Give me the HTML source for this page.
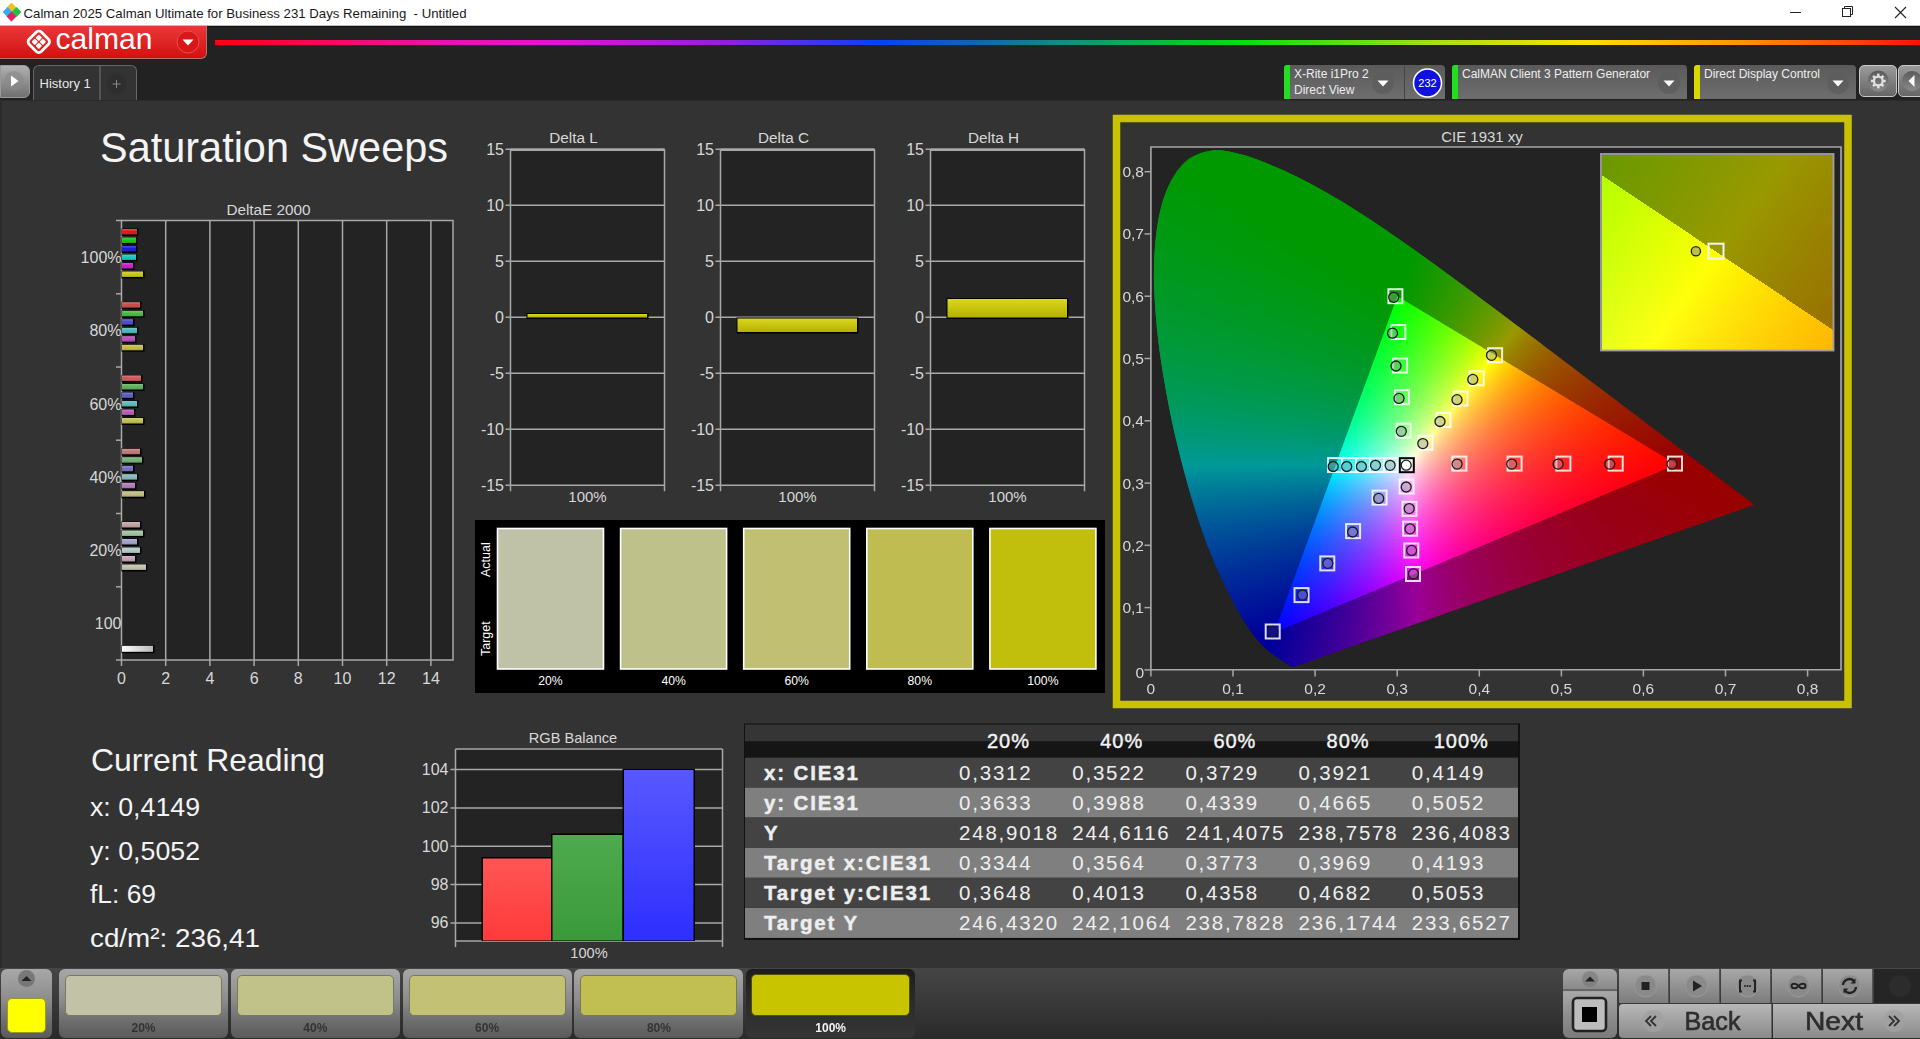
<!DOCTYPE html><html><head><meta charset="utf-8"><style>
*{margin:0;padding:0;box-sizing:border-box}
html,body{width:1920px;height:1039px;overflow:hidden;background:#333;font-family:"Liberation Sans",sans-serif}
.abs{position:absolute}
#title{left:0;top:0;width:1920px;height:26px;background:#fff;border-bottom:1px solid #bdbdbd}
#tb{left:0;top:26px;width:1920px;height:74px;background:#222;border-top:1px solid #111}
#main{left:0;top:100px;width:1920px;height:868px;background:#333;border-top:1px solid #2a2a2a;border-left:2px solid #2b2b2b}
#bot{left:0;top:968px;width:1920px;height:71px;background:#333}
svg text{font-family:"Liberation Sans",sans-serif}
</style></head><body>

<div id="title" class="abs">
<svg class="abs" style="left:2px;top:3px" width="20" height="20" viewBox="0 0 20 20">
<rect x="6" y="1" width="7" height="7" transform="rotate(45 9.5 4.5)" fill="#f0c020"/>
<rect x="2" y="5.5" width="7" height="7" transform="rotate(45 5.5 9)" fill="#30b0f0"/>
<rect x="11" y="5.5" width="7" height="7" transform="rotate(45 14.5 9)" fill="#20c040"/>
<rect x="6" y="10" width="7" height="7" transform="rotate(45 9.5 13.5)" fill="#e02060"/>
</svg>
<svg class="abs" style="left:0;top:0" width="520" height="25"><text x="23.5" y="17.8" font-size="13.6" fill="#1a1a1a" textLength="443" lengthAdjust="spacingAndGlyphs" xml:space="preserve">Calman 2025 Calman Ultimate for Business 231 Days Remaining  - Untitled</text></svg>
<svg class="abs" style="left:1780px;top:0" width="140" height="25">
<line x1="10" y1="12.5" x2="21" y2="12.5" stroke="#222" stroke-width="1"/>
<rect x="62.5" y="8.5" width="8" height="8" fill="none" stroke="#222"/>
<path d="M64.5 8.5V6.5H72.5V14.5H70.5" fill="none" stroke="#222"/>
<path d="M115 7L126 18M126 7L115 18" stroke="#222" stroke-width="1.1"/>
</svg>
</div>
<div id="tb" class="abs"></div>
<div class="abs" style="left:0;top:26px;width:207px;height:33px;border-radius:0 0 6px 0;background:linear-gradient(#e83838,#d41010);border-bottom:1px solid #b07070;border-right:1px solid #b07070"></div>
<svg class="abs" style="left:0;top:26px" width="207" height="33">
<g transform="translate(38.8 15.8) rotate(45)">
<rect x="-8.6" y="-8.6" width="17.2" height="17.2" rx="3.5" fill="none" stroke="#fff" stroke-width="2.8"/>
<rect x="-5.2" y="-5.2" width="4.7" height="4.7" rx="1" fill="#fff"/>
<rect x="0.5" y="-5.2" width="4.7" height="4.7" rx="1" fill="#fff"/>
<rect x="-5.2" y="0.5" width="4.7" height="4.7" rx="1" fill="#fff"/>
<rect x="0.5" y="0.5" width="4.7" height="4.7" rx="1" fill="#fff"/>
</g>
<text x="55.5" y="23" font-size="29" fill="#fff" textLength="97" lengthAdjust="spacingAndGlyphs">calman</text>
<circle cx="188" cy="16" r="11" fill="#d81818" stroke="#e85050" stroke-width="1"/>
<path d="M182.5 13.5h11l-5.5 6z" fill="#fff"/>
</svg>
<div class="abs" style="left:215px;top:40px;width:1705px;height:5px;background:linear-gradient(90deg,#ff0010 0%,#f010a0 12%,#e810d8 20%,#9020e0 30%,#0840ff 39%,#1070a0 46%,#109080 50%,#00e010 60%,#a0e010 71%,#ffe000 80.5%,#ff9000 90%,#ff1010 100%)"></div>
<div class="abs" style="left:0;top:65px;width:30px;height:33px;border-radius:0 6px 6px 0;background:linear-gradient(#b0b0b0,#707070);border:1px solid #999"></div>
<svg class="abs" style="left:0;top:65px" width="30" height="33"><circle cx="14" cy="16" r="10" fill="#888" opacity="0.6"/><path d="M11 10.5v11l7.5-5.5z" fill="#fff"/></svg>
<div class="abs" style="left:33px;top:65px;width:104px;height:35px;border-radius:6px 6px 0 0;background:#333;border:1px solid #666;border-bottom:none"></div>
<div class="abs" style="left:99px;top:66px;width:2px;height:34px;background:#555"></div>
<div class="abs" style="left:39.5px;top:75.5px;font-size:13px;color:#e8e8e8;line-height:16px">History 1</div>
<svg class="abs" style="left:102px;top:66px" width="34" height="34"><circle cx="14.5" cy="18" r="10" fill="#2e2e2e"/><path d="M14.5 14v8M10.5 18h8" stroke="#888" stroke-width="1"/></svg>

<div class="abs" style="left:1284px;top:65px;width:161px;height:34px;border-radius:4px 4px 0 0;background:linear-gradient(#5a5a5a,#6e6e6e);"></div><div class="abs" style="left:1284px;top:65px;width:6px;height:34px;background:#22dd22;border-radius:3px 0 0 0"></div><div class="abs" style="left:1294px;top:67px;font-size:12px;color:#eee;line-height:14px;white-space:nowrap">X-Rite i1Pro 2</div><div class="abs" style="left:1294px;top:83px;font-size:12px;color:#eee;line-height:14px;white-space:nowrap">Direct View</div><svg class="abs" style="left:1370px;top:70px" width="26" height="26"><circle cx="13" cy="13" r="11" fill="#5c5c5c" opacity="0.8"/><path d="M7.5 10.5h11l-5.5 6z" fill="#fff"/></svg>
<div class="abs" style="left:1404px;top:66px;width:1px;height:33px;background:#444"></div>
<svg class="abs" style="left:1412px;top:68px" width="32" height="32"><circle cx="15.5" cy="15" r="14" fill="#1010e0" stroke="#fff" stroke-width="1.5"/><text x="15.5" y="19" font-size="11" fill="#fff" text-anchor="middle">232</text></svg>
<div class="abs" style="left:1452px;top:65px;width:235px;height:34px;border-radius:4px 4px 0 0;background:linear-gradient(#5a5a5a,#6e6e6e);"></div><div class="abs" style="left:1452px;top:65px;width:6px;height:34px;background:#22dd22;border-radius:3px 0 0 0"></div><div class="abs" style="left:1462px;top:67px;font-size:12px;color:#eee;line-height:14px;white-space:nowrap">CalMAN Client 3 Pattern Generator</div><svg class="abs" style="left:1656px;top:70px" width="26" height="26"><circle cx="13" cy="13" r="11" fill="#5c5c5c" opacity="0.8"/><path d="M7.5 10.5h11l-5.5 6z" fill="#fff"/></svg>
<div class="abs" style="left:1694px;top:65px;width:162px;height:34px;border-radius:4px 4px 0 0;background:linear-gradient(#5a5a5a,#6e6e6e);"></div><div class="abs" style="left:1694px;top:65px;width:6px;height:34px;background:#d8d800;border-radius:3px 0 0 0"></div><div class="abs" style="left:1704px;top:67px;font-size:12px;color:#eee;line-height:14px;white-space:nowrap">Direct Display Control</div><svg class="abs" style="left:1825px;top:70px" width="26" height="26"><circle cx="13" cy="13" r="11" fill="#5c5c5c" opacity="0.8"/><path d="M7.5 10.5h11l-5.5 6z" fill="#fff"/></svg>
<div class="abs" style="left:1859px;top:65px;width:38px;height:32px;border-radius:5px;background:linear-gradient(#9a9a9a,#666);border:1.5px solid #c8c8c8"></div>
<svg class="abs" style="left:1859px;top:65px" width="38" height="32"><defs><linearGradient id="gdk" x1="0" y1="0" x2="0" y2="1"><stop offset="0" stop-color="#5a5a5a"/><stop offset="1" stop-color="#8a8a8a"/></linearGradient></defs>
<circle cx="19.3" cy="16" r="10.5" fill="url(#gdk)"/>
<g transform="translate(19.3 16)" fill="#e0e0e0"><circle r="4.4" fill="none" stroke="#e0e0e0" stroke-width="2.3"/>
<rect x="-1.25" y="-7.4" width="2.5" height="3"/><rect x="-1.25" y="-7.4" width="2.5" height="3" transform="rotate(45)"/><rect x="-1.25" y="-7.4" width="2.5" height="3" transform="rotate(90)"/><rect x="-1.25" y="-7.4" width="2.5" height="3" transform="rotate(135)"/><rect x="-1.25" y="-7.4" width="2.5" height="3" transform="rotate(180)"/><rect x="-1.25" y="-7.4" width="2.5" height="3" transform="rotate(225)"/><rect x="-1.25" y="-7.4" width="2.5" height="3" transform="rotate(270)"/><rect x="-1.25" y="-7.4" width="2.5" height="3" transform="rotate(315)"/></g></svg>
<div class="abs" style="left:1898px;top:65px;width:24px;height:32px;border-radius:5px 0 0 5px;background:linear-gradient(#9a9a9a,#666);border:1.5px solid #c8c8c8"></div>
<svg class="abs" style="left:1898px;top:65px" width="22" height="32"><circle cx="14" cy="16" r="10" fill="url(#gdk)"/><path d="M10.5 16l6 -6v12z" fill="#fff"/></svg>

<div id="main" class="abs"></div>
<svg class="abs" style="left:0;top:0" width="1920" height="1039">
<text x="100" y="162.3" font-size="42" fill="#f4f4f4" textLength="348" lengthAdjust="spacingAndGlyphs">Saturation Sweeps</text>
<text x="268.5" y="215" font-size="15.3" fill="#d8d8d8" text-anchor="middle">DeltaE 2000</text>
<rect x="121.5" y="220.5" width="331.5" height="439.5" fill="#232323"/>
<line x1="165.7" y1="220.5" x2="165.7" y2="660" stroke="#a8a8a8" stroke-width="1.5"/>
<line x1="209.9" y1="220.5" x2="209.9" y2="660" stroke="#a8a8a8" stroke-width="1.5"/>
<line x1="254.1" y1="220.5" x2="254.1" y2="660" stroke="#a8a8a8" stroke-width="1.5"/>
<line x1="298.3" y1="220.5" x2="298.3" y2="660" stroke="#a8a8a8" stroke-width="1.5"/>
<line x1="342.5" y1="220.5" x2="342.5" y2="660" stroke="#a8a8a8" stroke-width="1.5"/>
<line x1="386.7" y1="220.5" x2="386.7" y2="660" stroke="#a8a8a8" stroke-width="1.5"/>
<line x1="430.9" y1="220.5" x2="430.9" y2="660" stroke="#a8a8a8" stroke-width="1.5"/>
<path d="M121.5 220.5 H453 V660 H121.5 Z" fill="none" stroke="#a8a8a8" stroke-width="1.5"/>
<line x1="116" y1="220.5" x2="121.5" y2="220.5" stroke="#a8a8a8" stroke-width="1.5"/>
<line x1="116" y1="293.8" x2="121.5" y2="293.8" stroke="#a8a8a8" stroke-width="1.5"/>
<line x1="116" y1="367.0" x2="121.5" y2="367.0" stroke="#a8a8a8" stroke-width="1.5"/>
<line x1="116" y1="440.2" x2="121.5" y2="440.2" stroke="#a8a8a8" stroke-width="1.5"/>
<line x1="116" y1="513.5" x2="121.5" y2="513.5" stroke="#a8a8a8" stroke-width="1.5"/>
<line x1="116" y1="586.8" x2="121.5" y2="586.8" stroke="#a8a8a8" stroke-width="1.5"/>
<line x1="116" y1="660.0" x2="121.5" y2="660.0" stroke="#a8a8a8" stroke-width="1.5"/>
<text x="121.5" y="263.1" font-size="16" fill="#d8d8d8" text-anchor="end">100%</text>
<text x="121.5" y="336.4" font-size="16" fill="#d8d8d8" text-anchor="end">80%</text>
<text x="121.5" y="409.6" font-size="16" fill="#d8d8d8" text-anchor="end">60%</text>
<text x="121.5" y="482.9" font-size="16" fill="#d8d8d8" text-anchor="end">40%</text>
<text x="121.5" y="556.1" font-size="16" fill="#d8d8d8" text-anchor="end">20%</text>
<text x="121.5" y="629.4" font-size="16" fill="#d8d8d8" text-anchor="end">100</text>
<line x1="121.5" y1="660" x2="121.5" y2="666" stroke="#a8a8a8" stroke-width="1.5"/>
<text x="121.5" y="684" font-size="16" fill="#d8d8d8" text-anchor="middle">0</text>
<line x1="165.7" y1="660" x2="165.7" y2="666" stroke="#a8a8a8" stroke-width="1.5"/>
<text x="165.7" y="684" font-size="16" fill="#d8d8d8" text-anchor="middle">2</text>
<line x1="209.9" y1="660" x2="209.9" y2="666" stroke="#a8a8a8" stroke-width="1.5"/>
<text x="209.9" y="684" font-size="16" fill="#d8d8d8" text-anchor="middle">4</text>
<line x1="254.1" y1="660" x2="254.1" y2="666" stroke="#a8a8a8" stroke-width="1.5"/>
<text x="254.1" y="684" font-size="16" fill="#d8d8d8" text-anchor="middle">6</text>
<line x1="298.3" y1="660" x2="298.3" y2="666" stroke="#a8a8a8" stroke-width="1.5"/>
<text x="298.3" y="684" font-size="16" fill="#d8d8d8" text-anchor="middle">8</text>
<line x1="342.5" y1="660" x2="342.5" y2="666" stroke="#a8a8a8" stroke-width="1.5"/>
<text x="342.5" y="684" font-size="16" fill="#d8d8d8" text-anchor="middle">10</text>
<line x1="386.7" y1="660" x2="386.7" y2="666" stroke="#a8a8a8" stroke-width="1.5"/>
<text x="386.7" y="684" font-size="16" fill="#d8d8d8" text-anchor="middle">12</text>
<line x1="430.9" y1="660" x2="430.9" y2="666" stroke="#a8a8a8" stroke-width="1.5"/>
<text x="430.9" y="684" font-size="16" fill="#d8d8d8" text-anchor="middle">14</text>
<defs><linearGradient id="bsh" x1="0" y1="0" x2="0" y2="1"><stop offset="0" stop-color="#fff" stop-opacity="0.25"/><stop offset="0.5" stop-color="#fff" stop-opacity="0"/><stop offset="1" stop-color="#000" stop-opacity="0.2"/></linearGradient></defs>
<rect x="121.5" y="228.5" width="17" height="7.5" fill="#000"/>
<rect x="122" y="229.0" width="15" height="5.5" fill="#d81818"/>
<rect x="122" y="229.0" width="15" height="5.5" fill="url(#bsh)"/>
<rect x="121.5" y="237.0" width="16" height="7.5" fill="#000"/>
<rect x="122" y="237.5" width="14" height="5.5" fill="#18c018"/>
<rect x="122" y="237.5" width="14" height="5.5" fill="url(#bsh)"/>
<rect x="121.5" y="245.5" width="16" height="7.5" fill="#000"/>
<rect x="122" y="246.0" width="14" height="5.5" fill="#1818d0"/>
<rect x="122" y="246.0" width="14" height="5.5" fill="url(#bsh)"/>
<rect x="121.5" y="254.0" width="16" height="7.5" fill="#000"/>
<rect x="122" y="254.5" width="14" height="5.5" fill="#18c0c0"/>
<rect x="122" y="254.5" width="14" height="5.5" fill="url(#bsh)"/>
<rect x="121.5" y="262.5" width="13" height="7.5" fill="#000"/>
<rect x="122" y="263.0" width="11" height="5.5" fill="#c818c8"/>
<rect x="122" y="263.0" width="11" height="5.5" fill="url(#bsh)"/>
<rect x="121.5" y="271.0" width="23" height="7.5" fill="#000"/>
<rect x="122" y="271.5" width="21" height="5.5" fill="#c8c418"/>
<rect x="122" y="271.5" width="21" height="5.5" fill="url(#bsh)"/>
<rect x="121.5" y="301.8" width="20" height="7.5" fill="#000"/>
<rect x="122" y="302.2" width="18" height="5.5" fill="#c84848"/>
<rect x="122" y="302.2" width="18" height="5.5" fill="url(#bsh)"/>
<rect x="121.5" y="310.2" width="23" height="7.5" fill="#000"/>
<rect x="122" y="310.8" width="21" height="5.5" fill="#48b848"/>
<rect x="122" y="310.8" width="21" height="5.5" fill="url(#bsh)"/>
<rect x="121.5" y="318.8" width="13" height="7.5" fill="#000"/>
<rect x="122" y="319.2" width="11" height="5.5" fill="#4848c8"/>
<rect x="122" y="319.2" width="11" height="5.5" fill="url(#bsh)"/>
<rect x="121.5" y="327.2" width="17" height="7.5" fill="#000"/>
<rect x="122" y="327.8" width="15" height="5.5" fill="#48b8b8"/>
<rect x="122" y="327.8" width="15" height="5.5" fill="url(#bsh)"/>
<rect x="121.5" y="335.8" width="15" height="7.5" fill="#000"/>
<rect x="122" y="336.2" width="13" height="5.5" fill="#b848b8"/>
<rect x="122" y="336.2" width="13" height="5.5" fill="url(#bsh)"/>
<rect x="121.5" y="344.2" width="23" height="7.5" fill="#000"/>
<rect x="122" y="344.8" width="21" height="5.5" fill="#c0bc48"/>
<rect x="122" y="344.8" width="21" height="5.5" fill="url(#bsh)"/>
<rect x="121.5" y="375.0" width="21" height="7.5" fill="#000"/>
<rect x="122" y="375.5" width="19" height="5.5" fill="#c85858"/>
<rect x="122" y="375.5" width="19" height="5.5" fill="url(#bsh)"/>
<rect x="121.5" y="383.5" width="23" height="7.5" fill="#000"/>
<rect x="122" y="384.0" width="21" height="5.5" fill="#58b058"/>
<rect x="122" y="384.0" width="21" height="5.5" fill="url(#bsh)"/>
<rect x="121.5" y="392.0" width="13" height="7.5" fill="#000"/>
<rect x="122" y="392.5" width="11" height="5.5" fill="#5858c0"/>
<rect x="122" y="392.5" width="11" height="5.5" fill="url(#bsh)"/>
<rect x="121.5" y="400.5" width="17" height="7.5" fill="#000"/>
<rect x="122" y="401.0" width="15" height="5.5" fill="#58b8b8"/>
<rect x="122" y="401.0" width="15" height="5.5" fill="url(#bsh)"/>
<rect x="121.5" y="409.0" width="14" height="7.5" fill="#000"/>
<rect x="122" y="409.5" width="12" height="5.5" fill="#b858b8"/>
<rect x="122" y="409.5" width="12" height="5.5" fill="url(#bsh)"/>
<rect x="121.5" y="417.5" width="23" height="7.5" fill="#000"/>
<rect x="122" y="418.0" width="21" height="5.5" fill="#c0bc58"/>
<rect x="122" y="418.0" width="21" height="5.5" fill="url(#bsh)"/>
<rect x="121.5" y="448.2" width="20" height="7.5" fill="#000"/>
<rect x="122" y="448.8" width="18" height="5.5" fill="#c07878"/>
<rect x="122" y="448.8" width="18" height="5.5" fill="url(#bsh)"/>
<rect x="121.5" y="456.8" width="22" height="7.5" fill="#000"/>
<rect x="122" y="457.2" width="20" height="5.5" fill="#70b070"/>
<rect x="122" y="457.2" width="20" height="5.5" fill="url(#bsh)"/>
<rect x="121.5" y="465.2" width="13" height="7.5" fill="#000"/>
<rect x="122" y="465.8" width="11" height="5.5" fill="#7070c0"/>
<rect x="122" y="465.8" width="11" height="5.5" fill="url(#bsh)"/>
<rect x="121.5" y="473.8" width="17" height="7.5" fill="#000"/>
<rect x="122" y="474.2" width="15" height="5.5" fill="#80b8b8"/>
<rect x="122" y="474.2" width="15" height="5.5" fill="url(#bsh)"/>
<rect x="121.5" y="482.2" width="15" height="7.5" fill="#000"/>
<rect x="122" y="482.8" width="13" height="5.5" fill="#b078b8"/>
<rect x="122" y="482.8" width="13" height="5.5" fill="url(#bsh)"/>
<rect x="121.5" y="490.8" width="24" height="7.5" fill="#000"/>
<rect x="122" y="491.2" width="22" height="5.5" fill="#c0bc80"/>
<rect x="122" y="491.2" width="22" height="5.5" fill="url(#bsh)"/>
<rect x="121.5" y="521.5" width="20" height="7.5" fill="#000"/>
<rect x="122" y="522.0" width="18" height="5.5" fill="#c0a0a0"/>
<rect x="122" y="522.0" width="18" height="5.5" fill="url(#bsh)"/>
<rect x="121.5" y="530.0" width="23" height="7.5" fill="#000"/>
<rect x="122" y="530.5" width="21" height="5.5" fill="#a0c0a0"/>
<rect x="122" y="530.5" width="21" height="5.5" fill="url(#bsh)"/>
<rect x="121.5" y="538.5" width="17" height="7.5" fill="#000"/>
<rect x="122" y="539.0" width="15" height="5.5" fill="#a0a0c8"/>
<rect x="122" y="539.0" width="15" height="5.5" fill="url(#bsh)"/>
<rect x="121.5" y="547.0" width="20" height="7.5" fill="#000"/>
<rect x="122" y="547.5" width="18" height="5.5" fill="#b0c8c8"/>
<rect x="122" y="547.5" width="18" height="5.5" fill="url(#bsh)"/>
<rect x="121.5" y="555.5" width="15" height="7.5" fill="#000"/>
<rect x="122" y="556.0" width="13" height="5.5" fill="#c0a0b8"/>
<rect x="122" y="556.0" width="13" height="5.5" fill="url(#bsh)"/>
<rect x="121.5" y="564.0" width="26" height="7.5" fill="#000"/>
<rect x="122" y="564.5" width="24" height="5.5" fill="#c0c0a8"/>
<rect x="122" y="564.5" width="24" height="5.5" fill="url(#bsh)"/>
<defs><linearGradient id="wbar" x1="0" y1="0" x2="1" y2="0"><stop offset="0" stop-color="#fff"/><stop offset="1" stop-color="#b8b8b8"/></linearGradient></defs>
<rect x="121.5" y="645.2" width="33" height="8" fill="#000"/>
<rect x="122" y="645.8" width="31" height="6" fill="url(#wbar)"/>
<defs><linearGradient id="ybar" x1="0" y1="0" x2="0" y2="1"><stop offset="0" stop-color="#dcd820"/><stop offset="1" stop-color="#b4b000"/></linearGradient></defs>
<text x="573.5" y="143" font-size="15.3" fill="#d8d8d8" text-anchor="middle">Delta L</text>
<rect x="510.5" y="149.3" width="154" height="336" fill="#232323"/>
<line x1="505.5" y1="149.3" x2="664.5" y2="149.3" stroke="#a8a8a8" stroke-width="1.5"/>
<text x="504" y="155.1" font-size="16" fill="#d8d8d8" text-anchor="end">15</text>
<line x1="505.5" y1="205.3" x2="664.5" y2="205.3" stroke="#a8a8a8" stroke-width="1.5"/>
<text x="504" y="211.1" font-size="16" fill="#d8d8d8" text-anchor="end">10</text>
<line x1="505.5" y1="261.3" x2="664.5" y2="261.3" stroke="#a8a8a8" stroke-width="1.5"/>
<text x="504" y="267.1" font-size="16" fill="#d8d8d8" text-anchor="end">5</text>
<line x1="505.5" y1="317.3" x2="664.5" y2="317.3" stroke="#a8a8a8" stroke-width="1.5"/>
<text x="504" y="323.1" font-size="16" fill="#d8d8d8" text-anchor="end">0</text>
<line x1="505.5" y1="373.3" x2="664.5" y2="373.3" stroke="#a8a8a8" stroke-width="1.5"/>
<text x="504" y="379.1" font-size="16" fill="#d8d8d8" text-anchor="end">-5</text>
<line x1="505.5" y1="429.3" x2="664.5" y2="429.3" stroke="#a8a8a8" stroke-width="1.5"/>
<text x="504" y="435.1" font-size="16" fill="#d8d8d8" text-anchor="end">-10</text>
<line x1="505.5" y1="485.3" x2="664.5" y2="485.3" stroke="#a8a8a8" stroke-width="1.5"/>
<text x="504" y="491.1" font-size="16" fill="#d8d8d8" text-anchor="end">-15</text>
<path d="M510.5 149.3 V491.3 M664.5 149.3 V491.3" stroke="#a8a8a8" stroke-width="1.5"/>
<line x1="510.5" y1="149.7" x2="664.5" y2="149.7" stroke="#a8a8a8" stroke-width="2.6"/>
<rect x="526.5" y="313" width="122" height="6" fill="#000"/>
<rect x="527.5" y="314" width="119.5" height="3.5" fill="url(#ybar)"/>
<text x="587.5" y="502" font-size="15" fill="#d8d8d8" text-anchor="middle">100%</text>
<text x="783.5" y="143" font-size="15.3" fill="#d8d8d8" text-anchor="middle">Delta C</text>
<rect x="720.5" y="149.3" width="154" height="336" fill="#232323"/>
<line x1="715.5" y1="149.3" x2="874.5" y2="149.3" stroke="#a8a8a8" stroke-width="1.5"/>
<text x="714" y="155.1" font-size="16" fill="#d8d8d8" text-anchor="end">15</text>
<line x1="715.5" y1="205.3" x2="874.5" y2="205.3" stroke="#a8a8a8" stroke-width="1.5"/>
<text x="714" y="211.1" font-size="16" fill="#d8d8d8" text-anchor="end">10</text>
<line x1="715.5" y1="261.3" x2="874.5" y2="261.3" stroke="#a8a8a8" stroke-width="1.5"/>
<text x="714" y="267.1" font-size="16" fill="#d8d8d8" text-anchor="end">5</text>
<line x1="715.5" y1="317.3" x2="874.5" y2="317.3" stroke="#a8a8a8" stroke-width="1.5"/>
<text x="714" y="323.1" font-size="16" fill="#d8d8d8" text-anchor="end">0</text>
<line x1="715.5" y1="373.3" x2="874.5" y2="373.3" stroke="#a8a8a8" stroke-width="1.5"/>
<text x="714" y="379.1" font-size="16" fill="#d8d8d8" text-anchor="end">-5</text>
<line x1="715.5" y1="429.3" x2="874.5" y2="429.3" stroke="#a8a8a8" stroke-width="1.5"/>
<text x="714" y="435.1" font-size="16" fill="#d8d8d8" text-anchor="end">-10</text>
<line x1="715.5" y1="485.3" x2="874.5" y2="485.3" stroke="#a8a8a8" stroke-width="1.5"/>
<text x="714" y="491.1" font-size="16" fill="#d8d8d8" text-anchor="end">-15</text>
<path d="M720.5 149.3 V491.3 M874.5 149.3 V491.3" stroke="#a8a8a8" stroke-width="1.5"/>
<line x1="720.5" y1="149.7" x2="874.5" y2="149.7" stroke="#a8a8a8" stroke-width="2.6"/>
<rect x="736.5" y="317.5" width="122" height="16" fill="#000"/>
<rect x="737.5" y="318.5" width="119.5" height="13.5" fill="url(#ybar)"/>
<text x="797.5" y="502" font-size="15" fill="#d8d8d8" text-anchor="middle">100%</text>
<text x="993.5" y="143" font-size="15.3" fill="#d8d8d8" text-anchor="middle">Delta H</text>
<rect x="930.5" y="149.3" width="154" height="336" fill="#232323"/>
<line x1="925.5" y1="149.3" x2="1084.5" y2="149.3" stroke="#a8a8a8" stroke-width="1.5"/>
<text x="924" y="155.1" font-size="16" fill="#d8d8d8" text-anchor="end">15</text>
<line x1="925.5" y1="205.3" x2="1084.5" y2="205.3" stroke="#a8a8a8" stroke-width="1.5"/>
<text x="924" y="211.1" font-size="16" fill="#d8d8d8" text-anchor="end">10</text>
<line x1="925.5" y1="261.3" x2="1084.5" y2="261.3" stroke="#a8a8a8" stroke-width="1.5"/>
<text x="924" y="267.1" font-size="16" fill="#d8d8d8" text-anchor="end">5</text>
<line x1="925.5" y1="317.3" x2="1084.5" y2="317.3" stroke="#a8a8a8" stroke-width="1.5"/>
<text x="924" y="323.1" font-size="16" fill="#d8d8d8" text-anchor="end">0</text>
<line x1="925.5" y1="373.3" x2="1084.5" y2="373.3" stroke="#a8a8a8" stroke-width="1.5"/>
<text x="924" y="379.1" font-size="16" fill="#d8d8d8" text-anchor="end">-5</text>
<line x1="925.5" y1="429.3" x2="1084.5" y2="429.3" stroke="#a8a8a8" stroke-width="1.5"/>
<text x="924" y="435.1" font-size="16" fill="#d8d8d8" text-anchor="end">-10</text>
<line x1="925.5" y1="485.3" x2="1084.5" y2="485.3" stroke="#a8a8a8" stroke-width="1.5"/>
<text x="924" y="491.1" font-size="16" fill="#d8d8d8" text-anchor="end">-15</text>
<path d="M930.5 149.3 V491.3 M1084.5 149.3 V491.3" stroke="#a8a8a8" stroke-width="1.5"/>
<line x1="930.5" y1="149.7" x2="1084.5" y2="149.7" stroke="#a8a8a8" stroke-width="2.6"/>
<rect x="946.5" y="298" width="122" height="21" fill="#000"/>
<rect x="947.5" y="299" width="119.5" height="18.5" fill="url(#ybar)"/>
<text x="1007.5" y="502" font-size="15" fill="#d8d8d8" text-anchor="middle">100%</text>
<rect x="475" y="520" width="630" height="173" fill="#000"/>
<rect x="497.5" y="528.5" width="106" height="140.5" fill="#c0c2a7" stroke="#fff" stroke-width="1.6"/>
<text x="550.5" y="685" font-size="12.2" fill="#fff" text-anchor="middle">20%</text>
<rect x="620.6" y="528.5" width="106" height="140.5" fill="#bec28a" stroke="#fff" stroke-width="1.6"/>
<text x="673.6" y="685" font-size="12.2" fill="#fff" text-anchor="middle">40%</text>
<rect x="743.7" y="528.5" width="106" height="140.5" fill="#c0bf72" stroke="#fff" stroke-width="1.6"/>
<text x="796.7" y="685" font-size="12.2" fill="#fff" text-anchor="middle">60%</text>
<rect x="866.8" y="528.5" width="106" height="140.5" fill="#bfbd52" stroke="#fff" stroke-width="1.6"/>
<text x="919.8" y="685" font-size="12.2" fill="#fff" text-anchor="middle">80%</text>
<rect x="989.9" y="528.5" width="106" height="140.5" fill="#c1bf0c" stroke="#fff" stroke-width="1.6"/>
<text x="1042.9" y="685" font-size="12.2" fill="#fff" text-anchor="middle">100%</text>
<text transform="translate(490 577) rotate(-90)" font-size="12.5" fill="#fff">Actual</text>
<text transform="translate(490 656) rotate(-90)" font-size="12.5" fill="#fff">Target</text>
<text x="91" y="770.7" font-size="30.5" fill="#f4f4f4" textLength="234" lengthAdjust="spacingAndGlyphs">Current Reading</text>
<text x="90" y="816.0" font-size="26.5" fill="#f4f4f4" textLength="110" lengthAdjust="spacingAndGlyphs">x: 0,4149</text>
<text x="90" y="859.6" font-size="26.5" fill="#f4f4f4" textLength="110" lengthAdjust="spacingAndGlyphs">y: 0,5052</text>
<text x="90" y="903.2" font-size="26.5" fill="#f4f4f4" textLength="66" lengthAdjust="spacingAndGlyphs">fL: 69</text>
<text x="90" y="946.8" font-size="26.5" fill="#f4f4f4" textLength="170" lengthAdjust="spacingAndGlyphs">cd/m²: 236,41</text>
<text x="573" y="743" font-size="14.6" fill="#d8d8d8" text-anchor="middle">RGB Balance</text>
<rect x="455.5" y="749" width="267" height="192" fill="#232323"/>
<line x1="450.5" y1="769.5" x2="722.5" y2="769.5" stroke="#a8a8a8" stroke-width="1.5"/>
<text x="448.5" y="775.0" font-size="16" fill="#d8d8d8" text-anchor="end">104</text>
<line x1="450.5" y1="807.9" x2="722.5" y2="807.9" stroke="#a8a8a8" stroke-width="1.5"/>
<text x="448.5" y="813.4" font-size="16" fill="#d8d8d8" text-anchor="end">102</text>
<line x1="450.5" y1="846.2" x2="722.5" y2="846.2" stroke="#a8a8a8" stroke-width="1.5"/>
<text x="448.5" y="851.7" font-size="16" fill="#d8d8d8" text-anchor="end">100</text>
<line x1="450.5" y1="884.5" x2="722.5" y2="884.5" stroke="#a8a8a8" stroke-width="1.5"/>
<text x="448.5" y="890.0" font-size="16" fill="#d8d8d8" text-anchor="end">98</text>
<line x1="450.5" y1="922.9" x2="722.5" y2="922.9" stroke="#a8a8a8" stroke-width="1.5"/>
<text x="448.5" y="928.4" font-size="16" fill="#d8d8d8" text-anchor="end">96</text>
<path d="M455.5 749 V947 M722.5 749 V947 M455.5 749 H722.5" fill="none" stroke="#a8a8a8" stroke-width="1.5"/>
<line x1="455.5" y1="941" x2="722.5" y2="941" stroke="#a8a8a8" stroke-width="1.5"/>
<defs><linearGradient id="rb" x1="0" y1="0" x2="0" y2="1"><stop offset="0" stop-color="#ff5555"/><stop offset="1" stop-color="#ff3a3a"/></linearGradient><linearGradient id="gb" x1="0" y1="0" x2="0" y2="1"><stop offset="0" stop-color="#4eaa4e"/><stop offset="1" stop-color="#3a9a3a"/></linearGradient><linearGradient id="bb" x1="0" y1="0" x2="0" y2="1"><stop offset="0" stop-color="#5858ff"/><stop offset="1" stop-color="#2e2eff"/></linearGradient></defs>
<rect x="481.5" y="857" width="71" height="84" fill="#000"/>
<rect x="483" y="858.5" width="68" height="82" fill="url(#rb)"/>
<rect x="551" y="833.5" width="73" height="107.5" fill="#000"/>
<rect x="552.5" y="835" width="70" height="105.5" fill="url(#gb)"/>
<rect x="622.5" y="768.5" width="72.5" height="172.5" fill="#000"/>
<rect x="624" y="770" width="69.5" height="170.5" fill="url(#bb)"/>
<text x="589" y="958" font-size="14.6" fill="#d8d8d8" text-anchor="middle">100%</text>
<rect x="744" y="723.5" width="776" height="216.5" fill="#111"/>
<rect x="745" y="724.5" width="773" height="17" fill="#353535"/>
<rect x="745" y="741.5" width="773" height="16" fill="#151515"/>
<text x="1008.5" y="747.6" font-size="20" fill="#f4f4f4" stroke="#f4f4f4" stroke-width="0.4" text-anchor="middle" style="letter-spacing:1px">20%</text>
<text x="1121.7" y="747.6" font-size="20" fill="#f4f4f4" stroke="#f4f4f4" stroke-width="0.4" text-anchor="middle" style="letter-spacing:1px">40%</text>
<text x="1234.9" y="747.6" font-size="20" fill="#f4f4f4" stroke="#f4f4f4" stroke-width="0.4" text-anchor="middle" style="letter-spacing:1px">60%</text>
<text x="1348.1" y="747.6" font-size="20" fill="#f4f4f4" stroke="#f4f4f4" stroke-width="0.4" text-anchor="middle" style="letter-spacing:1px">80%</text>
<text x="1461.3" y="747.6" font-size="20" fill="#f4f4f4" stroke="#f4f4f4" stroke-width="0.4" text-anchor="middle" style="letter-spacing:1px">100%</text>
<rect x="745" y="757.6" width="773" height="30" fill="#434343"/>
<text x="764" y="779.6" font-size="20.5" font-weight="bold" fill="#eeeeee" stroke="#eeeeee" stroke-width="0.45" style="letter-spacing:1.85px">x: CIE31</text>
<text x="959.0" y="779.6" font-size="20.5" fill="#eeeeee" style="letter-spacing:1.8px">0,3312</text>
<text x="1072.2" y="779.6" font-size="20.5" fill="#eeeeee" style="letter-spacing:1.8px">0,3522</text>
<text x="1185.4" y="779.6" font-size="20.5" fill="#eeeeee" style="letter-spacing:1.8px">0,3729</text>
<text x="1298.6" y="779.6" font-size="20.5" fill="#eeeeee" style="letter-spacing:1.8px">0,3921</text>
<text x="1411.8" y="779.6" font-size="20.5" fill="#eeeeee" style="letter-spacing:1.8px">0,4149</text>
<rect x="745" y="787.6" width="773" height="30" fill="#7f7f7f"/>
<text x="764" y="809.6" font-size="20.5" font-weight="bold" fill="#eeeeee" stroke="#eeeeee" stroke-width="0.45" style="letter-spacing:1.85px">y: CIE31</text>
<text x="959.0" y="809.6" font-size="20.5" fill="#eeeeee" style="letter-spacing:1.8px">0,3633</text>
<text x="1072.2" y="809.6" font-size="20.5" fill="#eeeeee" style="letter-spacing:1.8px">0,3988</text>
<text x="1185.4" y="809.6" font-size="20.5" fill="#eeeeee" style="letter-spacing:1.8px">0,4339</text>
<text x="1298.6" y="809.6" font-size="20.5" fill="#eeeeee" style="letter-spacing:1.8px">0,4665</text>
<text x="1411.8" y="809.6" font-size="20.5" fill="#eeeeee" style="letter-spacing:1.8px">0,5052</text>
<rect x="745" y="817.7" width="773" height="30" fill="#434343"/>
<text x="764" y="839.7" font-size="20.5" font-weight="bold" fill="#eeeeee" stroke="#eeeeee" stroke-width="0.45" style="letter-spacing:1.85px">Y</text>
<text x="959.0" y="839.7" font-size="20.5" fill="#eeeeee" style="letter-spacing:1.8px">248,9018</text>
<text x="1072.2" y="839.7" font-size="20.5" fill="#eeeeee" style="letter-spacing:1.8px">244,6116</text>
<text x="1185.4" y="839.7" font-size="20.5" fill="#eeeeee" style="letter-spacing:1.8px">241,4075</text>
<text x="1298.6" y="839.7" font-size="20.5" fill="#eeeeee" style="letter-spacing:1.8px">238,7578</text>
<text x="1411.8" y="839.7" font-size="20.5" fill="#eeeeee" style="letter-spacing:1.8px">236,4083</text>
<rect x="745" y="847.8" width="773" height="30" fill="#7f7f7f"/>
<text x="764" y="869.8" font-size="20.5" font-weight="bold" fill="#eeeeee" stroke="#eeeeee" stroke-width="0.45" style="letter-spacing:1.85px">Target x:CIE31</text>
<text x="959.0" y="869.8" font-size="20.5" fill="#eeeeee" style="letter-spacing:1.8px">0,3344</text>
<text x="1072.2" y="869.8" font-size="20.5" fill="#eeeeee" style="letter-spacing:1.8px">0,3564</text>
<text x="1185.4" y="869.8" font-size="20.5" fill="#eeeeee" style="letter-spacing:1.8px">0,3773</text>
<text x="1298.6" y="869.8" font-size="20.5" fill="#eeeeee" style="letter-spacing:1.8px">0,3969</text>
<text x="1411.8" y="869.8" font-size="20.5" fill="#eeeeee" style="letter-spacing:1.8px">0,4193</text>
<rect x="745" y="877.8" width="773" height="30" fill="#434343"/>
<text x="764" y="899.8" font-size="20.5" font-weight="bold" fill="#eeeeee" stroke="#eeeeee" stroke-width="0.45" style="letter-spacing:1.85px">Target y:CIE31</text>
<text x="959.0" y="899.8" font-size="20.5" fill="#eeeeee" style="letter-spacing:1.8px">0,3648</text>
<text x="1072.2" y="899.8" font-size="20.5" fill="#eeeeee" style="letter-spacing:1.8px">0,4013</text>
<text x="1185.4" y="899.8" font-size="20.5" fill="#eeeeee" style="letter-spacing:1.8px">0,4358</text>
<text x="1298.6" y="899.8" font-size="20.5" fill="#eeeeee" style="letter-spacing:1.8px">0,4682</text>
<text x="1411.8" y="899.8" font-size="20.5" fill="#eeeeee" style="letter-spacing:1.8px">0,5053</text>
<rect x="745" y="907.9" width="773" height="30" fill="#7f7f7f"/>
<text x="764" y="929.9" font-size="20.5" font-weight="bold" fill="#eeeeee" stroke="#eeeeee" stroke-width="0.45" style="letter-spacing:1.85px">Target Y</text>
<text x="959.0" y="929.9" font-size="20.5" fill="#eeeeee" style="letter-spacing:1.8px">246,4320</text>
<text x="1072.2" y="929.9" font-size="20.5" fill="#eeeeee" style="letter-spacing:1.8px">242,1064</text>
<text x="1185.4" y="929.9" font-size="20.5" fill="#eeeeee" style="letter-spacing:1.8px">238,7828</text>
<text x="1298.6" y="929.9" font-size="20.5" fill="#eeeeee" style="letter-spacing:1.8px">236,1744</text>
<text x="1411.8" y="929.9" font-size="20.5" fill="#eeeeee" style="letter-spacing:1.8px">233,6527</text>
<rect x="1116.5" y="118.5" width="731.5" height="586" fill="none" stroke="#c8c200" stroke-width="7.5"/>
<text x="1482" y="142" font-size="15" fill="#d8d8d8" text-anchor="middle">CIE 1931 xy</text>
<rect x="1150.9" y="147" width="690" height="522.8" fill="#232323"/>
<defs><clipPath id="locclip"><path d="M1293.8 666.8 1293.8 666.8 1293.7 666.8 1293.7 666.8 1293.6 666.8 1293.5 666.9 1293.4 666.9 1293.3 666.9 1293.2 666.9 1293.0 666.9 1292.9 666.9 1292.8 666.9 1292.6 666.9 1292.4 666.9 1292.1 666.8 1291.9 666.8 1291.6 666.7 1291.4 666.6 1291.2 666.5 1290.9 666.4 1290.7 666.3 1290.4 666.1 1290.2 666.0 1289.9 665.8 1289.6 665.6 1289.2 665.4 1288.8 665.1 1288.4 664.8 1287.9 664.5 1287.4 664.2 1286.9 663.9 1286.4 663.5 1285.9 663.1 1285.2 662.7 1284.6 662.3 1283.9 661.8 1283.1 661.3 1282.3 660.8 1281.4 660.2 1280.5 659.5 1279.5 658.9 1278.4 658.2 1277.3 657.4 1276.1 656.6 1274.9 655.8 1273.5 654.8 1272.1 653.8 1270.7 652.7 1269.1 651.4 1267.5 650.1 1265.8 648.7 1264.1 647.0 1262.1 645.1 1260.0 642.8 1257.8 640.2 1255.3 637.3 1252.8 633.9 1250.0 630.1 1247.2 626.0 1244.1 621.3 1240.9 615.8 1237.4 609.8 1233.8 603.1 1229.9 595.6 1225.8 587.3 1221.5 578.0 1216.8 568.0 1212.1 557.0 1207.3 544.9 1202.5 531.7 1197.7 517.5 1192.9 502.3 1188.2 486.2 1183.5 469.0 1178.8 450.7 1174.3 431.9 1170.2 412.9 1166.5 393.5 1163.0 373.7 1160.0 353.9 1157.6 334.6 1155.8 315.7 1154.6 297.2 1153.9 279.2 1154.1 262.1 1155.0 245.8 1156.7 230.3 1159.1 215.8 1162.3 202.7 1166.4 191.0 1171.3 180.6 1176.8 171.6 1182.8 164.2 1189.4 158.6 1196.6 154.7 1204.2 152.1 1211.9 150.6 1219.8 150.3 1228.0 151.3 1236.3 153.2 1244.6 155.3 1253.0 157.9 1261.4 161.0 1269.7 164.5 1277.9 168.0 1285.9 171.6 1293.8 175.3 1301.5 179.1 1309.3 183.1 1316.9 187.2 1324.4 191.4 1331.9 195.7 1339.4 200.1 1346.8 204.6 1354.3 209.3 1361.7 214.0 1369.1 218.8 1376.5 223.7 1383.8 228.6 1391.1 233.7 1398.5 238.7 1405.8 243.9 1413.1 249.0 1420.5 254.3 1427.8 259.5 1435.1 264.8 1442.5 270.2 1449.8 275.6 1457.2 281.0 1464.5 286.4 1471.8 291.8 1479.1 297.3 1486.4 302.7 1493.7 308.1 1501.0 313.6 1508.2 319.0 1515.5 324.4 1522.6 329.8 1529.8 335.2 1536.9 340.6 1543.9 345.9 1550.9 351.2 1557.9 356.5 1564.8 361.7 1571.6 366.8 1578.4 371.9 1585.0 377.0 1591.6 382.0 1598.1 386.9 1604.5 391.7 1610.8 396.5 1617.0 401.1 1623.1 405.7 1629.0 410.2 1634.8 414.6 1640.4 418.8 1645.8 423.0 1651.0 426.9 1656.0 430.7 1660.9 434.4 1665.6 437.9 1670.2 441.4 1674.6 444.7 1678.9 448.0 1683.0 451.0 1686.9 454.0 1690.6 456.7 1694.1 459.4 1697.5 461.9 1700.6 464.3 1703.6 466.6 1706.5 468.7 1709.2 470.8 1711.7 472.7 1714.1 474.5 1716.4 476.3 1718.6 477.9 1720.6 479.4 1722.5 480.9 1724.3 482.2 1726.0 483.5 1727.6 484.7 1729.2 485.9 1730.6 487.0 1732.0 488.0 1733.4 489.1 1734.6 490.0 1735.9 491.0 1737.0 491.8 1738.1 492.7 1739.2 493.5 1740.2 494.2 1741.1 495.0 1742.0 495.6 1742.9 496.2 1743.7 496.8 1744.4 497.4 1745.1 497.9 1745.7 498.4 1746.3 498.8 1746.9 499.3 1747.4 499.7 1747.9 500.0 1748.3 500.4 1748.8 500.7 1749.1 501.0 1749.4 501.2 1749.7 501.4 1750.2 501.7 1750.8 502.2 1751.6 502.8 1752.3 503.4 1752.9 503.9 1753.4 504.2 1753.7 504.4 1753.9 504.6 1754.0 504.7Z"/></clipPath></defs><g clip-path="url(#locclip)" shape-rendering="crispEdges">
<path d="M1191 147h10v10h-10z" fill="#009900"/>
<path d="M1201 147h10v10h-10z" fill="#009900"/>
<path d="M1211 147h10v10h-10z" fill="#009900"/>
<path d="M1221 147h10v10h-10z" fill="#009900"/>
<path d="M1231 147h10v10h-10z" fill="#009900"/>
<path d="M1241 147h10v10h-10z" fill="#009900"/>
<path d="M1171 157h10v10h-10z" fill="#009900"/>
<path d="M1181 157h10v10h-10z" fill="#009900"/>
<path d="M1191 157h10v10h-10z" fill="#009900"/>
<path d="M1201 157h10v10h-10z" fill="#009900"/>
<path d="M1211 157h10v10h-10z" fill="#009900"/>
<path d="M1221 157h10v10h-10z" fill="#009900"/>
<path d="M1231 157h10v10h-10z" fill="#009900"/>
<path d="M1241 157h10v10h-10z" fill="#009900"/>
<path d="M1251 157h10v10h-10z" fill="#009900"/>
<path d="M1261 157h10v10h-10z" fill="#009900"/>
<path d="M1271 157h10v10h-10z" fill="#009900"/>
<path d="M1171 167h10v10h-10z" fill="#009902"/>
<path d="M1181 167h10v10h-10z" fill="#009901"/>
<path d="M1191 167h10v10h-10z" fill="#009900"/>
<path d="M1201 167h10v10h-10z" fill="#009900"/>
<path d="M1211 167h10v10h-10z" fill="#009900"/>
<path d="M1221 167h10v10h-10z" fill="#009900"/>
<path d="M1231 167h10v10h-10z" fill="#009900"/>
<path d="M1241 167h10v10h-10z" fill="#009900"/>
<path d="M1251 167h10v10h-10z" fill="#009900"/>
<path d="M1261 167h10v10h-10z" fill="#009900"/>
<path d="M1271 167h10v10h-10z" fill="#009900"/>
<path d="M1281 167h10v10h-10z" fill="#009900"/>
<path d="M1291 167h10v10h-10z" fill="#009900"/>
<path d="M1161 177h10v10h-10z" fill="#009905"/>
<path d="M1171 177h10v10h-10z" fill="#009904"/>
<path d="M1181 177h10v10h-10z" fill="#009903"/>
<path d="M1191 177h10v10h-10z" fill="#009902"/>
<path d="M1201 177h10v10h-10z" fill="#009900"/>
<path d="M1211 177h10v10h-10z" fill="#009900"/>
<path d="M1221 177h10v10h-10z" fill="#009900"/>
<path d="M1231 177h10v10h-10z" fill="#009900"/>
<path d="M1241 177h10v10h-10z" fill="#009900"/>
<path d="M1251 177h10v10h-10z" fill="#009900"/>
<path d="M1261 177h10v10h-10z" fill="#009900"/>
<path d="M1271 177h10v10h-10z" fill="#009900"/>
<path d="M1281 177h10v10h-10z" fill="#009900"/>
<path d="M1291 177h10v10h-10z" fill="#009900"/>
<path d="M1301 177h10v10h-10z" fill="#009900"/>
<path d="M1311 177h10v10h-10z" fill="#009900"/>
<path d="M1161 187h10v10h-10z" fill="#009908"/>
<path d="M1171 187h10v10h-10z" fill="#009906"/>
<path d="M1181 187h10v10h-10z" fill="#009905"/>
<path d="M1191 187h10v10h-10z" fill="#009904"/>
<path d="M1201 187h10v10h-10z" fill="#009902"/>
<path d="M1211 187h10v10h-10z" fill="#009901"/>
<path d="M1221 187h10v10h-10z" fill="#009900"/>
<path d="M1231 187h10v10h-10z" fill="#009900"/>
<path d="M1241 187h10v10h-10z" fill="#009900"/>
<path d="M1251 187h10v10h-10z" fill="#009900"/>
<path d="M1261 187h10v10h-10z" fill="#009900"/>
<path d="M1271 187h10v10h-10z" fill="#009900"/>
<path d="M1281 187h10v10h-10z" fill="#009900"/>
<path d="M1291 187h10v10h-10z" fill="#009900"/>
<path d="M1301 187h10v10h-10z" fill="#009900"/>
<path d="M1311 187h10v10h-10z" fill="#009900"/>
<path d="M1321 187h10v10h-10z" fill="#009900"/>
<path d="M1331 187h10v10h-10z" fill="#009900"/>
<path d="M1161 197h10v10h-10z" fill="#00990a"/>
<path d="M1171 197h10v10h-10z" fill="#009909"/>
<path d="M1181 197h10v10h-10z" fill="#009907"/>
<path d="M1191 197h10v10h-10z" fill="#009906"/>
<path d="M1201 197h10v10h-10z" fill="#009905"/>
<path d="M1211 197h10v10h-10z" fill="#009903"/>
<path d="M1221 197h10v10h-10z" fill="#009902"/>
<path d="M1231 197h10v10h-10z" fill="#009901"/>
<path d="M1241 197h10v10h-10z" fill="#009900"/>
<path d="M1251 197h10v10h-10z" fill="#009900"/>
<path d="M1261 197h10v10h-10z" fill="#009900"/>
<path d="M1271 197h10v10h-10z" fill="#009900"/>
<path d="M1281 197h10v10h-10z" fill="#009900"/>
<path d="M1291 197h10v10h-10z" fill="#009900"/>
<path d="M1301 197h10v10h-10z" fill="#009900"/>
<path d="M1311 197h10v10h-10z" fill="#009900"/>
<path d="M1321 197h10v10h-10z" fill="#009900"/>
<path d="M1331 197h10v10h-10z" fill="#009900"/>
<path d="M1341 197h10v10h-10z" fill="#009900"/>
<path d="M1151 207h10v10h-10z" fill="#00990e"/>
<path d="M1161 207h10v10h-10z" fill="#00990c"/>
<path d="M1171 207h10v10h-10z" fill="#00990b"/>
<path d="M1181 207h10v10h-10z" fill="#00990a"/>
<path d="M1191 207h10v10h-10z" fill="#009909"/>
<path d="M1201 207h10v10h-10z" fill="#009907"/>
<path d="M1211 207h10v10h-10z" fill="#009906"/>
<path d="M1221 207h10v10h-10z" fill="#009905"/>
<path d="M1231 207h10v10h-10z" fill="#009903"/>
<path d="M1241 207h10v10h-10z" fill="#009902"/>
<path d="M1251 207h10v10h-10z" fill="#009900"/>
<path d="M1261 207h10v10h-10z" fill="#009900"/>
<path d="M1271 207h10v10h-10z" fill="#009900"/>
<path d="M1281 207h10v10h-10z" fill="#009900"/>
<path d="M1291 207h10v10h-10z" fill="#009900"/>
<path d="M1301 207h10v10h-10z" fill="#009900"/>
<path d="M1311 207h10v10h-10z" fill="#009900"/>
<path d="M1321 207h10v10h-10z" fill="#009900"/>
<path d="M1331 207h10v10h-10z" fill="#009900"/>
<path d="M1341 207h10v10h-10z" fill="#009900"/>
<path d="M1351 207h10v10h-10z" fill="#009900"/>
<path d="M1361 207h10v10h-10z" fill="#009900"/>
<path d="M1151 217h10v10h-10z" fill="#009910"/>
<path d="M1161 217h10v10h-10z" fill="#00990f"/>
<path d="M1171 217h10v10h-10z" fill="#00990e"/>
<path d="M1181 217h10v10h-10z" fill="#00990c"/>
<path d="M1191 217h10v10h-10z" fill="#00990b"/>
<path d="M1201 217h10v10h-10z" fill="#00990a"/>
<path d="M1211 217h10v10h-10z" fill="#009908"/>
<path d="M1221 217h10v10h-10z" fill="#009907"/>
<path d="M1231 217h10v10h-10z" fill="#009906"/>
<path d="M1241 217h10v10h-10z" fill="#009904"/>
<path d="M1251 217h10v10h-10z" fill="#009903"/>
<path d="M1261 217h10v10h-10z" fill="#009901"/>
<path d="M1271 217h10v10h-10z" fill="#009900"/>
<path d="M1281 217h10v10h-10z" fill="#009900"/>
<path d="M1291 217h10v10h-10z" fill="#009900"/>
<path d="M1301 217h10v10h-10z" fill="#009900"/>
<path d="M1311 217h10v10h-10z" fill="#009900"/>
<path d="M1321 217h10v10h-10z" fill="#009900"/>
<path d="M1331 217h10v10h-10z" fill="#009900"/>
<path d="M1341 217h10v10h-10z" fill="#009900"/>
<path d="M1351 217h10v10h-10z" fill="#009900"/>
<path d="M1361 217h10v10h-10z" fill="#009900"/>
<path d="M1371 217h10v10h-10z" fill="#009900"/>
<path d="M1381 217h10v10h-10z" fill="#009900"/>
<path d="M1151 227h10v10h-10z" fill="#009913"/>
<path d="M1161 227h10v10h-10z" fill="#009912"/>
<path d="M1171 227h10v10h-10z" fill="#009910"/>
<path d="M1181 227h10v10h-10z" fill="#00990f"/>
<path d="M1191 227h10v10h-10z" fill="#00990e"/>
<path d="M1201 227h10v10h-10z" fill="#00990c"/>
<path d="M1211 227h10v10h-10z" fill="#00990b"/>
<path d="M1221 227h10v10h-10z" fill="#00990a"/>
<path d="M1231 227h10v10h-10z" fill="#009908"/>
<path d="M1241 227h10v10h-10z" fill="#009907"/>
<path d="M1251 227h10v10h-10z" fill="#009905"/>
<path d="M1261 227h10v10h-10z" fill="#009904"/>
<path d="M1271 227h10v10h-10z" fill="#009902"/>
<path d="M1281 227h10v10h-10z" fill="#009901"/>
<path d="M1291 227h10v10h-10z" fill="#009900"/>
<path d="M1301 227h10v10h-10z" fill="#009900"/>
<path d="M1311 227h10v10h-10z" fill="#009900"/>
<path d="M1321 227h10v10h-10z" fill="#009900"/>
<path d="M1331 227h10v10h-10z" fill="#009900"/>
<path d="M1341 227h10v10h-10z" fill="#009900"/>
<path d="M1351 227h10v10h-10z" fill="#009900"/>
<path d="M1361 227h10v10h-10z" fill="#009900"/>
<path d="M1371 227h10v10h-10z" fill="#009900"/>
<path d="M1381 227h10v10h-10z" fill="#009900"/>
<path d="M1391 227h10v10h-10z" fill="#009900"/>
<path d="M1151 237h10v10h-10z" fill="#009916"/>
<path d="M1161 237h10v10h-10z" fill="#009915"/>
<path d="M1171 237h10v10h-10z" fill="#009913"/>
<path d="M1181 237h10v10h-10z" fill="#009912"/>
<path d="M1191 237h10v10h-10z" fill="#009911"/>
<path d="M1201 237h10v10h-10z" fill="#00990f"/>
<path d="M1211 237h10v10h-10z" fill="#00990e"/>
<path d="M1221 237h10v10h-10z" fill="#00990d"/>
<path d="M1231 237h10v10h-10z" fill="#00990b"/>
<path d="M1241 237h10v10h-10z" fill="#00990a"/>
<path d="M1251 237h10v10h-10z" fill="#009908"/>
<path d="M1261 237h10v10h-10z" fill="#009907"/>
<path d="M1271 237h10v10h-10z" fill="#009905"/>
<path d="M1281 237h10v10h-10z" fill="#009903"/>
<path d="M1291 237h10v10h-10z" fill="#009902"/>
<path d="M1301 237h10v10h-10z" fill="#009900"/>
<path d="M1311 237h10v10h-10z" fill="#009900"/>
<path d="M1321 237h10v10h-10z" fill="#009900"/>
<path d="M1331 237h10v10h-10z" fill="#009900"/>
<path d="M1341 237h10v10h-10z" fill="#009900"/>
<path d="M1351 237h10v10h-10z" fill="#009900"/>
<path d="M1361 237h10v10h-10z" fill="#009900"/>
<path d="M1371 237h10v10h-10z" fill="#009900"/>
<path d="M1381 237h10v10h-10z" fill="#009900"/>
<path d="M1391 237h10v10h-10z" fill="#009900"/>
<path d="M1401 237h10v10h-10z" fill="#009900"/>
<path d="M1151 247h10v10h-10z" fill="#009919"/>
<path d="M1161 247h10v10h-10z" fill="#009917"/>
<path d="M1171 247h10v10h-10z" fill="#009916"/>
<path d="M1181 247h10v10h-10z" fill="#009915"/>
<path d="M1191 247h10v10h-10z" fill="#009914"/>
<path d="M1201 247h10v10h-10z" fill="#009912"/>
<path d="M1211 247h10v10h-10z" fill="#009911"/>
<path d="M1221 247h10v10h-10z" fill="#00990f"/>
<path d="M1231 247h10v10h-10z" fill="#00990e"/>
<path d="M1241 247h10v10h-10z" fill="#00990d"/>
<path d="M1251 247h10v10h-10z" fill="#00990b"/>
<path d="M1261 247h10v10h-10z" fill="#00990a"/>
<path d="M1271 247h10v10h-10z" fill="#009908"/>
<path d="M1281 247h10v10h-10z" fill="#009906"/>
<path d="M1291 247h10v10h-10z" fill="#009905"/>
<path d="M1301 247h10v10h-10z" fill="#009903"/>
<path d="M1311 247h10v10h-10z" fill="#009901"/>
<path d="M1321 247h10v10h-10z" fill="#009900"/>
<path d="M1331 247h10v10h-10z" fill="#009900"/>
<path d="M1341 247h10v10h-10z" fill="#009900"/>
<path d="M1351 247h10v10h-10z" fill="#009900"/>
<path d="M1361 247h10v10h-10z" fill="#009900"/>
<path d="M1371 247h10v10h-10z" fill="#009900"/>
<path d="M1381 247h10v10h-10z" fill="#009900"/>
<path d="M1391 247h10v10h-10z" fill="#009900"/>
<path d="M1401 247h10v10h-10z" fill="#009900"/>
<path d="M1411 247h10v10h-10z" fill="#029900"/>
<path d="M1421 247h10v10h-10z" fill="#099900"/>
<path d="M1151 257h10v10h-10z" fill="#00991c"/>
<path d="M1161 257h10v10h-10z" fill="#00991b"/>
<path d="M1171 257h10v10h-10z" fill="#009919"/>
<path d="M1181 257h10v10h-10z" fill="#009918"/>
<path d="M1191 257h10v10h-10z" fill="#009917"/>
<path d="M1201 257h10v10h-10z" fill="#009915"/>
<path d="M1211 257h10v10h-10z" fill="#009914"/>
<path d="M1221 257h10v10h-10z" fill="#009913"/>
<path d="M1231 257h10v10h-10z" fill="#009911"/>
<path d="M1241 257h10v10h-10z" fill="#009910"/>
<path d="M1251 257h10v10h-10z" fill="#00990e"/>
<path d="M1261 257h10v10h-10z" fill="#00990d"/>
<path d="M1271 257h10v10h-10z" fill="#00990b"/>
<path d="M1281 257h10v10h-10z" fill="#009909"/>
<path d="M1291 257h10v10h-10z" fill="#009908"/>
<path d="M1301 257h10v10h-10z" fill="#009906"/>
<path d="M1311 257h10v10h-10z" fill="#009904"/>
<path d="M1321 257h10v10h-10z" fill="#009903"/>
<path d="M1331 257h10v10h-10z" fill="#009901"/>
<path d="M1341 257h10v10h-10z" fill="#009900"/>
<path d="M1351 257h10v10h-10z" fill="#009900"/>
<path d="M1361 257h10v10h-10z" fill="#009900"/>
<path d="M1371 257h10v10h-10z" fill="#009900"/>
<path d="M1381 257h10v10h-10z" fill="#009900"/>
<path d="M1391 257h10v10h-10z" fill="#009900"/>
<path d="M1401 257h10v10h-10z" fill="#009900"/>
<path d="M1411 257h10v10h-10z" fill="#059900"/>
<path d="M1421 257h10v10h-10z" fill="#0d9900"/>
<path d="M1431 257h10v10h-10z" fill="#159900"/>
<path d="M1151 267h10v10h-10z" fill="#00991f"/>
<path d="M1161 267h10v10h-10z" fill="#00991e"/>
<path d="M1171 267h10v10h-10z" fill="#00991d"/>
<path d="M1181 267h10v10h-10z" fill="#00991b"/>
<path d="M1191 267h10v10h-10z" fill="#00991a"/>
<path d="M1201 267h10v10h-10z" fill="#009919"/>
<path d="M1211 267h10v10h-10z" fill="#009917"/>
<path d="M1221 267h10v10h-10z" fill="#009916"/>
<path d="M1231 267h10v10h-10z" fill="#009914"/>
<path d="M1241 267h10v10h-10z" fill="#009913"/>
<path d="M1251 267h10v10h-10z" fill="#009911"/>
<path d="M1261 267h10v10h-10z" fill="#009910"/>
<path d="M1271 267h10v10h-10z" fill="#00990e"/>
<path d="M1281 267h10v10h-10z" fill="#00990d"/>
<path d="M1291 267h10v10h-10z" fill="#00990b"/>
<path d="M1301 267h10v10h-10z" fill="#009909"/>
<path d="M1311 267h10v10h-10z" fill="#009908"/>
<path d="M1321 267h10v10h-10z" fill="#009906"/>
<path d="M1331 267h10v10h-10z" fill="#009904"/>
<path d="M1341 267h10v10h-10z" fill="#009902"/>
<path d="M1351 267h10v10h-10z" fill="#009900"/>
<path d="M1361 267h10v10h-10z" fill="#009900"/>
<path d="M1371 267h10v10h-10z" fill="#009900"/>
<path d="M1381 267h10v10h-10z" fill="#009900"/>
<path d="M1391 267h10v10h-10z" fill="#009900"/>
<path d="M1401 267h10v10h-10z" fill="#009900"/>
<path d="M1411 267h10v10h-10z" fill="#089900"/>
<path d="M1421 267h10v10h-10z" fill="#109900"/>
<path d="M1431 267h10v10h-10z" fill="#189900"/>
<path d="M1441 267h10v10h-10z" fill="#219900"/>
<path d="M1451 267h10v10h-10z" fill="#2a9900"/>
<path d="M1151 277h10v10h-10z" fill="#009922"/>
<path d="M1161 277h10v10h-10z" fill="#009921"/>
<path d="M1171 277h10v10h-10z" fill="#009920"/>
<path d="M1181 277h10v10h-10z" fill="#00991f"/>
<path d="M1191 277h10v10h-10z" fill="#00991d"/>
<path d="M1201 277h10v10h-10z" fill="#00991c"/>
<path d="M1211 277h10v10h-10z" fill="#00991b"/>
<path d="M1221 277h10v10h-10z" fill="#009919"/>
<path d="M1231 277h10v10h-10z" fill="#009918"/>
<path d="M1241 277h10v10h-10z" fill="#009916"/>
<path d="M1251 277h10v10h-10z" fill="#009915"/>
<path d="M1261 277h10v10h-10z" fill="#009913"/>
<path d="M1271 277h10v10h-10z" fill="#009912"/>
<path d="M1281 277h10v10h-10z" fill="#009910"/>
<path d="M1291 277h10v10h-10z" fill="#00990e"/>
<path d="M1301 277h10v10h-10z" fill="#00990d"/>
<path d="M1311 277h10v10h-10z" fill="#00990b"/>
<path d="M1321 277h10v10h-10z" fill="#009909"/>
<path d="M1331 277h10v10h-10z" fill="#009907"/>
<path d="M1341 277h10v10h-10z" fill="#009905"/>
<path d="M1351 277h10v10h-10z" fill="#009904"/>
<path d="M1361 277h10v10h-10z" fill="#009902"/>
<path d="M1371 277h10v10h-10z" fill="#009900"/>
<path d="M1381 277h10v10h-10z" fill="#009900"/>
<path d="M1391 277h10v10h-10z" fill="#009900"/>
<path d="M1401 277h10v10h-10z" fill="#039900"/>
<path d="M1411 277h10v10h-10z" fill="#0b9900"/>
<path d="M1421 277h10v10h-10z" fill="#139900"/>
<path d="M1431 277h10v10h-10z" fill="#1c9900"/>
<path d="M1441 277h10v10h-10z" fill="#259900"/>
<path d="M1451 277h10v10h-10z" fill="#2e9900"/>
<path d="M1461 277h10v10h-10z" fill="#389900"/>
<path d="M1151 287h10v10h-10z" fill="#009926"/>
<path d="M1161 287h10v10h-10z" fill="#009925"/>
<path d="M1171 287h10v10h-10z" fill="#009924"/>
<path d="M1181 287h10v10h-10z" fill="#009922"/>
<path d="M1191 287h10v10h-10z" fill="#009921"/>
<path d="M1201 287h10v10h-10z" fill="#009920"/>
<path d="M1211 287h10v10h-10z" fill="#00991e"/>
<path d="M1221 287h10v10h-10z" fill="#00991d"/>
<path d="M1231 287h10v10h-10z" fill="#00991b"/>
<path d="M1241 287h10v10h-10z" fill="#00991a"/>
<path d="M1251 287h10v10h-10z" fill="#009918"/>
<path d="M1261 287h10v10h-10z" fill="#009917"/>
<path d="M1271 287h10v10h-10z" fill="#009915"/>
<path d="M1281 287h10v10h-10z" fill="#009914"/>
<path d="M1291 287h10v10h-10z" fill="#009912"/>
<path d="M1301 287h10v10h-10z" fill="#009910"/>
<path d="M1311 287h10v10h-10z" fill="#00990f"/>
<path d="M1321 287h10v10h-10z" fill="#00990d"/>
<path d="M1331 287h10v10h-10z" fill="#00990b"/>
<path d="M1341 287h10v10h-10z" fill="#009909"/>
<path d="M1351 287h10v10h-10z" fill="#009907"/>
<path d="M1361 287h10v10h-10z" fill="#009905"/>
<path d="M1371 287h10v10h-10z" fill="#009903"/>
<path d="M1381 287h10v10h-10z" fill="#009901"/>
<path d="M1391 287h10v10h-10z" fill="#009900"/>
<path d="M1401 287h10v10h-10z" fill="#069900"/>
<path d="M1411 287h10v10h-10z" fill="#0f9900"/>
<path d="M1421 287h10v10h-10z" fill="#179900"/>
<path d="M1431 287h10v10h-10z" fill="#209900"/>
<path d="M1441 287h10v10h-10z" fill="#2a9900"/>
<path d="M1451 287h10v10h-10z" fill="#339900"/>
<path d="M1461 287h10v10h-10z" fill="#3d9900"/>
<path d="M1471 287h10v10h-10z" fill="#479900"/>
<path d="M1151 297h10v10h-10z" fill="#00992a"/>
<path d="M1161 297h10v10h-10z" fill="#009929"/>
<path d="M1171 297h10v10h-10z" fill="#009927"/>
<path d="M1181 297h10v10h-10z" fill="#009926"/>
<path d="M1191 297h10v10h-10z" fill="#009925"/>
<path d="M1201 297h10v10h-10z" fill="#009923"/>
<path d="M1211 297h10v10h-10z" fill="#009922"/>
<path d="M1221 297h10v10h-10z" fill="#009921"/>
<path d="M1231 297h10v10h-10z" fill="#00991f"/>
<path d="M1241 297h10v10h-10z" fill="#00991e"/>
<path d="M1251 297h10v10h-10z" fill="#00991c"/>
<path d="M1261 297h10v10h-10z" fill="#00991b"/>
<path d="M1271 297h10v10h-10z" fill="#009919"/>
<path d="M1281 297h10v10h-10z" fill="#009918"/>
<path d="M1291 297h10v10h-10z" fill="#009916"/>
<path d="M1301 297h10v10h-10z" fill="#009914"/>
<path d="M1311 297h10v10h-10z" fill="#009912"/>
<path d="M1321 297h10v10h-10z" fill="#009911"/>
<path d="M1331 297h10v10h-10z" fill="#00990f"/>
<path d="M1341 297h10v10h-10z" fill="#00990d"/>
<path d="M1351 297h10v10h-10z" fill="#00990b"/>
<path d="M1361 297h10v10h-10z" fill="#009909"/>
<path d="M1371 297h10v10h-10z" fill="#009907"/>
<path d="M1381 297h10v10h-10z" fill="#009905"/>
<path d="M1391 297h10v10h-10z" fill="#01ff04"/>
<path d="M1401 297h10v10h-10z" fill="#10ff00"/>
<path d="M1411 297h10v10h-10z" fill="#129900"/>
<path d="M1421 297h10v10h-10z" fill="#1b9900"/>
<path d="M1431 297h10v10h-10z" fill="#259900"/>
<path d="M1441 297h10v10h-10z" fill="#2f9900"/>
<path d="M1451 297h10v10h-10z" fill="#399900"/>
<path d="M1461 297h10v10h-10z" fill="#439900"/>
<path d="M1471 297h10v10h-10z" fill="#4e9900"/>
<path d="M1481 297h10v10h-10z" fill="#599900"/>
<path d="M1491 297h10v10h-10z" fill="#649900"/>
<path d="M1151 307h10v10h-10z" fill="#00992e"/>
<path d="M1161 307h10v10h-10z" fill="#00992d"/>
<path d="M1171 307h10v10h-10z" fill="#00992b"/>
<path d="M1181 307h10v10h-10z" fill="#00992a"/>
<path d="M1191 307h10v10h-10z" fill="#009929"/>
<path d="M1201 307h10v10h-10z" fill="#009927"/>
<path d="M1211 307h10v10h-10z" fill="#009926"/>
<path d="M1221 307h10v10h-10z" fill="#009925"/>
<path d="M1231 307h10v10h-10z" fill="#009923"/>
<path d="M1241 307h10v10h-10z" fill="#009922"/>
<path d="M1251 307h10v10h-10z" fill="#009920"/>
<path d="M1261 307h10v10h-10z" fill="#00991f"/>
<path d="M1271 307h10v10h-10z" fill="#00991d"/>
<path d="M1281 307h10v10h-10z" fill="#00991c"/>
<path d="M1291 307h10v10h-10z" fill="#00991a"/>
<path d="M1301 307h10v10h-10z" fill="#009918"/>
<path d="M1311 307h10v10h-10z" fill="#009916"/>
<path d="M1321 307h10v10h-10z" fill="#009915"/>
<path d="M1331 307h10v10h-10z" fill="#009913"/>
<path d="M1341 307h10v10h-10z" fill="#009911"/>
<path d="M1351 307h10v10h-10z" fill="#00990f"/>
<path d="M1361 307h10v10h-10z" fill="#00990d"/>
<path d="M1371 307h10v10h-10z" fill="#00990b"/>
<path d="M1381 307h10v10h-10z" fill="#009909"/>
<path d="M1391 307h10v10h-10z" fill="#07ff0b"/>
<path d="M1401 307h10v10h-10z" fill="#16ff07"/>
<path d="M1411 307h10v10h-10z" fill="#25ff03"/>
<path d="M1421 307h10v10h-10z" fill="#209900"/>
<path d="M1431 307h10v10h-10z" fill="#2a9900"/>
<path d="M1441 307h10v10h-10z" fill="#349900"/>
<path d="M1451 307h10v10h-10z" fill="#3f9900"/>
<path d="M1461 307h10v10h-10z" fill="#499900"/>
<path d="M1471 307h10v10h-10z" fill="#559900"/>
<path d="M1481 307h10v10h-10z" fill="#619900"/>
<path d="M1491 307h10v10h-10z" fill="#6d9900"/>
<path d="M1501 307h10v10h-10z" fill="#799900"/>
<path d="M1151 317h10v10h-10z" fill="#009932"/>
<path d="M1161 317h10v10h-10z" fill="#009931"/>
<path d="M1171 317h10v10h-10z" fill="#009930"/>
<path d="M1181 317h10v10h-10z" fill="#00992e"/>
<path d="M1191 317h10v10h-10z" fill="#00992d"/>
<path d="M1201 317h10v10h-10z" fill="#00992c"/>
<path d="M1211 317h10v10h-10z" fill="#00992a"/>
<path d="M1221 317h10v10h-10z" fill="#009929"/>
<path d="M1231 317h10v10h-10z" fill="#009928"/>
<path d="M1241 317h10v10h-10z" fill="#009926"/>
<path d="M1251 317h10v10h-10z" fill="#009925"/>
<path d="M1261 317h10v10h-10z" fill="#009923"/>
<path d="M1271 317h10v10h-10z" fill="#009922"/>
<path d="M1281 317h10v10h-10z" fill="#009920"/>
<path d="M1291 317h10v10h-10z" fill="#00991e"/>
<path d="M1301 317h10v10h-10z" fill="#00991d"/>
<path d="M1311 317h10v10h-10z" fill="#00991b"/>
<path d="M1321 317h10v10h-10z" fill="#009919"/>
<path d="M1331 317h10v10h-10z" fill="#009917"/>
<path d="M1341 317h10v10h-10z" fill="#009915"/>
<path d="M1351 317h10v10h-10z" fill="#009913"/>
<path d="M1361 317h10v10h-10z" fill="#009911"/>
<path d="M1371 317h10v10h-10z" fill="#00990f"/>
<path d="M1381 317h10v10h-10z" fill="#00990d"/>
<path d="M1391 317h10v10h-10z" fill="#0dff12"/>
<path d="M1401 317h10v10h-10z" fill="#1cff0e"/>
<path d="M1411 317h10v10h-10z" fill="#2cff0a"/>
<path d="M1421 317h10v10h-10z" fill="#3dff06"/>
<path d="M1431 317h10v10h-10z" fill="#4eff02"/>
<path d="M1441 317h10v10h-10z" fill="#3a9900"/>
<path d="M1451 317h10v10h-10z" fill="#459900"/>
<path d="M1461 317h10v10h-10z" fill="#509900"/>
<path d="M1471 317h10v10h-10z" fill="#5c9900"/>
<path d="M1481 317h10v10h-10z" fill="#699900"/>
<path d="M1491 317h10v10h-10z" fill="#769900"/>
<path d="M1501 317h10v10h-10z" fill="#839900"/>
<path d="M1511 317h10v10h-10z" fill="#919900"/>
<path d="M1151 327h10v10h-10z" fill="#009936"/>
<path d="M1161 327h10v10h-10z" fill="#009935"/>
<path d="M1171 327h10v10h-10z" fill="#009934"/>
<path d="M1181 327h10v10h-10z" fill="#009933"/>
<path d="M1191 327h10v10h-10z" fill="#009932"/>
<path d="M1201 327h10v10h-10z" fill="#009930"/>
<path d="M1211 327h10v10h-10z" fill="#00992f"/>
<path d="M1221 327h10v10h-10z" fill="#00992e"/>
<path d="M1231 327h10v10h-10z" fill="#00992c"/>
<path d="M1241 327h10v10h-10z" fill="#00992b"/>
<path d="M1251 327h10v10h-10z" fill="#009929"/>
<path d="M1261 327h10v10h-10z" fill="#009928"/>
<path d="M1271 327h10v10h-10z" fill="#009926"/>
<path d="M1281 327h10v10h-10z" fill="#009925"/>
<path d="M1291 327h10v10h-10z" fill="#009923"/>
<path d="M1301 327h10v10h-10z" fill="#009921"/>
<path d="M1311 327h10v10h-10z" fill="#00991f"/>
<path d="M1321 327h10v10h-10z" fill="#00991e"/>
<path d="M1331 327h10v10h-10z" fill="#00991c"/>
<path d="M1341 327h10v10h-10z" fill="#00991a"/>
<path d="M1351 327h10v10h-10z" fill="#009918"/>
<path d="M1361 327h10v10h-10z" fill="#009916"/>
<path d="M1371 327h10v10h-10z" fill="#009914"/>
<path d="M1381 327h10v10h-10z" fill="#03ff1d"/>
<path d="M1391 327h10v10h-10z" fill="#13ff1a"/>
<path d="M1401 327h10v10h-10z" fill="#23ff16"/>
<path d="M1411 327h10v10h-10z" fill="#34ff12"/>
<path d="M1421 327h10v10h-10z" fill="#46ff0e"/>
<path d="M1431 327h10v10h-10z" fill="#58ff09"/>
<path d="M1441 327h10v10h-10z" fill="#6bff05"/>
<path d="M1451 327h10v10h-10z" fill="#7eff00"/>
<path d="M1461 327h10v10h-10z" fill="#589900"/>
<path d="M1471 327h10v10h-10z" fill="#659900"/>
<path d="M1481 327h10v10h-10z" fill="#729900"/>
<path d="M1491 327h10v10h-10z" fill="#7f9900"/>
<path d="M1501 327h10v10h-10z" fill="#8e9900"/>
<path d="M1511 327h10v10h-10z" fill="#999600"/>
<path d="M1521 327h10v10h-10z" fill="#998800"/>
<path d="M1531 327h10v10h-10z" fill="#997c00"/>
<path d="M1151 337h10v10h-10z" fill="#00993b"/>
<path d="M1161 337h10v10h-10z" fill="#00993a"/>
<path d="M1171 337h10v10h-10z" fill="#009939"/>
<path d="M1181 337h10v10h-10z" fill="#009938"/>
<path d="M1191 337h10v10h-10z" fill="#009936"/>
<path d="M1201 337h10v10h-10z" fill="#009935"/>
<path d="M1211 337h10v10h-10z" fill="#009934"/>
<path d="M1221 337h10v10h-10z" fill="#009932"/>
<path d="M1231 337h10v10h-10z" fill="#009931"/>
<path d="M1241 337h10v10h-10z" fill="#009930"/>
<path d="M1251 337h10v10h-10z" fill="#00992e"/>
<path d="M1261 337h10v10h-10z" fill="#00992d"/>
<path d="M1271 337h10v10h-10z" fill="#00992b"/>
<path d="M1281 337h10v10h-10z" fill="#00992a"/>
<path d="M1291 337h10v10h-10z" fill="#009928"/>
<path d="M1301 337h10v10h-10z" fill="#009926"/>
<path d="M1311 337h10v10h-10z" fill="#009924"/>
<path d="M1321 337h10v10h-10z" fill="#009923"/>
<path d="M1331 337h10v10h-10z" fill="#009921"/>
<path d="M1341 337h10v10h-10z" fill="#00991f"/>
<path d="M1351 337h10v10h-10z" fill="#00991d"/>
<path d="M1361 337h10v10h-10z" fill="#00991b"/>
<path d="M1371 337h10v10h-10z" fill="#009919"/>
<path d="M1381 337h10v10h-10z" fill="#09ff26"/>
<path d="M1391 337h10v10h-10z" fill="#1aff22"/>
<path d="M1401 337h10v10h-10z" fill="#2bff1e"/>
<path d="M1411 337h10v10h-10z" fill="#3dff1a"/>
<path d="M1421 337h10v10h-10z" fill="#4fff16"/>
<path d="M1431 337h10v10h-10z" fill="#62ff12"/>
<path d="M1441 337h10v10h-10z" fill="#76ff0d"/>
<path d="M1451 337h10v10h-10z" fill="#8bff08"/>
<path d="M1461 337h10v10h-10z" fill="#a1ff04"/>
<path d="M1471 337h10v10h-10z" fill="#6e9900"/>
<path d="M1481 337h10v10h-10z" fill="#7c9900"/>
<path d="M1491 337h10v10h-10z" fill="#8a9900"/>
<path d="M1501 337h10v10h-10z" fill="#999800"/>
<path d="M1511 337h10v10h-10z" fill="#998a00"/>
<path d="M1521 337h10v10h-10z" fill="#997e00"/>
<path d="M1531 337h10v10h-10z" fill="#997300"/>
<path d="M1541 337h10v10h-10z" fill="#996a00"/>
<path d="M1151 347h10v10h-10z" fill="#009940"/>
<path d="M1161 347h10v10h-10z" fill="#00993f"/>
<path d="M1171 347h10v10h-10z" fill="#00993e"/>
<path d="M1181 347h10v10h-10z" fill="#00993d"/>
<path d="M1191 347h10v10h-10z" fill="#00993b"/>
<path d="M1201 347h10v10h-10z" fill="#00993a"/>
<path d="M1211 347h10v10h-10z" fill="#009939"/>
<path d="M1221 347h10v10h-10z" fill="#009938"/>
<path d="M1231 347h10v10h-10z" fill="#009936"/>
<path d="M1241 347h10v10h-10z" fill="#009935"/>
<path d="M1251 347h10v10h-10z" fill="#009933"/>
<path d="M1261 347h10v10h-10z" fill="#009932"/>
<path d="M1271 347h10v10h-10z" fill="#009930"/>
<path d="M1281 347h10v10h-10z" fill="#00992f"/>
<path d="M1291 347h10v10h-10z" fill="#00992d"/>
<path d="M1301 347h10v10h-10z" fill="#00992c"/>
<path d="M1311 347h10v10h-10z" fill="#00992a"/>
<path d="M1321 347h10v10h-10z" fill="#009928"/>
<path d="M1331 347h10v10h-10z" fill="#009926"/>
<path d="M1341 347h10v10h-10z" fill="#009924"/>
<path d="M1351 347h10v10h-10z" fill="#009922"/>
<path d="M1361 347h10v10h-10z" fill="#009920"/>
<path d="M1371 347h10v10h-10z" fill="#00991e"/>
<path d="M1381 347h10v10h-10z" fill="#10ff2f"/>
<path d="M1391 347h10v10h-10z" fill="#21ff2b"/>
<path d="M1401 347h10v10h-10z" fill="#33ff27"/>
<path d="M1411 347h10v10h-10z" fill="#46ff23"/>
<path d="M1421 347h10v10h-10z" fill="#59ff1f"/>
<path d="M1431 347h10v10h-10z" fill="#6eff1b"/>
<path d="M1441 347h10v10h-10z" fill="#83ff16"/>
<path d="M1451 347h10v10h-10z" fill="#99ff11"/>
<path d="M1461 347h10v10h-10z" fill="#b0ff0d"/>
<path d="M1471 347h10v10h-10z" fill="#c8ff07"/>
<path d="M1481 347h10v10h-10z" fill="#e0ff02"/>
<path d="M1491 347h10v10h-10z" fill="#969900"/>
<path d="M1501 347h10v10h-10z" fill="#998d00"/>
<path d="M1511 347h10v10h-10z" fill="#997f00"/>
<path d="M1521 347h10v10h-10z" fill="#997400"/>
<path d="M1531 347h10v10h-10z" fill="#996a00"/>
<path d="M1541 347h10v10h-10z" fill="#996200"/>
<path d="M1551 347h10v10h-10z" fill="#995a00"/>
<path d="M1151 357h10v10h-10z" fill="#009945"/>
<path d="M1161 357h10v10h-10z" fill="#009944"/>
<path d="M1171 357h10v10h-10z" fill="#009943"/>
<path d="M1181 357h10v10h-10z" fill="#009942"/>
<path d="M1191 357h10v10h-10z" fill="#009941"/>
<path d="M1201 357h10v10h-10z" fill="#009940"/>
<path d="M1211 357h10v10h-10z" fill="#00993e"/>
<path d="M1221 357h10v10h-10z" fill="#00993d"/>
<path d="M1231 357h10v10h-10z" fill="#00993c"/>
<path d="M1241 357h10v10h-10z" fill="#00993a"/>
<path d="M1251 357h10v10h-10z" fill="#009939"/>
<path d="M1261 357h10v10h-10z" fill="#009938"/>
<path d="M1271 357h10v10h-10z" fill="#009936"/>
<path d="M1281 357h10v10h-10z" fill="#009935"/>
<path d="M1291 357h10v10h-10z" fill="#009933"/>
<path d="M1301 357h10v10h-10z" fill="#009931"/>
<path d="M1311 357h10v10h-10z" fill="#009930"/>
<path d="M1321 357h10v10h-10z" fill="#00992e"/>
<path d="M1331 357h10v10h-10z" fill="#00992c"/>
<path d="M1341 357h10v10h-10z" fill="#00992a"/>
<path d="M1351 357h10v10h-10z" fill="#009928"/>
<path d="M1361 357h10v10h-10z" fill="#009926"/>
<path d="M1371 357h10v10h-10z" fill="#05ff3c"/>
<path d="M1381 357h10v10h-10z" fill="#17ff39"/>
<path d="M1391 357h10v10h-10z" fill="#29ff35"/>
<path d="M1401 357h10v10h-10z" fill="#3cff31"/>
<path d="M1411 357h10v10h-10z" fill="#50ff2d"/>
<path d="M1421 357h10v10h-10z" fill="#65ff29"/>
<path d="M1431 357h10v10h-10z" fill="#7aff25"/>
<path d="M1441 357h10v10h-10z" fill="#91ff20"/>
<path d="M1451 357h10v10h-10z" fill="#a8ff1b"/>
<path d="M1461 357h10v10h-10z" fill="#c1ff16"/>
<path d="M1471 357h10v10h-10z" fill="#daff11"/>
<path d="M1481 357h10v10h-10z" fill="#f5ff0c"/>
<path d="M1491 357h10v10h-10z" fill="#ffee06"/>
<path d="M1501 357h10v10h-10z" fill="#ffd700"/>
<path d="M1511 357h10v10h-10z" fill="#997500"/>
<path d="M1521 357h10v10h-10z" fill="#996b00"/>
<path d="M1531 357h10v10h-10z" fill="#996200"/>
<path d="M1541 357h10v10h-10z" fill="#995a00"/>
<path d="M1551 357h10v10h-10z" fill="#995300"/>
<path d="M1561 357h10v10h-10z" fill="#994c00"/>
<path d="M1571 357h10v10h-10z" fill="#994600"/>
<path d="M1161 367h10v10h-10z" fill="#00994a"/>
<path d="M1171 367h10v10h-10z" fill="#009949"/>
<path d="M1181 367h10v10h-10z" fill="#009948"/>
<path d="M1191 367h10v10h-10z" fill="#009947"/>
<path d="M1201 367h10v10h-10z" fill="#009946"/>
<path d="M1211 367h10v10h-10z" fill="#009944"/>
<path d="M1221 367h10v10h-10z" fill="#009943"/>
<path d="M1231 367h10v10h-10z" fill="#009942"/>
<path d="M1241 367h10v10h-10z" fill="#009940"/>
<path d="M1251 367h10v10h-10z" fill="#00993f"/>
<path d="M1261 367h10v10h-10z" fill="#00993e"/>
<path d="M1271 367h10v10h-10z" fill="#00993c"/>
<path d="M1281 367h10v10h-10z" fill="#00993b"/>
<path d="M1291 367h10v10h-10z" fill="#009939"/>
<path d="M1301 367h10v10h-10z" fill="#009938"/>
<path d="M1311 367h10v10h-10z" fill="#009936"/>
<path d="M1321 367h10v10h-10z" fill="#009934"/>
<path d="M1331 367h10v10h-10z" fill="#009932"/>
<path d="M1341 367h10v10h-10z" fill="#009931"/>
<path d="M1351 367h10v10h-10z" fill="#00992f"/>
<path d="M1361 367h10v10h-10z" fill="#00992d"/>
<path d="M1371 367h10v10h-10z" fill="#0cff47"/>
<path d="M1381 367h10v10h-10z" fill="#1fff44"/>
<path d="M1391 367h10v10h-10z" fill="#32ff40"/>
<path d="M1401 367h10v10h-10z" fill="#46ff3c"/>
<path d="M1411 367h10v10h-10z" fill="#5bff38"/>
<path d="M1421 367h10v10h-10z" fill="#71ff34"/>
<path d="M1431 367h10v10h-10z" fill="#88ff30"/>
<path d="M1441 367h10v10h-10z" fill="#a0ff2b"/>
<path d="M1451 367h10v10h-10z" fill="#b9ff26"/>
<path d="M1461 367h10v10h-10z" fill="#d3ff21"/>
<path d="M1471 367h10v10h-10z" fill="#efff1c"/>
<path d="M1481 367h10v10h-10z" fill="#fff316"/>
<path d="M1491 367h10v10h-10z" fill="#ffdb0f"/>
<path d="M1501 367h10v10h-10z" fill="#ffc508"/>
<path d="M1511 367h10v10h-10z" fill="#ffb303"/>
<path d="M1521 367h10v10h-10z" fill="#996200"/>
<path d="M1531 367h10v10h-10z" fill="#995a00"/>
<path d="M1541 367h10v10h-10z" fill="#995200"/>
<path d="M1551 367h10v10h-10z" fill="#994c00"/>
<path d="M1561 367h10v10h-10z" fill="#994600"/>
<path d="M1571 367h10v10h-10z" fill="#994000"/>
<path d="M1581 367h10v10h-10z" fill="#993b00"/>
<path d="M1161 377h10v10h-10z" fill="#009950"/>
<path d="M1171 377h10v10h-10z" fill="#00994f"/>
<path d="M1181 377h10v10h-10z" fill="#00994e"/>
<path d="M1191 377h10v10h-10z" fill="#00994d"/>
<path d="M1201 377h10v10h-10z" fill="#00994c"/>
<path d="M1211 377h10v10h-10z" fill="#00994b"/>
<path d="M1221 377h10v10h-10z" fill="#009949"/>
<path d="M1231 377h10v10h-10z" fill="#009948"/>
<path d="M1241 377h10v10h-10z" fill="#009947"/>
<path d="M1251 377h10v10h-10z" fill="#009946"/>
<path d="M1261 377h10v10h-10z" fill="#009944"/>
<path d="M1271 377h10v10h-10z" fill="#009943"/>
<path d="M1281 377h10v10h-10z" fill="#009941"/>
<path d="M1291 377h10v10h-10z" fill="#009940"/>
<path d="M1301 377h10v10h-10z" fill="#00993e"/>
<path d="M1311 377h10v10h-10z" fill="#00993d"/>
<path d="M1321 377h10v10h-10z" fill="#00993b"/>
<path d="M1331 377h10v10h-10z" fill="#009939"/>
<path d="M1341 377h10v10h-10z" fill="#009938"/>
<path d="M1351 377h10v10h-10z" fill="#009936"/>
<path d="M1361 377h10v10h-10z" fill="#00ff56"/>
<path d="M1371 377h10v10h-10z" fill="#13ff53"/>
<path d="M1381 377h10v10h-10z" fill="#27ff50"/>
<path d="M1391 377h10v10h-10z" fill="#3cff4c"/>
<path d="M1401 377h10v10h-10z" fill="#51ff48"/>
<path d="M1411 377h10v10h-10z" fill="#68ff44"/>
<path d="M1421 377h10v10h-10z" fill="#7fff40"/>
<path d="M1431 377h10v10h-10z" fill="#97ff3c"/>
<path d="M1441 377h10v10h-10z" fill="#b1ff37"/>
<path d="M1451 377h10v10h-10z" fill="#ccff33"/>
<path d="M1461 377h10v10h-10z" fill="#e8ff2e"/>
<path d="M1471 377h10v10h-10z" fill="#fff827"/>
<path d="M1481 377h10v10h-10z" fill="#ffde1e"/>
<path d="M1491 377h10v10h-10z" fill="#ffc817"/>
<path d="M1501 377h10v10h-10z" fill="#ffb510"/>
<path d="M1511 377h10v10h-10z" fill="#ffa40b"/>
<path d="M1521 377h10v10h-10z" fill="#ff9506"/>
<path d="M1531 377h10v10h-10z" fill="#ff8901"/>
<path d="M1541 377h10v10h-10z" fill="#994b00"/>
<path d="M1551 377h10v10h-10z" fill="#994500"/>
<path d="M1561 377h10v10h-10z" fill="#993f00"/>
<path d="M1571 377h10v10h-10z" fill="#993b00"/>
<path d="M1581 377h10v10h-10z" fill="#993600"/>
<path d="M1591 377h10v10h-10z" fill="#993200"/>
<path d="M1161 387h10v10h-10z" fill="#009957"/>
<path d="M1171 387h10v10h-10z" fill="#009956"/>
<path d="M1181 387h10v10h-10z" fill="#009955"/>
<path d="M1191 387h10v10h-10z" fill="#009954"/>
<path d="M1201 387h10v10h-10z" fill="#009952"/>
<path d="M1211 387h10v10h-10z" fill="#009951"/>
<path d="M1221 387h10v10h-10z" fill="#009950"/>
<path d="M1231 387h10v10h-10z" fill="#00994f"/>
<path d="M1241 387h10v10h-10z" fill="#00994e"/>
<path d="M1251 387h10v10h-10z" fill="#00994d"/>
<path d="M1261 387h10v10h-10z" fill="#00994b"/>
<path d="M1271 387h10v10h-10z" fill="#00994a"/>
<path d="M1281 387h10v10h-10z" fill="#009949"/>
<path d="M1291 387h10v10h-10z" fill="#009947"/>
<path d="M1301 387h10v10h-10z" fill="#009946"/>
<path d="M1311 387h10v10h-10z" fill="#009944"/>
<path d="M1321 387h10v10h-10z" fill="#009943"/>
<path d="M1331 387h10v10h-10z" fill="#009941"/>
<path d="M1341 387h10v10h-10z" fill="#00993f"/>
<path d="M1351 387h10v10h-10z" fill="#00993d"/>
<path d="M1361 387h10v10h-10z" fill="#08ff63"/>
<path d="M1371 387h10v10h-10z" fill="#1cff60"/>
<path d="M1381 387h10v10h-10z" fill="#31ff5d"/>
<path d="M1391 387h10v10h-10z" fill="#47ff59"/>
<path d="M1401 387h10v10h-10z" fill="#5dff56"/>
<path d="M1411 387h10v10h-10z" fill="#75ff52"/>
<path d="M1421 387h10v10h-10z" fill="#8eff4e"/>
<path d="M1431 387h10v10h-10z" fill="#a9ff49"/>
<path d="M1441 387h10v10h-10z" fill="#c4ff45"/>
<path d="M1451 387h10v10h-10z" fill="#e1ff40"/>
<path d="M1461 387h10v10h-10z" fill="#fffe3b"/>
<path d="M1471 387h10v10h-10z" fill="#ffe230"/>
<path d="M1481 387h10v10h-10z" fill="#ffca27"/>
<path d="M1491 387h10v10h-10z" fill="#ffb61f"/>
<path d="M1501 387h10v10h-10z" fill="#ffa518"/>
<path d="M1511 387h10v10h-10z" fill="#ff9512"/>
<path d="M1521 387h10v10h-10z" fill="#ff880d"/>
<path d="M1531 387h10v10h-10z" fill="#ff7c08"/>
<path d="M1541 387h10v10h-10z" fill="#ff7204"/>
<path d="M1551 387h10v10h-10z" fill="#ff6800"/>
<path d="M1561 387h10v10h-10z" fill="#993a00"/>
<path d="M1571 387h10v10h-10z" fill="#993500"/>
<path d="M1581 387h10v10h-10z" fill="#993100"/>
<path d="M1591 387h10v10h-10z" fill="#992d00"/>
<path d="M1601 387h10v10h-10z" fill="#992900"/>
<path d="M1611 387h10v10h-10z" fill="#992600"/>
<path d="M1161 397h10v10h-10z" fill="#00995d"/>
<path d="M1171 397h10v10h-10z" fill="#00995d"/>
<path d="M1181 397h10v10h-10z" fill="#00995c"/>
<path d="M1191 397h10v10h-10z" fill="#00995b"/>
<path d="M1201 397h10v10h-10z" fill="#00995a"/>
<path d="M1211 397h10v10h-10z" fill="#009959"/>
<path d="M1221 397h10v10h-10z" fill="#009958"/>
<path d="M1231 397h10v10h-10z" fill="#009957"/>
<path d="M1241 397h10v10h-10z" fill="#009955"/>
<path d="M1251 397h10v10h-10z" fill="#009954"/>
<path d="M1261 397h10v10h-10z" fill="#009953"/>
<path d="M1271 397h10v10h-10z" fill="#009952"/>
<path d="M1281 397h10v10h-10z" fill="#009951"/>
<path d="M1291 397h10v10h-10z" fill="#00994f"/>
<path d="M1301 397h10v10h-10z" fill="#00994e"/>
<path d="M1311 397h10v10h-10z" fill="#00994c"/>
<path d="M1321 397h10v10h-10z" fill="#00994b"/>
<path d="M1331 397h10v10h-10z" fill="#009949"/>
<path d="M1341 397h10v10h-10z" fill="#009948"/>
<path d="M1351 397h10v10h-10z" fill="#009946"/>
<path d="M1361 397h10v10h-10z" fill="#10ff72"/>
<path d="M1371 397h10v10h-10z" fill="#25ff6f"/>
<path d="M1381 397h10v10h-10z" fill="#3bff6b"/>
<path d="M1391 397h10v10h-10z" fill="#52ff68"/>
<path d="M1401 397h10v10h-10z" fill="#6bff64"/>
<path d="M1411 397h10v10h-10z" fill="#85ff61"/>
<path d="M1421 397h10v10h-10z" fill="#a0ff5d"/>
<path d="M1431 397h10v10h-10z" fill="#bcff59"/>
<path d="M1441 397h10v10h-10z" fill="#daff54"/>
<path d="M1451 397h10v10h-10z" fill="#f9ff50"/>
<path d="M1461 397h10v10h-10z" fill="#ffe644"/>
<path d="M1471 397h10v10h-10z" fill="#ffcd38"/>
<path d="M1481 397h10v10h-10z" fill="#ffb72e"/>
<path d="M1491 397h10v10h-10z" fill="#ffa526"/>
<path d="M1501 397h10v10h-10z" fill="#ff951f"/>
<path d="M1511 397h10v10h-10z" fill="#ff8719"/>
<path d="M1521 397h10v10h-10z" fill="#ff7b13"/>
<path d="M1531 397h10v10h-10z" fill="#ff700e"/>
<path d="M1541 397h10v10h-10z" fill="#ff670a"/>
<path d="M1551 397h10v10h-10z" fill="#ff5e06"/>
<path d="M1561 397h10v10h-10z" fill="#ff5602"/>
<path d="M1571 397h10v10h-10z" fill="#992f00"/>
<path d="M1581 397h10v10h-10z" fill="#992c00"/>
<path d="M1591 397h10v10h-10z" fill="#992800"/>
<path d="M1601 397h10v10h-10z" fill="#992500"/>
<path d="M1611 397h10v10h-10z" fill="#992200"/>
<path d="M1621 397h10v10h-10z" fill="#991f00"/>
<path d="M1161 407h10v10h-10z" fill="#009965"/>
<path d="M1171 407h10v10h-10z" fill="#009964"/>
<path d="M1181 407h10v10h-10z" fill="#009963"/>
<path d="M1191 407h10v10h-10z" fill="#009962"/>
<path d="M1201 407h10v10h-10z" fill="#009962"/>
<path d="M1211 407h10v10h-10z" fill="#009961"/>
<path d="M1221 407h10v10h-10z" fill="#009960"/>
<path d="M1231 407h10v10h-10z" fill="#00995f"/>
<path d="M1241 407h10v10h-10z" fill="#00995e"/>
<path d="M1251 407h10v10h-10z" fill="#00995d"/>
<path d="M1261 407h10v10h-10z" fill="#00995c"/>
<path d="M1271 407h10v10h-10z" fill="#00995a"/>
<path d="M1281 407h10v10h-10z" fill="#009959"/>
<path d="M1291 407h10v10h-10z" fill="#009958"/>
<path d="M1301 407h10v10h-10z" fill="#009957"/>
<path d="M1311 407h10v10h-10z" fill="#009955"/>
<path d="M1321 407h10v10h-10z" fill="#009954"/>
<path d="M1331 407h10v10h-10z" fill="#009952"/>
<path d="M1341 407h10v10h-10z" fill="#009951"/>
<path d="M1351 407h10v10h-10z" fill="#03ff84"/>
<path d="M1361 407h10v10h-10z" fill="#18ff82"/>
<path d="M1371 407h10v10h-10z" fill="#2fff7f"/>
<path d="M1381 407h10v10h-10z" fill="#47ff7c"/>
<path d="M1391 407h10v10h-10z" fill="#60ff78"/>
<path d="M1401 407h10v10h-10z" fill="#7aff75"/>
<path d="M1411 407h10v10h-10z" fill="#96ff72"/>
<path d="M1421 407h10v10h-10z" fill="#b3ff6e"/>
<path d="M1431 407h10v10h-10z" fill="#d2ff6a"/>
<path d="M1441 407h10v10h-10z" fill="#f2ff66"/>
<path d="M1451 407h10v10h-10z" fill="#ffeb5a"/>
<path d="M1461 407h10v10h-10z" fill="#ffd04c"/>
<path d="M1471 407h10v10h-10z" fill="#ffb940"/>
<path d="M1481 407h10v10h-10z" fill="#ffa636"/>
<path d="M1491 407h10v10h-10z" fill="#ff952d"/>
<path d="M1501 407h10v10h-10z" fill="#ff8726"/>
<path d="M1511 407h10v10h-10z" fill="#ff7a1f"/>
<path d="M1521 407h10v10h-10z" fill="#ff6f19"/>
<path d="M1531 407h10v10h-10z" fill="#ff6514"/>
<path d="M1541 407h10v10h-10z" fill="#ff5c0f"/>
<path d="M1551 407h10v10h-10z" fill="#ff540b"/>
<path d="M1561 407h10v10h-10z" fill="#ff4d08"/>
<path d="M1571 407h10v10h-10z" fill="#ff4604"/>
<path d="M1581 407h10v10h-10z" fill="#ff4001"/>
<path d="M1591 407h10v10h-10z" fill="#992300"/>
<path d="M1601 407h10v10h-10z" fill="#992000"/>
<path d="M1611 407h10v10h-10z" fill="#991d00"/>
<path d="M1621 407h10v10h-10z" fill="#991b00"/>
<path d="M1631 407h10v10h-10z" fill="#991800"/>
<path d="M1171 417h10v10h-10z" fill="#00996c"/>
<path d="M1181 417h10v10h-10z" fill="#00996c"/>
<path d="M1191 417h10v10h-10z" fill="#00996b"/>
<path d="M1201 417h10v10h-10z" fill="#00996a"/>
<path d="M1211 417h10v10h-10z" fill="#009969"/>
<path d="M1221 417h10v10h-10z" fill="#009968"/>
<path d="M1231 417h10v10h-10z" fill="#009968"/>
<path d="M1241 417h10v10h-10z" fill="#009967"/>
<path d="M1251 417h10v10h-10z" fill="#009966"/>
<path d="M1261 417h10v10h-10z" fill="#009965"/>
<path d="M1271 417h10v10h-10z" fill="#009964"/>
<path d="M1281 417h10v10h-10z" fill="#009963"/>
<path d="M1291 417h10v10h-10z" fill="#009962"/>
<path d="M1301 417h10v10h-10z" fill="#009960"/>
<path d="M1311 417h10v10h-10z" fill="#00995f"/>
<path d="M1321 417h10v10h-10z" fill="#00995e"/>
<path d="M1331 417h10v10h-10z" fill="#00995d"/>
<path d="M1341 417h10v10h-10z" fill="#00995b"/>
<path d="M1351 417h10v10h-10z" fill="#0bff96"/>
<path d="M1361 417h10v10h-10z" fill="#22ff93"/>
<path d="M1371 417h10v10h-10z" fill="#3aff91"/>
<path d="M1381 417h10v10h-10z" fill="#54ff8e"/>
<path d="M1391 417h10v10h-10z" fill="#6fff8b"/>
<path d="M1401 417h10v10h-10z" fill="#8bff88"/>
<path d="M1411 417h10v10h-10z" fill="#a9ff85"/>
<path d="M1421 417h10v10h-10z" fill="#c9ff81"/>
<path d="M1431 417h10v10h-10z" fill="#eaff7e"/>
<path d="M1441 417h10v10h-10z" fill="#fff173"/>
<path d="M1451 417h10v10h-10z" fill="#ffd362"/>
<path d="M1461 417h10v10h-10z" fill="#ffbb53"/>
<path d="M1471 417h10v10h-10z" fill="#ffa747"/>
<path d="M1481 417h10v10h-10z" fill="#ff953d"/>
<path d="M1491 417h10v10h-10z" fill="#ff8634"/>
<path d="M1501 417h10v10h-10z" fill="#ff792c"/>
<path d="M1511 417h10v10h-10z" fill="#ff6d25"/>
<path d="M1521 417h10v10h-10z" fill="#ff631f"/>
<path d="M1531 417h10v10h-10z" fill="#ff5a1a"/>
<path d="M1541 417h10v10h-10z" fill="#ff5215"/>
<path d="M1551 417h10v10h-10z" fill="#ff4b11"/>
<path d="M1561 417h10v10h-10z" fill="#ff440d"/>
<path d="M1571 417h10v10h-10z" fill="#ff3e09"/>
<path d="M1581 417h10v10h-10z" fill="#ff3806"/>
<path d="M1591 417h10v10h-10z" fill="#ff3303"/>
<path d="M1601 417h10v10h-10z" fill="#991c00"/>
<path d="M1611 417h10v10h-10z" fill="#991900"/>
<path d="M1621 417h10v10h-10z" fill="#991700"/>
<path d="M1631 417h10v10h-10z" fill="#991500"/>
<path d="M1641 417h10v10h-10z" fill="#991200"/>
<path d="M1651 417h10v10h-10z" fill="#991100"/>
<path d="M1171 427h10v10h-10z" fill="#009975"/>
<path d="M1181 427h10v10h-10z" fill="#009975"/>
<path d="M1191 427h10v10h-10z" fill="#009974"/>
<path d="M1201 427h10v10h-10z" fill="#009973"/>
<path d="M1211 427h10v10h-10z" fill="#009973"/>
<path d="M1221 427h10v10h-10z" fill="#009972"/>
<path d="M1231 427h10v10h-10z" fill="#009971"/>
<path d="M1241 427h10v10h-10z" fill="#009970"/>
<path d="M1251 427h10v10h-10z" fill="#009970"/>
<path d="M1261 427h10v10h-10z" fill="#00996f"/>
<path d="M1271 427h10v10h-10z" fill="#00996e"/>
<path d="M1281 427h10v10h-10z" fill="#00996d"/>
<path d="M1291 427h10v10h-10z" fill="#00996c"/>
<path d="M1301 427h10v10h-10z" fill="#00996b"/>
<path d="M1311 427h10v10h-10z" fill="#00996a"/>
<path d="M1321 427h10v10h-10z" fill="#009969"/>
<path d="M1331 427h10v10h-10z" fill="#009968"/>
<path d="M1341 427h10v10h-10z" fill="#009967"/>
<path d="M1351 427h10v10h-10z" fill="#14ffa9"/>
<path d="M1361 427h10v10h-10z" fill="#2dffa7"/>
<path d="M1371 427h10v10h-10z" fill="#47ffa5"/>
<path d="M1381 427h10v10h-10z" fill="#63ffa3"/>
<path d="M1391 427h10v10h-10z" fill="#80ffa0"/>
<path d="M1401 427h10v10h-10z" fill="#9fff9d"/>
<path d="M1411 427h10v10h-10z" fill="#bfff9a"/>
<path d="M1421 427h10v10h-10z" fill="#e2ff97"/>
<path d="M1431 427h10v10h-10z" fill="#fff790"/>
<path d="M1441 427h10v10h-10z" fill="#ffd77a"/>
<path d="M1451 427h10v10h-10z" fill="#ffbd69"/>
<path d="M1461 427h10v10h-10z" fill="#ffa75a"/>
<path d="M1471 427h10v10h-10z" fill="#ff954e"/>
<path d="M1481 427h10v10h-10z" fill="#ff8543"/>
<path d="M1491 427h10v10h-10z" fill="#ff783a"/>
<path d="M1501 427h10v10h-10z" fill="#ff6c32"/>
<path d="M1511 427h10v10h-10z" fill="#ff612b"/>
<path d="M1521 427h10v10h-10z" fill="#ff5825"/>
<path d="M1531 427h10v10h-10z" fill="#ff501f"/>
<path d="M1541 427h10v10h-10z" fill="#ff481a"/>
<path d="M1551 427h10v10h-10z" fill="#ff4116"/>
<path d="M1561 427h10v10h-10z" fill="#ff3b12"/>
<path d="M1571 427h10v10h-10z" fill="#ff360e"/>
<path d="M1581 427h10v10h-10z" fill="#ff300a"/>
<path d="M1591 427h10v10h-10z" fill="#ff2c07"/>
<path d="M1601 427h10v10h-10z" fill="#ff2704"/>
<path d="M1611 427h10v10h-10z" fill="#ff2302"/>
<path d="M1621 427h10v10h-10z" fill="#991300"/>
<path d="M1631 427h10v10h-10z" fill="#991100"/>
<path d="M1641 427h10v10h-10z" fill="#990f00"/>
<path d="M1651 427h10v10h-10z" fill="#990d00"/>
<path d="M1661 427h10v10h-10z" fill="#990b00"/>
<path d="M1171 437h10v10h-10z" fill="#00997f"/>
<path d="M1181 437h10v10h-10z" fill="#00997e"/>
<path d="M1191 437h10v10h-10z" fill="#00997e"/>
<path d="M1201 437h10v10h-10z" fill="#00997d"/>
<path d="M1211 437h10v10h-10z" fill="#00997d"/>
<path d="M1221 437h10v10h-10z" fill="#00997c"/>
<path d="M1231 437h10v10h-10z" fill="#00997c"/>
<path d="M1241 437h10v10h-10z" fill="#00997b"/>
<path d="M1251 437h10v10h-10z" fill="#00997b"/>
<path d="M1261 437h10v10h-10z" fill="#00997a"/>
<path d="M1271 437h10v10h-10z" fill="#009979"/>
<path d="M1281 437h10v10h-10z" fill="#009979"/>
<path d="M1291 437h10v10h-10z" fill="#009978"/>
<path d="M1301 437h10v10h-10z" fill="#009977"/>
<path d="M1311 437h10v10h-10z" fill="#009976"/>
<path d="M1321 437h10v10h-10z" fill="#009976"/>
<path d="M1331 437h10v10h-10z" fill="#009975"/>
<path d="M1341 437h10v10h-10z" fill="#05ffc1"/>
<path d="M1351 437h10v10h-10z" fill="#1fffbf"/>
<path d="M1361 437h10v10h-10z" fill="#3affbe"/>
<path d="M1371 437h10v10h-10z" fill="#56ffbc"/>
<path d="M1381 437h10v10h-10z" fill="#74ffba"/>
<path d="M1391 437h10v10h-10z" fill="#94ffb8"/>
<path d="M1401 437h10v10h-10z" fill="#b5ffb6"/>
<path d="M1411 437h10v10h-10z" fill="#d9ffb4"/>
<path d="M1421 437h10v10h-10z" fill="#ffffb1"/>
<path d="M1431 437h10v10h-10z" fill="#ffdc96"/>
<path d="M1441 437h10v10h-10z" fill="#ffbf81"/>
<path d="M1451 437h10v10h-10z" fill="#ffa86f"/>
<path d="M1461 437h10v10h-10z" fill="#ff9561"/>
<path d="M1471 437h10v10h-10z" fill="#ff8454"/>
<path d="M1481 437h10v10h-10z" fill="#ff764a"/>
<path d="M1491 437h10v10h-10z" fill="#ff6a40"/>
<path d="M1501 437h10v10h-10z" fill="#ff5f38"/>
<path d="M1511 437h10v10h-10z" fill="#ff5631"/>
<path d="M1521 437h10v10h-10z" fill="#ff4d2a"/>
<path d="M1531 437h10v10h-10z" fill="#ff4625"/>
<path d="M1541 437h10v10h-10z" fill="#ff3f1f"/>
<path d="M1551 437h10v10h-10z" fill="#ff381b"/>
<path d="M1561 437h10v10h-10z" fill="#ff3316"/>
<path d="M1571 437h10v10h-10z" fill="#ff2e13"/>
<path d="M1581 437h10v10h-10z" fill="#ff290f"/>
<path d="M1591 437h10v10h-10z" fill="#ff250c"/>
<path d="M1601 437h10v10h-10z" fill="#ff2109"/>
<path d="M1611 437h10v10h-10z" fill="#ff1d06"/>
<path d="M1621 437h10v10h-10z" fill="#ff1903"/>
<path d="M1631 437h10v10h-10z" fill="#ff1601"/>
<path d="M1641 437h10v10h-10z" fill="#990b00"/>
<path d="M1651 437h10v10h-10z" fill="#990a00"/>
<path d="M1661 437h10v10h-10z" fill="#990800"/>
<path d="M1671 437h10v10h-10z" fill="#990700"/>
<path d="M1171 447h10v10h-10z" fill="#009989"/>
<path d="M1181 447h10v10h-10z" fill="#009989"/>
<path d="M1191 447h10v10h-10z" fill="#009989"/>
<path d="M1201 447h10v10h-10z" fill="#009988"/>
<path d="M1211 447h10v10h-10z" fill="#009988"/>
<path d="M1221 447h10v10h-10z" fill="#009988"/>
<path d="M1231 447h10v10h-10z" fill="#009987"/>
<path d="M1241 447h10v10h-10z" fill="#009987"/>
<path d="M1251 447h10v10h-10z" fill="#009987"/>
<path d="M1261 447h10v10h-10z" fill="#009986"/>
<path d="M1271 447h10v10h-10z" fill="#009986"/>
<path d="M1281 447h10v10h-10z" fill="#009985"/>
<path d="M1291 447h10v10h-10z" fill="#009985"/>
<path d="M1301 447h10v10h-10z" fill="#009985"/>
<path d="M1311 447h10v10h-10z" fill="#009984"/>
<path d="M1321 447h10v10h-10z" fill="#009984"/>
<path d="M1331 447h10v10h-10z" fill="#009983"/>
<path d="M1341 447h10v10h-10z" fill="#0fffd9"/>
<path d="M1351 447h10v10h-10z" fill="#2bffd8"/>
<path d="M1361 447h10v10h-10z" fill="#48ffd7"/>
<path d="M1371 447h10v10h-10z" fill="#67ffd6"/>
<path d="M1381 447h10v10h-10z" fill="#87ffd5"/>
<path d="M1391 447h10v10h-10z" fill="#aaffd4"/>
<path d="M1401 447h10v10h-10z" fill="#cfffd2"/>
<path d="M1411 447h10v10h-10z" fill="#f7ffd1"/>
<path d="M1421 447h10v10h-10z" fill="#ffe1b7"/>
<path d="M1431 447h10v10h-10z" fill="#ffc29d"/>
<path d="M1441 447h10v10h-10z" fill="#ffa987"/>
<path d="M1451 447h10v10h-10z" fill="#ff9576"/>
<path d="M1461 447h10v10h-10z" fill="#ff8367"/>
<path d="M1471 447h10v10h-10z" fill="#ff755a"/>
<path d="M1481 447h10v10h-10z" fill="#ff684f"/>
<path d="M1491 447h10v10h-10z" fill="#ff5d46"/>
<path d="M1501 447h10v10h-10z" fill="#ff533e"/>
<path d="M1511 447h10v10h-10z" fill="#ff4a36"/>
<path d="M1521 447h10v10h-10z" fill="#ff4330"/>
<path d="M1531 447h10v10h-10z" fill="#ff3c2a"/>
<path d="M1541 447h10v10h-10z" fill="#ff3624"/>
<path d="M1551 447h10v10h-10z" fill="#ff3020"/>
<path d="M1561 447h10v10h-10z" fill="#ff2b1b"/>
<path d="M1571 447h10v10h-10z" fill="#ff2617"/>
<path d="M1581 447h10v10h-10z" fill="#ff2213"/>
<path d="M1591 447h10v10h-10z" fill="#ff1e10"/>
<path d="M1601 447h10v10h-10z" fill="#ff1a0d"/>
<path d="M1611 447h10v10h-10z" fill="#ff160a"/>
<path d="M1621 447h10v10h-10z" fill="#ff1307"/>
<path d="M1631 447h10v10h-10z" fill="#ff1005"/>
<path d="M1641 447h10v10h-10z" fill="#ff0e02"/>
<path d="M1651 447h10v10h-10z" fill="#990700"/>
<path d="M1661 447h10v10h-10z" fill="#990500"/>
<path d="M1671 447h10v10h-10z" fill="#990400"/>
<path d="M1681 447h10v10h-10z" fill="#990200"/>
<path d="M1171 457h10v10h-10z" fill="#009995"/>
<path d="M1181 457h10v10h-10z" fill="#009995"/>
<path d="M1191 457h10v10h-10z" fill="#009995"/>
<path d="M1201 457h10v10h-10z" fill="#009995"/>
<path d="M1211 457h10v10h-10z" fill="#009994"/>
<path d="M1221 457h10v10h-10z" fill="#009994"/>
<path d="M1231 457h10v10h-10z" fill="#009994"/>
<path d="M1241 457h10v10h-10z" fill="#009994"/>
<path d="M1251 457h10v10h-10z" fill="#009994"/>
<path d="M1261 457h10v10h-10z" fill="#009994"/>
<path d="M1271 457h10v10h-10z" fill="#009994"/>
<path d="M1281 457h10v10h-10z" fill="#009994"/>
<path d="M1291 457h10v10h-10z" fill="#009994"/>
<path d="M1301 457h10v10h-10z" fill="#009994"/>
<path d="M1311 457h10v10h-10z" fill="#009994"/>
<path d="M1321 457h10v10h-10z" fill="#009993"/>
<path d="M1331 457h10v10h-10z" fill="#009993"/>
<path d="M1341 457h10v10h-10z" fill="#1bfff5"/>
<path d="M1351 457h10v10h-10z" fill="#38fff5"/>
<path d="M1361 457h10v10h-10z" fill="#58fff5"/>
<path d="M1371 457h10v10h-10z" fill="#7afff5"/>
<path d="M1381 457h10v10h-10z" fill="#9efff4"/>
<path d="M1391 457h10v10h-10z" fill="#c4fff4"/>
<path d="M1401 457h10v10h-10z" fill="#eefff4"/>
<path d="M1411 457h10v10h-10z" fill="#ffe7dc"/>
<path d="M1421 457h10v10h-10z" fill="#ffc5bc"/>
<path d="M1431 457h10v10h-10z" fill="#ffaaa2"/>
<path d="M1441 457h10v10h-10z" fill="#ff958d"/>
<path d="M1451 457h10v10h-10z" fill="#ff827c"/>
<path d="M1461 457h10v10h-10z" fill="#ff736d"/>
<path d="M1471 457h10v10h-10z" fill="#ff6660"/>
<path d="M1481 457h10v10h-10z" fill="#ff5a55"/>
<path d="M1491 457h10v10h-10z" fill="#ff504b"/>
<path d="M1501 457h10v10h-10z" fill="#ff4843"/>
<path d="M1511 457h10v10h-10z" fill="#ff403b"/>
<path d="M1521 457h10v10h-10z" fill="#ff3935"/>
<path d="M1531 457h10v10h-10z" fill="#ff322f"/>
<path d="M1541 457h10v10h-10z" fill="#ff2d29"/>
<path d="M1551 457h10v10h-10z" fill="#ff2824"/>
<path d="M1561 457h10v10h-10z" fill="#ff2320"/>
<path d="M1571 457h10v10h-10z" fill="#ff1f1b"/>
<path d="M1581 457h10v10h-10z" fill="#ff1b18"/>
<path d="M1591 457h10v10h-10z" fill="#ff1714"/>
<path d="M1601 457h10v10h-10z" fill="#ff1311"/>
<path d="M1611 457h10v10h-10z" fill="#ff100e"/>
<path d="M1621 457h10v10h-10z" fill="#ff0d0b"/>
<path d="M1631 457h10v10h-10z" fill="#ff0b08"/>
<path d="M1641 457h10v10h-10z" fill="#ff0806"/>
<path d="M1651 457h10v10h-10z" fill="#ff0603"/>
<path d="M1661 457h10v10h-10z" fill="#ff0301"/>
<path d="M1671 457h10v10h-10z" fill="#990100"/>
<path d="M1681 457h10v10h-10z" fill="#990000"/>
<path d="M1691 457h10v10h-10z" fill="#990000"/>
<path d="M1701 457h10v10h-10z" fill="#990000"/>
<path d="M1181 467h10v10h-10z" fill="#009199"/>
<path d="M1191 467h10v10h-10z" fill="#009199"/>
<path d="M1201 467h10v10h-10z" fill="#009199"/>
<path d="M1211 467h10v10h-10z" fill="#009099"/>
<path d="M1221 467h10v10h-10z" fill="#009099"/>
<path d="M1231 467h10v10h-10z" fill="#009099"/>
<path d="M1241 467h10v10h-10z" fill="#009099"/>
<path d="M1251 467h10v10h-10z" fill="#008f99"/>
<path d="M1261 467h10v10h-10z" fill="#008f99"/>
<path d="M1271 467h10v10h-10z" fill="#008f99"/>
<path d="M1281 467h10v10h-10z" fill="#008f99"/>
<path d="M1291 467h10v10h-10z" fill="#008e99"/>
<path d="M1301 467h10v10h-10z" fill="#008e99"/>
<path d="M1311 467h10v10h-10z" fill="#008e99"/>
<path d="M1321 467h10v10h-10z" fill="#008d99"/>
<path d="M1331 467h10v10h-10z" fill="#09ebff"/>
<path d="M1341 467h10v10h-10z" fill="#25eaff"/>
<path d="M1351 467h10v10h-10z" fill="#42eaff"/>
<path d="M1361 467h10v10h-10z" fill="#62e9ff"/>
<path d="M1371 467h10v10h-10z" fill="#83e8ff"/>
<path d="M1381 467h10v10h-10z" fill="#a7e7ff"/>
<path d="M1391 467h10v10h-10z" fill="#cde6ff"/>
<path d="M1401 467h10v10h-10z" fill="#f6e5ff"/>
<path d="M1411 467h10v10h-10z" fill="#ffc9e0"/>
<path d="M1421 467h10v10h-10z" fill="#ffacc1"/>
<path d="M1431 467h10v10h-10z" fill="#ff94a7"/>
<path d="M1441 467h10v10h-10z" fill="#ff8193"/>
<path d="M1451 467h10v10h-10z" fill="#ff7181"/>
<path d="M1461 467h10v10h-10z" fill="#ff6372"/>
<path d="M1471 467h10v10h-10z" fill="#ff5866"/>
<path d="M1481 467h10v10h-10z" fill="#ff4d5a"/>
<path d="M1491 467h10v10h-10z" fill="#ff4451"/>
<path d="M1501 467h10v10h-10z" fill="#ff3d48"/>
<path d="M1511 467h10v10h-10z" fill="#ff3540"/>
<path d="M1521 467h10v10h-10z" fill="#ff2f3a"/>
<path d="M1531 467h10v10h-10z" fill="#ff2933"/>
<path d="M1541 467h10v10h-10z" fill="#ff242e"/>
<path d="M1551 467h10v10h-10z" fill="#ff2029"/>
<path d="M1561 467h10v10h-10z" fill="#ff1b24"/>
<path d="M1571 467h10v10h-10z" fill="#ff1720"/>
<path d="M1581 467h10v10h-10z" fill="#ff141c"/>
<path d="M1591 467h10v10h-10z" fill="#ff1018"/>
<path d="M1601 467h10v10h-10z" fill="#ff0d15"/>
<path d="M1611 467h10v10h-10z" fill="#ff0a12"/>
<path d="M1621 467h10v10h-10z" fill="#ff080f"/>
<path d="M1631 467h10v10h-10z" fill="#ff050c"/>
<path d="M1641 467h10v10h-10z" fill="#ff0309"/>
<path d="M1651 467h10v10h-10z" fill="#ff0007"/>
<path d="M1661 467h10v10h-10z" fill="#990003"/>
<path d="M1671 467h10v10h-10z" fill="#990002"/>
<path d="M1681 467h10v10h-10z" fill="#990000"/>
<path d="M1691 467h10v10h-10z" fill="#990000"/>
<path d="M1701 467h10v10h-10z" fill="#990000"/>
<path d="M1711 467h10v10h-10z" fill="#990000"/>
<path d="M1181 477h10v10h-10z" fill="#008599"/>
<path d="M1191 477h10v10h-10z" fill="#008599"/>
<path d="M1201 477h10v10h-10z" fill="#008499"/>
<path d="M1211 477h10v10h-10z" fill="#008499"/>
<path d="M1221 477h10v10h-10z" fill="#008399"/>
<path d="M1231 477h10v10h-10z" fill="#008399"/>
<path d="M1241 477h10v10h-10z" fill="#008299"/>
<path d="M1251 477h10v10h-10z" fill="#008299"/>
<path d="M1261 477h10v10h-10z" fill="#008199"/>
<path d="M1271 477h10v10h-10z" fill="#008199"/>
<path d="M1281 477h10v10h-10z" fill="#008099"/>
<path d="M1291 477h10v10h-10z" fill="#008099"/>
<path d="M1301 477h10v10h-10z" fill="#007f99"/>
<path d="M1311 477h10v10h-10z" fill="#007e99"/>
<path d="M1321 477h10v10h-10z" fill="#007d99"/>
<path d="M1331 477h10v10h-10z" fill="#12d0ff"/>
<path d="M1341 477h10v10h-10z" fill="#2dceff"/>
<path d="M1351 477h10v10h-10z" fill="#49cdff"/>
<path d="M1361 477h10v10h-10z" fill="#67cbff"/>
<path d="M1371 477h10v10h-10z" fill="#87caff"/>
<path d="M1381 477h10v10h-10z" fill="#a9c8ff"/>
<path d="M1391 477h10v10h-10z" fill="#cec6ff"/>
<path d="M1401 477h10v10h-10z" fill="#f4c4ff"/>
<path d="M1411 477h10v10h-10z" fill="#ffade4"/>
<path d="M1421 477h10v10h-10z" fill="#ff94c5"/>
<path d="M1431 477h10v10h-10z" fill="#ff80ac"/>
<path d="M1441 477h10v10h-10z" fill="#ff6f98"/>
<path d="M1451 477h10v10h-10z" fill="#ff6186"/>
<path d="M1461 477h10v10h-10z" fill="#ff5578"/>
<path d="M1471 477h10v10h-10z" fill="#ff4a6b"/>
<path d="M1481 477h10v10h-10z" fill="#ff4160"/>
<path d="M1491 477h10v10h-10z" fill="#ff3956"/>
<path d="M1501 477h10v10h-10z" fill="#ff324d"/>
<path d="M1511 477h10v10h-10z" fill="#ff2c45"/>
<path d="M1521 477h10v10h-10z" fill="#ff263e"/>
<path d="M1531 477h10v10h-10z" fill="#ff2138"/>
<path d="M1541 477h10v10h-10z" fill="#ff1c32"/>
<path d="M1551 477h10v10h-10z" fill="#ff182d"/>
<path d="M1561 477h10v10h-10z" fill="#ff1428"/>
<path d="M1571 477h10v10h-10z" fill="#ff1024"/>
<path d="M1581 477h10v10h-10z" fill="#ff0d20"/>
<path d="M1591 477h10v10h-10z" fill="#ff0a1c"/>
<path d="M1601 477h10v10h-10z" fill="#ff0719"/>
<path d="M1611 477h10v10h-10z" fill="#ff0415"/>
<path d="M1621 477h10v10h-10z" fill="#ff0212"/>
<path d="M1631 477h10v10h-10z" fill="#990009"/>
<path d="M1641 477h10v10h-10z" fill="#990008"/>
<path d="M1651 477h10v10h-10z" fill="#990006"/>
<path d="M1661 477h10v10h-10z" fill="#990005"/>
<path d="M1671 477h10v10h-10z" fill="#990003"/>
<path d="M1681 477h10v10h-10z" fill="#990002"/>
<path d="M1691 477h10v10h-10z" fill="#990001"/>
<path d="M1701 477h10v10h-10z" fill="#990000"/>
<path d="M1711 477h10v10h-10z" fill="#990000"/>
<path d="M1721 477h10v10h-10z" fill="#990000"/>
<path d="M1181 487h10v10h-10z" fill="#007a99"/>
<path d="M1191 487h10v10h-10z" fill="#007a99"/>
<path d="M1201 487h10v10h-10z" fill="#007999"/>
<path d="M1211 487h10v10h-10z" fill="#007899"/>
<path d="M1221 487h10v10h-10z" fill="#007899"/>
<path d="M1231 487h10v10h-10z" fill="#007799"/>
<path d="M1241 487h10v10h-10z" fill="#007699"/>
<path d="M1251 487h10v10h-10z" fill="#007599"/>
<path d="M1261 487h10v10h-10z" fill="#007599"/>
<path d="M1271 487h10v10h-10z" fill="#007499"/>
<path d="M1281 487h10v10h-10z" fill="#007399"/>
<path d="M1291 487h10v10h-10z" fill="#007299"/>
<path d="M1301 487h10v10h-10z" fill="#007199"/>
<path d="M1311 487h10v10h-10z" fill="#007099"/>
<path d="M1321 487h10v10h-10z" fill="#01b9ff"/>
<path d="M1331 487h10v10h-10z" fill="#1ab7ff"/>
<path d="M1341 487h10v10h-10z" fill="#34b5ff"/>
<path d="M1351 487h10v10h-10z" fill="#4fb3ff"/>
<path d="M1361 487h10v10h-10z" fill="#6cb1ff"/>
<path d="M1371 487h10v10h-10z" fill="#8baeff"/>
<path d="M1381 487h10v10h-10z" fill="#abacff"/>
<path d="M1391 487h10v10h-10z" fill="#cea9ff"/>
<path d="M1401 487h10v10h-10z" fill="#f2a6ff"/>
<path d="M1411 487h10v10h-10z" fill="#ff94e7"/>
<path d="M1421 487h10v10h-10z" fill="#ff7ec9"/>
<path d="M1431 487h10v10h-10z" fill="#ff6db1"/>
<path d="M1441 487h10v10h-10z" fill="#ff5e9c"/>
<path d="M1451 487h10v10h-10z" fill="#ff518b"/>
<path d="M1461 487h10v10h-10z" fill="#ff477c"/>
<path d="M1471 487h10v10h-10z" fill="#ff3d70"/>
<path d="M1481 487h10v10h-10z" fill="#ff3564"/>
<path d="M1491 487h10v10h-10z" fill="#ff2e5b"/>
<path d="M1501 487h10v10h-10z" fill="#ff2852"/>
<path d="M1511 487h10v10h-10z" fill="#ff224a"/>
<path d="M1521 487h10v10h-10z" fill="#ff1d43"/>
<path d="M1531 487h10v10h-10z" fill="#ff183c"/>
<path d="M1541 487h10v10h-10z" fill="#ff1437"/>
<path d="M1551 487h10v10h-10z" fill="#ff1031"/>
<path d="M1561 487h10v10h-10z" fill="#ff0d2c"/>
<path d="M1571 487h10v10h-10z" fill="#ff0928"/>
<path d="M1581 487h10v10h-10z" fill="#ff0624"/>
<path d="M1591 487h10v10h-10z" fill="#ff0420"/>
<path d="M1601 487h10v10h-10z" fill="#ff011c"/>
<path d="M1611 487h10v10h-10z" fill="#99000f"/>
<path d="M1621 487h10v10h-10z" fill="#99000d"/>
<path d="M1631 487h10v10h-10z" fill="#99000b"/>
<path d="M1641 487h10v10h-10z" fill="#99000a"/>
<path d="M1651 487h10v10h-10z" fill="#990008"/>
<path d="M1661 487h10v10h-10z" fill="#990007"/>
<path d="M1671 487h10v10h-10z" fill="#990005"/>
<path d="M1681 487h10v10h-10z" fill="#990004"/>
<path d="M1691 487h10v10h-10z" fill="#990003"/>
<path d="M1701 487h10v10h-10z" fill="#990002"/>
<path d="M1711 487h10v10h-10z" fill="#990001"/>
<path d="M1721 487h10v10h-10z" fill="#990000"/>
<path d="M1731 487h10v10h-10z" fill="#990000"/>
<path d="M1741 487h10v10h-10z" fill="#990000"/>
<path d="M1191 497h10v10h-10z" fill="#006f99"/>
<path d="M1201 497h10v10h-10z" fill="#006e99"/>
<path d="M1211 497h10v10h-10z" fill="#006d99"/>
<path d="M1221 497h10v10h-10z" fill="#006d99"/>
<path d="M1231 497h10v10h-10z" fill="#006c99"/>
<path d="M1241 497h10v10h-10z" fill="#006b99"/>
<path d="M1251 497h10v10h-10z" fill="#006a99"/>
<path d="M1261 497h10v10h-10z" fill="#006999"/>
<path d="M1271 497h10v10h-10z" fill="#006899"/>
<path d="M1281 497h10v10h-10z" fill="#006699"/>
<path d="M1291 497h10v10h-10z" fill="#006599"/>
<path d="M1301 497h10v10h-10z" fill="#006499"/>
<path d="M1311 497h10v10h-10z" fill="#006399"/>
<path d="M1321 497h10v10h-10z" fill="#0aa2ff"/>
<path d="M1331 497h10v10h-10z" fill="#21a0ff"/>
<path d="M1341 497h10v10h-10z" fill="#3b9dff"/>
<path d="M1351 497h10v10h-10z" fill="#559bff"/>
<path d="M1361 497h10v10h-10z" fill="#7198ff"/>
<path d="M1371 497h10v10h-10z" fill="#8e95ff"/>
<path d="M1381 497h10v10h-10z" fill="#ad92ff"/>
<path d="M1391 497h10v10h-10z" fill="#ce8fff"/>
<path d="M1401 497h10v10h-10z" fill="#f18bff"/>
<path d="M1411 497h10v10h-10z" fill="#ff7dea"/>
<path d="M1421 497h10v10h-10z" fill="#ff6acd"/>
<path d="M1431 497h10v10h-10z" fill="#ff5bb5"/>
<path d="M1441 497h10v10h-10z" fill="#ff4ea1"/>
<path d="M1451 497h10v10h-10z" fill="#ff4390"/>
<path d="M1461 497h10v10h-10z" fill="#ff3a81"/>
<path d="M1471 497h10v10h-10z" fill="#ff3174"/>
<path d="M1481 497h10v10h-10z" fill="#ff2a69"/>
<path d="M1491 497h10v10h-10z" fill="#ff245f"/>
<path d="M1501 497h10v10h-10z" fill="#ff1e56"/>
<path d="M1511 497h10v10h-10z" fill="#ff194e"/>
<path d="M1521 497h10v10h-10z" fill="#ff1447"/>
<path d="M1531 497h10v10h-10z" fill="#ff1041"/>
<path d="M1541 497h10v10h-10z" fill="#ff0c3b"/>
<path d="M1551 497h10v10h-10z" fill="#ff0935"/>
<path d="M1561 497h10v10h-10z" fill="#ff0630"/>
<path d="M1571 497h10v10h-10z" fill="#ff032c"/>
<path d="M1581 497h10v10h-10z" fill="#ff0027"/>
<path d="M1591 497h10v10h-10z" fill="#990015"/>
<path d="M1601 497h10v10h-10z" fill="#990013"/>
<path d="M1611 497h10v10h-10z" fill="#990011"/>
<path d="M1621 497h10v10h-10z" fill="#99000f"/>
<path d="M1631 497h10v10h-10z" fill="#99000d"/>
<path d="M1641 497h10v10h-10z" fill="#99000c"/>
<path d="M1651 497h10v10h-10z" fill="#99000a"/>
<path d="M1661 497h10v10h-10z" fill="#990009"/>
<path d="M1671 497h10v10h-10z" fill="#990007"/>
<path d="M1681 497h10v10h-10z" fill="#990006"/>
<path d="M1691 497h10v10h-10z" fill="#990005"/>
<path d="M1701 497h10v10h-10z" fill="#990003"/>
<path d="M1711 497h10v10h-10z" fill="#990002"/>
<path d="M1721 497h10v10h-10z" fill="#990001"/>
<path d="M1731 497h10v10h-10z" fill="#990000"/>
<path d="M1741 497h10v10h-10z" fill="#990000"/>
<path d="M1191 507h10v10h-10z" fill="#006599"/>
<path d="M1201 507h10v10h-10z" fill="#006499"/>
<path d="M1211 507h10v10h-10z" fill="#006399"/>
<path d="M1221 507h10v10h-10z" fill="#006299"/>
<path d="M1231 507h10v10h-10z" fill="#006199"/>
<path d="M1241 507h10v10h-10z" fill="#006099"/>
<path d="M1251 507h10v10h-10z" fill="#005f99"/>
<path d="M1261 507h10v10h-10z" fill="#005e99"/>
<path d="M1271 507h10v10h-10z" fill="#005c99"/>
<path d="M1281 507h10v10h-10z" fill="#005b99"/>
<path d="M1291 507h10v10h-10z" fill="#005a99"/>
<path d="M1301 507h10v10h-10z" fill="#005899"/>
<path d="M1311 507h10v10h-10z" fill="#005799"/>
<path d="M1321 507h10v10h-10z" fill="#118eff"/>
<path d="M1331 507h10v10h-10z" fill="#288bff"/>
<path d="M1341 507h10v10h-10z" fill="#4188ff"/>
<path d="M1351 507h10v10h-10z" fill="#5a85ff"/>
<path d="M1361 507h10v10h-10z" fill="#7582ff"/>
<path d="M1371 507h10v10h-10z" fill="#917eff"/>
<path d="M1381 507h10v10h-10z" fill="#af7bff"/>
<path d="M1391 507h10v10h-10z" fill="#ce77ff"/>
<path d="M1401 507h10v10h-10z" fill="#ef73ff"/>
<path d="M1411 507h10v10h-10z" fill="#ff67ed"/>
<path d="M1421 507h10v10h-10z" fill="#ff57d1"/>
<path d="M1431 507h10v10h-10z" fill="#ff4ab9"/>
<path d="M1441 507h10v10h-10z" fill="#ff3fa5"/>
<path d="M1451 507h10v10h-10z" fill="#ff3594"/>
<path d="M1461 507h10v10h-10z" fill="#ff2d86"/>
<path d="M1471 507h10v10h-10z" fill="#ff2679"/>
<path d="M1481 507h10v10h-10z" fill="#ff1f6e"/>
<path d="M1491 507h10v10h-10z" fill="#ff1a64"/>
<path d="M1501 507h10v10h-10z" fill="#ff155b"/>
<path d="M1511 507h10v10h-10z" fill="#ff1053"/>
<path d="M1521 507h10v10h-10z" fill="#ff0c4b"/>
<path d="M1531 507h10v10h-10z" fill="#ff0845"/>
<path d="M1541 507h10v10h-10z" fill="#ff053f"/>
<path d="M1551 507h10v10h-10z" fill="#ff0239"/>
<path d="M1561 507h10v10h-10z" fill="#99001f"/>
<path d="M1571 507h10v10h-10z" fill="#99001d"/>
<path d="M1581 507h10v10h-10z" fill="#99001a"/>
<path d="M1591 507h10v10h-10z" fill="#990018"/>
<path d="M1601 507h10v10h-10z" fill="#990015"/>
<path d="M1611 507h10v10h-10z" fill="#990013"/>
<path d="M1621 507h10v10h-10z" fill="#990011"/>
<path d="M1631 507h10v10h-10z" fill="#99000f"/>
<path d="M1641 507h10v10h-10z" fill="#99000e"/>
<path d="M1651 507h10v10h-10z" fill="#99000c"/>
<path d="M1661 507h10v10h-10z" fill="#99000b"/>
<path d="M1671 507h10v10h-10z" fill="#990009"/>
<path d="M1681 507h10v10h-10z" fill="#990008"/>
<path d="M1691 507h10v10h-10z" fill="#990006"/>
<path d="M1701 507h10v10h-10z" fill="#990005"/>
<path d="M1711 507h10v10h-10z" fill="#990004"/>
<path d="M1721 507h10v10h-10z" fill="#990003"/>
<path d="M1731 507h10v10h-10z" fill="#990002"/>
<path d="M1741 507h10v10h-10z" fill="#990001"/>
<path d="M1191 517h10v10h-10z" fill="#005c99"/>
<path d="M1201 517h10v10h-10z" fill="#005b99"/>
<path d="M1211 517h10v10h-10z" fill="#005a99"/>
<path d="M1221 517h10v10h-10z" fill="#005899"/>
<path d="M1231 517h10v10h-10z" fill="#005799"/>
<path d="M1241 517h10v10h-10z" fill="#005699"/>
<path d="M1251 517h10v10h-10z" fill="#005599"/>
<path d="M1261 517h10v10h-10z" fill="#005399"/>
<path d="M1271 517h10v10h-10z" fill="#005299"/>
<path d="M1281 517h10v10h-10z" fill="#005099"/>
<path d="M1291 517h10v10h-10z" fill="#004f99"/>
<path d="M1301 517h10v10h-10z" fill="#004d99"/>
<path d="M1311 517h10v10h-10z" fill="#037eff"/>
<path d="M1321 517h10v10h-10z" fill="#197bff"/>
<path d="M1331 517h10v10h-10z" fill="#2f78ff"/>
<path d="M1341 517h10v10h-10z" fill="#4674ff"/>
<path d="M1351 517h10v10h-10z" fill="#5f71ff"/>
<path d="M1361 517h10v10h-10z" fill="#796dff"/>
<path d="M1371 517h10v10h-10z" fill="#946aff"/>
<path d="M1381 517h10v10h-10z" fill="#b066ff"/>
<path d="M1391 517h10v10h-10z" fill="#ce62ff"/>
<path d="M1401 517h10v10h-10z" fill="#ee5dff"/>
<path d="M1411 517h10v10h-10z" fill="#ff53ef"/>
<path d="M1421 517h10v10h-10z" fill="#ff46d4"/>
<path d="M1431 517h10v10h-10z" fill="#ff3abd"/>
<path d="M1441 517h10v10h-10z" fill="#ff30a9"/>
<path d="M1451 517h10v10h-10z" fill="#ff2898"/>
<path d="M1461 517h10v10h-10z" fill="#ff218a"/>
<path d="M1471 517h10v10h-10z" fill="#ff1b7d"/>
<path d="M1481 517h10v10h-10z" fill="#ff1572"/>
<path d="M1491 517h10v10h-10z" fill="#ff1068"/>
<path d="M1501 517h10v10h-10z" fill="#ff0c5f"/>
<path d="M1511 517h10v10h-10z" fill="#ff0857"/>
<path d="M1521 517h10v10h-10z" fill="#ff044f"/>
<path d="M1531 517h10v10h-10z" fill="#ff0149"/>
<path d="M1541 517h10v10h-10z" fill="#990028"/>
<path d="M1551 517h10v10h-10z" fill="#990025"/>
<path d="M1561 517h10v10h-10z" fill="#990022"/>
<path d="M1571 517h10v10h-10z" fill="#99001f"/>
<path d="M1581 517h10v10h-10z" fill="#99001c"/>
<path d="M1591 517h10v10h-10z" fill="#99001a"/>
<path d="M1601 517h10v10h-10z" fill="#990017"/>
<path d="M1611 517h10v10h-10z" fill="#990015"/>
<path d="M1621 517h10v10h-10z" fill="#990013"/>
<path d="M1631 517h10v10h-10z" fill="#990011"/>
<path d="M1641 517h10v10h-10z" fill="#990010"/>
<path d="M1651 517h10v10h-10z" fill="#99000e"/>
<path d="M1661 517h10v10h-10z" fill="#99000c"/>
<path d="M1671 517h10v10h-10z" fill="#99000b"/>
<path d="M1681 517h10v10h-10z" fill="#990009"/>
<path d="M1691 517h10v10h-10z" fill="#990008"/>
<path d="M1701 517h10v10h-10z" fill="#990007"/>
<path d="M1711 517h10v10h-10z" fill="#990006"/>
<path d="M1191 527h10v10h-10z" fill="#005399"/>
<path d="M1201 527h10v10h-10z" fill="#005299"/>
<path d="M1211 527h10v10h-10z" fill="#005199"/>
<path d="M1221 527h10v10h-10z" fill="#004f99"/>
<path d="M1231 527h10v10h-10z" fill="#004e99"/>
<path d="M1241 527h10v10h-10z" fill="#004c99"/>
<path d="M1251 527h10v10h-10z" fill="#004b99"/>
<path d="M1261 527h10v10h-10z" fill="#004999"/>
<path d="M1271 527h10v10h-10z" fill="#004899"/>
<path d="M1281 527h10v10h-10z" fill="#004699"/>
<path d="M1291 527h10v10h-10z" fill="#004599"/>
<path d="M1301 527h10v10h-10z" fill="#004399"/>
<path d="M1311 527h10v10h-10z" fill="#0a6cff"/>
<path d="M1321 527h10v10h-10z" fill="#1f69ff"/>
<path d="M1331 527h10v10h-10z" fill="#3566ff"/>
<path d="M1341 527h10v10h-10z" fill="#4c62ff"/>
<path d="M1351 527h10v10h-10z" fill="#635eff"/>
<path d="M1361 527h10v10h-10z" fill="#7c5aff"/>
<path d="M1371 527h10v10h-10z" fill="#9656ff"/>
<path d="M1381 527h10v10h-10z" fill="#b252ff"/>
<path d="M1391 527h10v10h-10z" fill="#cf4eff"/>
<path d="M1401 527h10v10h-10z" fill="#ed49ff"/>
<path d="M1411 527h10v10h-10z" fill="#ff41f2"/>
<path d="M1421 527h10v10h-10z" fill="#ff35d7"/>
<path d="M1431 527h10v10h-10z" fill="#ff2bc0"/>
<path d="M1441 527h10v10h-10z" fill="#ff23ad"/>
<path d="M1451 527h10v10h-10z" fill="#ff1c9c"/>
<path d="M1461 527h10v10h-10z" fill="#ff168e"/>
<path d="M1471 527h10v10h-10z" fill="#ff1081"/>
<path d="M1481 527h10v10h-10z" fill="#ff0b76"/>
<path d="M1491 527h10v10h-10z" fill="#ff076c"/>
<path d="M1501 527h10v10h-10z" fill="#ff0363"/>
<path d="M1511 527h10v10h-10z" fill="#990036"/>
<path d="M1521 527h10v10h-10z" fill="#990032"/>
<path d="M1531 527h10v10h-10z" fill="#99002e"/>
<path d="M1541 527h10v10h-10z" fill="#99002a"/>
<path d="M1551 527h10v10h-10z" fill="#990027"/>
<path d="M1561 527h10v10h-10z" fill="#990024"/>
<path d="M1571 527h10v10h-10z" fill="#990021"/>
<path d="M1581 527h10v10h-10z" fill="#99001e"/>
<path d="M1591 527h10v10h-10z" fill="#99001c"/>
<path d="M1601 527h10v10h-10z" fill="#990019"/>
<path d="M1611 527h10v10h-10z" fill="#990017"/>
<path d="M1621 527h10v10h-10z" fill="#990015"/>
<path d="M1631 527h10v10h-10z" fill="#990013"/>
<path d="M1641 527h10v10h-10z" fill="#990011"/>
<path d="M1651 527h10v10h-10z" fill="#990010"/>
<path d="M1661 527h10v10h-10z" fill="#99000e"/>
<path d="M1671 527h10v10h-10z" fill="#99000d"/>
<path d="M1681 527h10v10h-10z" fill="#99000b"/>
<path d="M1201 537h10v10h-10z" fill="#004999"/>
<path d="M1211 537h10v10h-10z" fill="#004899"/>
<path d="M1221 537h10v10h-10z" fill="#004799"/>
<path d="M1231 537h10v10h-10z" fill="#004599"/>
<path d="M1241 537h10v10h-10z" fill="#004499"/>
<path d="M1251 537h10v10h-10z" fill="#004299"/>
<path d="M1261 537h10v10h-10z" fill="#004099"/>
<path d="M1271 537h10v10h-10z" fill="#003f99"/>
<path d="M1281 537h10v10h-10z" fill="#003d99"/>
<path d="M1291 537h10v10h-10z" fill="#003b99"/>
<path d="M1301 537h10v10h-10z" fill="#003999"/>
<path d="M1311 537h10v10h-10z" fill="#115cff"/>
<path d="M1321 537h10v10h-10z" fill="#2558ff"/>
<path d="M1331 537h10v10h-10z" fill="#3a55ff"/>
<path d="M1341 537h10v10h-10z" fill="#5051ff"/>
<path d="M1351 537h10v10h-10z" fill="#674dff"/>
<path d="M1361 537h10v10h-10z" fill="#8049ff"/>
<path d="M1371 537h10v10h-10z" fill="#9945ff"/>
<path d="M1381 537h10v10h-10z" fill="#b340ff"/>
<path d="M1391 537h10v10h-10z" fill="#cf3cff"/>
<path d="M1401 537h10v10h-10z" fill="#ec37ff"/>
<path d="M1411 537h10v10h-10z" fill="#ff2ff4"/>
<path d="M1421 537h10v10h-10z" fill="#ff26da"/>
<path d="M1431 537h10v10h-10z" fill="#ff1dc4"/>
<path d="M1441 537h10v10h-10z" fill="#ff16b1"/>
<path d="M1451 537h10v10h-10z" fill="#ff10a0"/>
<path d="M1461 537h10v10h-10z" fill="#ff0b92"/>
<path d="M1471 537h10v10h-10z" fill="#ff0685"/>
<path d="M1481 537h10v10h-10z" fill="#ff027a"/>
<path d="M1491 537h10v10h-10z" fill="#990043"/>
<path d="M1501 537h10v10h-10z" fill="#99003e"/>
<path d="M1511 537h10v10h-10z" fill="#990039"/>
<path d="M1521 537h10v10h-10z" fill="#990034"/>
<path d="M1531 537h10v10h-10z" fill="#990030"/>
<path d="M1541 537h10v10h-10z" fill="#99002c"/>
<path d="M1551 537h10v10h-10z" fill="#990029"/>
<path d="M1561 537h10v10h-10z" fill="#990026"/>
<path d="M1571 537h10v10h-10z" fill="#990023"/>
<path d="M1581 537h10v10h-10z" fill="#990020"/>
<path d="M1591 537h10v10h-10z" fill="#99001e"/>
<path d="M1601 537h10v10h-10z" fill="#99001b"/>
<path d="M1611 537h10v10h-10z" fill="#990019"/>
<path d="M1621 537h10v10h-10z" fill="#990017"/>
<path d="M1631 537h10v10h-10z" fill="#990015"/>
<path d="M1641 537h10v10h-10z" fill="#990013"/>
<path d="M1651 537h10v10h-10z" fill="#990012"/>
<path d="M1661 537h10v10h-10z" fill="#990010"/>
<path d="M1201 547h10v10h-10z" fill="#004199"/>
<path d="M1211 547h10v10h-10z" fill="#004099"/>
<path d="M1221 547h10v10h-10z" fill="#003e99"/>
<path d="M1231 547h10v10h-10z" fill="#003d99"/>
<path d="M1241 547h10v10h-10z" fill="#003b99"/>
<path d="M1251 547h10v10h-10z" fill="#003a99"/>
<path d="M1261 547h10v10h-10z" fill="#003899"/>
<path d="M1271 547h10v10h-10z" fill="#003699"/>
<path d="M1281 547h10v10h-10z" fill="#003499"/>
<path d="M1291 547h10v10h-10z" fill="#003299"/>
<path d="M1301 547h10v10h-10z" fill="#0550ff"/>
<path d="M1311 547h10v10h-10z" fill="#174dff"/>
<path d="M1321 547h10v10h-10z" fill="#2b49ff"/>
<path d="M1331 547h10v10h-10z" fill="#4045ff"/>
<path d="M1341 547h10v10h-10z" fill="#5541ff"/>
<path d="M1351 547h10v10h-10z" fill="#6b3dff"/>
<path d="M1361 547h10v10h-10z" fill="#8339ff"/>
<path d="M1371 547h10v10h-10z" fill="#9b34ff"/>
<path d="M1381 547h10v10h-10z" fill="#b430ff"/>
<path d="M1391 547h10v10h-10z" fill="#cf2bff"/>
<path d="M1401 547h10v10h-10z" fill="#eb26ff"/>
<path d="M1411 547h10v10h-10z" fill="#ff1ff6"/>
<path d="M1421 547h10v10h-10z" fill="#ff17dd"/>
<path d="M1431 547h10v10h-10z" fill="#ff10c7"/>
<path d="M1441 547h10v10h-10z" fill="#ff0ab4"/>
<path d="M1451 547h10v10h-10z" fill="#ff05a4"/>
<path d="M1461 547h10v10h-10z" fill="#ff0096"/>
<path d="M1471 547h10v10h-10z" fill="#990052"/>
<path d="M1481 547h10v10h-10z" fill="#99004b"/>
<path d="M1491 547h10v10h-10z" fill="#990045"/>
<path d="M1501 547h10v10h-10z" fill="#990040"/>
<path d="M1511 547h10v10h-10z" fill="#99003b"/>
<path d="M1521 547h10v10h-10z" fill="#990036"/>
<path d="M1531 547h10v10h-10z" fill="#990032"/>
<path d="M1541 547h10v10h-10z" fill="#99002f"/>
<path d="M1551 547h10v10h-10z" fill="#99002b"/>
<path d="M1561 547h10v10h-10z" fill="#990028"/>
<path d="M1571 547h10v10h-10z" fill="#990025"/>
<path d="M1581 547h10v10h-10z" fill="#990022"/>
<path d="M1591 547h10v10h-10z" fill="#990020"/>
<path d="M1601 547h10v10h-10z" fill="#99001d"/>
<path d="M1611 547h10v10h-10z" fill="#99001b"/>
<path d="M1621 547h10v10h-10z" fill="#990019"/>
<path d="M1631 547h10v10h-10z" fill="#990017"/>
<path d="M1211 557h10v10h-10z" fill="#003899"/>
<path d="M1221 557h10v10h-10z" fill="#003799"/>
<path d="M1231 557h10v10h-10z" fill="#003599"/>
<path d="M1241 557h10v10h-10z" fill="#003399"/>
<path d="M1251 557h10v10h-10z" fill="#003299"/>
<path d="M1261 557h10v10h-10z" fill="#003099"/>
<path d="M1271 557h10v10h-10z" fill="#002e99"/>
<path d="M1281 557h10v10h-10z" fill="#002c99"/>
<path d="M1291 557h10v10h-10z" fill="#002a99"/>
<path d="M1301 557h10v10h-10z" fill="#0b42ff"/>
<path d="M1311 557h10v10h-10z" fill="#1d3eff"/>
<path d="M1321 557h10v10h-10z" fill="#313bff"/>
<path d="M1331 557h10v10h-10z" fill="#4437ff"/>
<path d="M1341 557h10v10h-10z" fill="#5933ff"/>
<path d="M1351 557h10v10h-10z" fill="#6f2eff"/>
<path d="M1361 557h10v10h-10z" fill="#852aff"/>
<path d="M1371 557h10v10h-10z" fill="#9d25ff"/>
<path d="M1381 557h10v10h-10z" fill="#b520ff"/>
<path d="M1391 557h10v10h-10z" fill="#cf1bff"/>
<path d="M1401 557h10v10h-10z" fill="#ea16ff"/>
<path d="M1411 557h10v10h-10z" fill="#ff10f8"/>
<path d="M1421 557h10v10h-10z" fill="#ff09df"/>
<path d="M1431 557h10v10h-10z" fill="#ff03ca"/>
<path d="M1441 557h10v10h-10z" fill="#99006e"/>
<path d="M1451 557h10v10h-10z" fill="#990064"/>
<path d="M1461 557h10v10h-10z" fill="#99005c"/>
<path d="M1471 557h10v10h-10z" fill="#990054"/>
<path d="M1481 557h10v10h-10z" fill="#99004e"/>
<path d="M1491 557h10v10h-10z" fill="#990048"/>
<path d="M1501 557h10v10h-10z" fill="#990042"/>
<path d="M1511 557h10v10h-10z" fill="#99003d"/>
<path d="M1521 557h10v10h-10z" fill="#990039"/>
<path d="M1531 557h10v10h-10z" fill="#990034"/>
<path d="M1541 557h10v10h-10z" fill="#990031"/>
<path d="M1551 557h10v10h-10z" fill="#99002d"/>
<path d="M1561 557h10v10h-10z" fill="#99002a"/>
<path d="M1571 557h10v10h-10z" fill="#990027"/>
<path d="M1581 557h10v10h-10z" fill="#990024"/>
<path d="M1591 557h10v10h-10z" fill="#990022"/>
<path d="M1601 557h10v10h-10z" fill="#99001f"/>
<path d="M1211 567h10v10h-10z" fill="#003199"/>
<path d="M1221 567h10v10h-10z" fill="#002f99"/>
<path d="M1231 567h10v10h-10z" fill="#002e99"/>
<path d="M1241 567h10v10h-10z" fill="#002c99"/>
<path d="M1251 567h10v10h-10z" fill="#002a99"/>
<path d="M1261 567h10v10h-10z" fill="#002899"/>
<path d="M1271 567h10v10h-10z" fill="#002699"/>
<path d="M1281 567h10v10h-10z" fill="#002499"/>
<path d="M1291 567h10v10h-10z" fill="#002299"/>
<path d="M1301 567h10v10h-10z" fill="#1135ff"/>
<path d="M1311 567h10v10h-10z" fill="#2331ff"/>
<path d="M1321 567h10v10h-10z" fill="#362dff"/>
<path d="M1331 567h10v10h-10z" fill="#4929ff"/>
<path d="M1341 567h10v10h-10z" fill="#5d25ff"/>
<path d="M1351 567h10v10h-10z" fill="#7220ff"/>
<path d="M1361 567h10v10h-10z" fill="#881cff"/>
<path d="M1371 567h10v10h-10z" fill="#9f17ff"/>
<path d="M1381 567h10v10h-10z" fill="#b612ff"/>
<path d="M1391 567h10v10h-10z" fill="#cf0dff"/>
<path d="M1401 567h10v10h-10z" fill="#e907ff"/>
<path d="M1411 567h10v10h-10z" fill="#ff02fa"/>
<path d="M1421 567h10v10h-10z" fill="#990087"/>
<path d="M1431 567h10v10h-10z" fill="#99007b"/>
<path d="M1441 567h10v10h-10z" fill="#990070"/>
<path d="M1451 567h10v10h-10z" fill="#990066"/>
<path d="M1461 567h10v10h-10z" fill="#99005e"/>
<path d="M1471 567h10v10h-10z" fill="#990056"/>
<path d="M1481 567h10v10h-10z" fill="#990050"/>
<path d="M1491 567h10v10h-10z" fill="#99004a"/>
<path d="M1501 567h10v10h-10z" fill="#990044"/>
<path d="M1511 567h10v10h-10z" fill="#99003f"/>
<path d="M1521 567h10v10h-10z" fill="#99003b"/>
<path d="M1531 567h10v10h-10z" fill="#990036"/>
<path d="M1541 567h10v10h-10z" fill="#990033"/>
<path d="M1551 567h10v10h-10z" fill="#99002f"/>
<path d="M1561 567h10v10h-10z" fill="#99002c"/>
<path d="M1571 567h10v10h-10z" fill="#990029"/>
<path d="M1221 577h10v10h-10z" fill="#002899"/>
<path d="M1231 577h10v10h-10z" fill="#002799"/>
<path d="M1241 577h10v10h-10z" fill="#002599"/>
<path d="M1251 577h10v10h-10z" fill="#002399"/>
<path d="M1261 577h10v10h-10z" fill="#002199"/>
<path d="M1271 577h10v10h-10z" fill="#001f99"/>
<path d="M1281 577h10v10h-10z" fill="#001d99"/>
<path d="M1291 577h10v10h-10z" fill="#062cff"/>
<path d="M1301 577h10v10h-10z" fill="#1728ff"/>
<path d="M1311 577h10v10h-10z" fill="#2825ff"/>
<path d="M1321 577h10v10h-10z" fill="#3a21ff"/>
<path d="M1331 577h10v10h-10z" fill="#4d1cff"/>
<path d="M1341 577h10v10h-10z" fill="#6118ff"/>
<path d="M1351 577h10v10h-10z" fill="#7513ff"/>
<path d="M1361 577h10v10h-10z" fill="#8a0fff"/>
<path d="M1371 577h10v10h-10z" fill="#a00aff"/>
<path d="M1381 577h10v10h-10z" fill="#b705ff"/>
<path d="M1391 577h10v10h-10z" fill="#7c0099"/>
<path d="M1401 577h10v10h-10z" fill="#8b0099"/>
<path d="M1411 577h10v10h-10z" fill="#990097"/>
<path d="M1421 577h10v10h-10z" fill="#990089"/>
<path d="M1431 577h10v10h-10z" fill="#99007c"/>
<path d="M1441 577h10v10h-10z" fill="#990072"/>
<path d="M1451 577h10v10h-10z" fill="#990068"/>
<path d="M1461 577h10v10h-10z" fill="#990060"/>
<path d="M1471 577h10v10h-10z" fill="#990058"/>
<path d="M1481 577h10v10h-10z" fill="#990052"/>
<path d="M1491 577h10v10h-10z" fill="#99004c"/>
<path d="M1501 577h10v10h-10z" fill="#990046"/>
<path d="M1511 577h10v10h-10z" fill="#990041"/>
<path d="M1521 577h10v10h-10z" fill="#99003d"/>
<path d="M1531 577h10v10h-10z" fill="#990038"/>
<path d="M1541 577h10v10h-10z" fill="#990035"/>
<path d="M1221 587h10v10h-10z" fill="#002299"/>
<path d="M1231 587h10v10h-10z" fill="#002099"/>
<path d="M1241 587h10v10h-10z" fill="#001e99"/>
<path d="M1251 587h10v10h-10z" fill="#001c99"/>
<path d="M1261 587h10v10h-10z" fill="#001a99"/>
<path d="M1271 587h10v10h-10z" fill="#001899"/>
<path d="M1281 587h10v10h-10z" fill="#001699"/>
<path d="M1291 587h10v10h-10z" fill="#0b21ff"/>
<path d="M1301 587h10v10h-10z" fill="#1c1dff"/>
<path d="M1311 587h10v10h-10z" fill="#2d19ff"/>
<path d="M1321 587h10v10h-10z" fill="#3f15ff"/>
<path d="M1331 587h10v10h-10z" fill="#5110ff"/>
<path d="M1341 587h10v10h-10z" fill="#640cff"/>
<path d="M1351 587h10v10h-10z" fill="#7807ff"/>
<path d="M1361 587h10v10h-10z" fill="#8d02ff"/>
<path d="M1371 587h10v10h-10z" fill="#610099"/>
<path d="M1381 587h10v10h-10z" fill="#6f0099"/>
<path d="M1391 587h10v10h-10z" fill="#7c0099"/>
<path d="M1401 587h10v10h-10z" fill="#8b0099"/>
<path d="M1411 587h10v10h-10z" fill="#990098"/>
<path d="M1421 587h10v10h-10z" fill="#99008a"/>
<path d="M1431 587h10v10h-10z" fill="#99007e"/>
<path d="M1441 587h10v10h-10z" fill="#990073"/>
<path d="M1451 587h10v10h-10z" fill="#99006a"/>
<path d="M1461 587h10v10h-10z" fill="#990062"/>
<path d="M1471 587h10v10h-10z" fill="#99005a"/>
<path d="M1481 587h10v10h-10z" fill="#990054"/>
<path d="M1491 587h10v10h-10z" fill="#99004e"/>
<path d="M1501 587h10v10h-10z" fill="#990048"/>
<path d="M1511 587h10v10h-10z" fill="#990043"/>
<path d="M1221 597h10v10h-10z" fill="#001c99"/>
<path d="M1231 597h10v10h-10z" fill="#001a99"/>
<path d="M1241 597h10v10h-10z" fill="#001899"/>
<path d="M1251 597h10v10h-10z" fill="#001699"/>
<path d="M1261 597h10v10h-10z" fill="#001499"/>
<path d="M1271 597h10v10h-10z" fill="#001199"/>
<path d="M1281 597h10v10h-10z" fill="#0119ff"/>
<path d="M1291 597h10v10h-10z" fill="#1116ff"/>
<path d="M1301 597h10v10h-10z" fill="#2112ff"/>
<path d="M1311 597h10v10h-10z" fill="#320eff"/>
<path d="M1321 597h10v10h-10z" fill="#4309ff"/>
<path d="M1331 597h10v10h-10z" fill="#5505ff"/>
<path d="M1341 597h10v10h-10z" fill="#6801ff"/>
<path d="M1351 597h10v10h-10z" fill="#4a0099"/>
<path d="M1361 597h10v10h-10z" fill="#560099"/>
<path d="M1371 597h10v10h-10z" fill="#620099"/>
<path d="M1381 597h10v10h-10z" fill="#6f0099"/>
<path d="M1391 597h10v10h-10z" fill="#7c0099"/>
<path d="M1401 597h10v10h-10z" fill="#8a0099"/>
<path d="M1411 597h10v10h-10z" fill="#990099"/>
<path d="M1421 597h10v10h-10z" fill="#99008b"/>
<path d="M1431 597h10v10h-10z" fill="#99007f"/>
<path d="M1441 597h10v10h-10z" fill="#990075"/>
<path d="M1451 597h10v10h-10z" fill="#99006c"/>
<path d="M1461 597h10v10h-10z" fill="#990063"/>
<path d="M1471 597h10v10h-10z" fill="#99005c"/>
<path d="M1481 597h10v10h-10z" fill="#990055"/>
<path d="M1491 597h10v10h-10z" fill="#99004f"/>
<path d="M1231 607h10v10h-10z" fill="#001499"/>
<path d="M1241 607h10v10h-10z" fill="#001299"/>
<path d="M1251 607h10v10h-10z" fill="#001099"/>
<path d="M1261 607h10v10h-10z" fill="#000d99"/>
<path d="M1271 607h10v10h-10z" fill="#000b99"/>
<path d="M1281 607h10v10h-10z" fill="#070fff"/>
<path d="M1291 607h10v10h-10z" fill="#160bff"/>
<path d="M1301 607h10v10h-10z" fill="#2607ff"/>
<path d="M1311 607h10v10h-10z" fill="#3603ff"/>
<path d="M1321 607h10v10h-10z" fill="#2b0099"/>
<path d="M1331 607h10v10h-10z" fill="#350099"/>
<path d="M1341 607h10v10h-10z" fill="#400099"/>
<path d="M1351 607h10v10h-10z" fill="#4b0099"/>
<path d="M1361 607h10v10h-10z" fill="#570099"/>
<path d="M1371 607h10v10h-10z" fill="#630099"/>
<path d="M1381 607h10v10h-10z" fill="#6f0099"/>
<path d="M1391 607h10v10h-10z" fill="#7c0099"/>
<path d="M1401 607h10v10h-10z" fill="#8a0099"/>
<path d="M1411 607h10v10h-10z" fill="#980099"/>
<path d="M1421 607h10v10h-10z" fill="#99008d"/>
<path d="M1431 607h10v10h-10z" fill="#990081"/>
<path d="M1441 607h10v10h-10z" fill="#990076"/>
<path d="M1451 607h10v10h-10z" fill="#99006d"/>
<path d="M1461 607h10v10h-10z" fill="#990065"/>
<path d="M1241 617h10v10h-10z" fill="#000c99"/>
<path d="M1251 617h10v10h-10z" fill="#000a99"/>
<path d="M1261 617h10v10h-10z" fill="#000899"/>
<path d="M1271 617h10v10h-10z" fill="#000599"/>
<path d="M1281 617h10v10h-10z" fill="#0c05ff"/>
<path d="M1291 617h10v10h-10z" fill="#1b01ff"/>
<path d="M1301 617h10v10h-10z" fill="#190099"/>
<path d="M1311 617h10v10h-10z" fill="#230099"/>
<path d="M1321 617h10v10h-10z" fill="#2d0099"/>
<path d="M1331 617h10v10h-10z" fill="#370099"/>
<path d="M1341 617h10v10h-10z" fill="#420099"/>
<path d="M1351 617h10v10h-10z" fill="#4d0099"/>
<path d="M1361 617h10v10h-10z" fill="#580099"/>
<path d="M1371 617h10v10h-10z" fill="#640099"/>
<path d="M1381 617h10v10h-10z" fill="#700099"/>
<path d="M1391 617h10v10h-10z" fill="#7d0099"/>
<path d="M1401 617h10v10h-10z" fill="#8a0099"/>
<path d="M1411 617h10v10h-10z" fill="#970099"/>
<path d="M1421 617h10v10h-10z" fill="#99008e"/>
<path d="M1431 617h10v10h-10z" fill="#990082"/>
<path d="M1241 627h10v10h-10z" fill="#000699"/>
<path d="M1251 627h10v10h-10z" fill="#000499"/>
<path d="M1261 627h10v10h-10z" fill="#000299"/>
<path d="M1271 627h10v10h-10z" fill="#010099"/>
<path d="M1281 627h10v10h-10z" fill="#0a0099"/>
<path d="M1291 627h10v10h-10z" fill="#130099"/>
<path d="M1301 627h10v10h-10z" fill="#1c0099"/>
<path d="M1311 627h10v10h-10z" fill="#250099"/>
<path d="M1321 627h10v10h-10z" fill="#2f0099"/>
<path d="M1331 627h10v10h-10z" fill="#390099"/>
<path d="M1341 627h10v10h-10z" fill="#430099"/>
<path d="M1351 627h10v10h-10z" fill="#4e0099"/>
<path d="M1361 627h10v10h-10z" fill="#590099"/>
<path d="M1371 627h10v10h-10z" fill="#640099"/>
<path d="M1381 627h10v10h-10z" fill="#700099"/>
<path d="M1391 627h10v10h-10z" fill="#7d0099"/>
<path d="M1401 627h10v10h-10z" fill="#890099"/>
<path d="M1251 637h10v10h-10z" fill="#000099"/>
<path d="M1261 637h10v10h-10z" fill="#000099"/>
<path d="M1271 637h10v10h-10z" fill="#040099"/>
<path d="M1281 637h10v10h-10z" fill="#0d0099"/>
<path d="M1291 637h10v10h-10z" fill="#160099"/>
<path d="M1301 637h10v10h-10z" fill="#1e0099"/>
<path d="M1311 637h10v10h-10z" fill="#280099"/>
<path d="M1321 637h10v10h-10z" fill="#310099"/>
<path d="M1331 637h10v10h-10z" fill="#3b0099"/>
<path d="M1341 637h10v10h-10z" fill="#450099"/>
<path d="M1351 637h10v10h-10z" fill="#4f0099"/>
<path d="M1361 637h10v10h-10z" fill="#5a0099"/>
<path d="M1371 637h10v10h-10z" fill="#650099"/>
<path d="M1261 647h10v10h-10z" fill="#000099"/>
<path d="M1271 647h10v10h-10z" fill="#070099"/>
<path d="M1281 647h10v10h-10z" fill="#100099"/>
<path d="M1291 647h10v10h-10z" fill="#180099"/>
<path d="M1301 647h10v10h-10z" fill="#210099"/>
<path d="M1311 647h10v10h-10z" fill="#2a0099"/>
<path d="M1321 647h10v10h-10z" fill="#330099"/>
<path d="M1331 647h10v10h-10z" fill="#3d0099"/>
<path d="M1341 647h10v10h-10z" fill="#460099"/>
<path d="M1271 657h10v10h-10z" fill="#0a0099"/>
<path d="M1281 657h10v10h-10z" fill="#120099"/>
<path d="M1291 657h10v10h-10z" fill="#1a0099"/>
<path d="M1301 657h10v10h-10z" fill="#230099"/>
<path d="M1311 657h10v10h-10z" fill="#2c0099"/>
<path d="M1321 657h10v10h-10z" fill="#350099"/>
</g>
<g shape-rendering="crispEdges">
<path d="M1602 155h12v12h-12z" fill="#6c9900"/>
<path d="M1614 155h12v12h-12z" fill="#6f9900"/>
<path d="M1626 155h12v12h-12z" fill="#729900"/>
<path d="M1638 155h12v12h-12z" fill="#759900"/>
<path d="M1650 155h12v12h-12z" fill="#789900"/>
<path d="M1662 155h12v12h-12z" fill="#7b9900"/>
<path d="M1674 155h12v12h-12z" fill="#7e9900"/>
<path d="M1686 155h12v12h-12z" fill="#819900"/>
<path d="M1698 155h12v12h-12z" fill="#849900"/>
<path d="M1710 155h12v12h-12z" fill="#879900"/>
<path d="M1722 155h12v12h-12z" fill="#8a9900"/>
<path d="M1734 155h12v12h-12z" fill="#8d9900"/>
<path d="M1746 155h12v12h-12z" fill="#919900"/>
<path d="M1758 155h12v12h-12z" fill="#949900"/>
<path d="M1770 155h12v12h-12z" fill="#979900"/>
<path d="M1782 155h12v12h-12z" fill="#999800"/>
<path d="M1794 155h12v12h-12z" fill="#999500"/>
<path d="M1806 155h12v12h-12z" fill="#999100"/>
<path d="M1818 155h12v12h-12z" fill="#998e00"/>
<path d="M1830 155h3v12h-3z" fill="#998d00"/>
<path d="M1602 167h12v12h-12z" fill="#6e9900"/>
<path d="M1614 167h12v12h-12z" fill="#719900"/>
<path d="M1626 167h12v12h-12z" fill="#749900"/>
<path d="M1638 167h12v12h-12z" fill="#779900"/>
<path d="M1650 167h12v12h-12z" fill="#7a9900"/>
<path d="M1662 167h12v12h-12z" fill="#7d9900"/>
<path d="M1674 167h12v12h-12z" fill="#809900"/>
<path d="M1686 167h12v12h-12z" fill="#839900"/>
<path d="M1698 167h12v12h-12z" fill="#869900"/>
<path d="M1710 167h12v12h-12z" fill="#899900"/>
<path d="M1722 167h12v12h-12z" fill="#8c9900"/>
<path d="M1734 167h12v12h-12z" fill="#909900"/>
<path d="M1746 167h12v12h-12z" fill="#939900"/>
<path d="M1758 167h12v12h-12z" fill="#969900"/>
<path d="M1770 167h12v12h-12z" fill="#999900"/>
<path d="M1782 167h12v12h-12z" fill="#999500"/>
<path d="M1794 167h12v12h-12z" fill="#999200"/>
<path d="M1806 167h12v12h-12z" fill="#998f00"/>
<path d="M1818 167h12v12h-12z" fill="#998c00"/>
<path d="M1830 167h3v12h-3z" fill="#998a00"/>
<path d="M1602 179h12v12h-12z" fill="#baff01"/>
<path d="M1614 179h12v12h-12z" fill="#739900"/>
<path d="M1626 179h12v12h-12z" fill="#769900"/>
<path d="M1638 179h12v12h-12z" fill="#799900"/>
<path d="M1650 179h12v12h-12z" fill="#7c9900"/>
<path d="M1662 179h12v12h-12z" fill="#7f9900"/>
<path d="M1674 179h12v12h-12z" fill="#829900"/>
<path d="M1686 179h12v12h-12z" fill="#859900"/>
<path d="M1698 179h12v12h-12z" fill="#889900"/>
<path d="M1710 179h12v12h-12z" fill="#8b9900"/>
<path d="M1722 179h12v12h-12z" fill="#8f9900"/>
<path d="M1734 179h12v12h-12z" fill="#929900"/>
<path d="M1746 179h12v12h-12z" fill="#959900"/>
<path d="M1758 179h12v12h-12z" fill="#989900"/>
<path d="M1770 179h12v12h-12z" fill="#999600"/>
<path d="M1782 179h12v12h-12z" fill="#999300"/>
<path d="M1794 179h12v12h-12z" fill="#999000"/>
<path d="M1806 179h12v12h-12z" fill="#998d00"/>
<path d="M1818 179h12v12h-12z" fill="#998a00"/>
<path d="M1830 179h3v12h-3z" fill="#998800"/>
<path d="M1602 191h12v12h-12z" fill="#bdff02"/>
<path d="M1614 191h12v12h-12z" fill="#c2ff01"/>
<path d="M1626 191h12v12h-12z" fill="#c7ff00"/>
<path d="M1638 191h12v12h-12z" fill="#7b9900"/>
<path d="M1650 191h12v12h-12z" fill="#7e9900"/>
<path d="M1662 191h12v12h-12z" fill="#819900"/>
<path d="M1674 191h12v12h-12z" fill="#849900"/>
<path d="M1686 191h12v12h-12z" fill="#879900"/>
<path d="M1698 191h12v12h-12z" fill="#8a9900"/>
<path d="M1710 191h12v12h-12z" fill="#8e9900"/>
<path d="M1722 191h12v12h-12z" fill="#919900"/>
<path d="M1734 191h12v12h-12z" fill="#949900"/>
<path d="M1746 191h12v12h-12z" fill="#979900"/>
<path d="M1758 191h12v12h-12z" fill="#999700"/>
<path d="M1770 191h12v12h-12z" fill="#999400"/>
<path d="M1782 191h12v12h-12z" fill="#999100"/>
<path d="M1794 191h12v12h-12z" fill="#998e00"/>
<path d="M1806 191h12v12h-12z" fill="#998b00"/>
<path d="M1818 191h12v12h-12z" fill="#998800"/>
<path d="M1830 191h3v12h-3z" fill="#998600"/>
<path d="M1602 203h12v12h-12z" fill="#c0ff04"/>
<path d="M1614 203h12v12h-12z" fill="#c5ff03"/>
<path d="M1626 203h12v12h-12z" fill="#caff02"/>
<path d="M1638 203h12v12h-12z" fill="#d0ff01"/>
<path d="M1650 203h12v12h-12z" fill="#809900"/>
<path d="M1662 203h12v12h-12z" fill="#839900"/>
<path d="M1674 203h12v12h-12z" fill="#869900"/>
<path d="M1686 203h12v12h-12z" fill="#899900"/>
<path d="M1698 203h12v12h-12z" fill="#8d9900"/>
<path d="M1710 203h12v12h-12z" fill="#909900"/>
<path d="M1722 203h12v12h-12z" fill="#939900"/>
<path d="M1734 203h12v12h-12z" fill="#969900"/>
<path d="M1746 203h12v12h-12z" fill="#999800"/>
<path d="M1758 203h12v12h-12z" fill="#999500"/>
<path d="M1770 203h12v12h-12z" fill="#999200"/>
<path d="M1782 203h12v12h-12z" fill="#998f00"/>
<path d="M1794 203h12v12h-12z" fill="#998c00"/>
<path d="M1806 203h12v12h-12z" fill="#998900"/>
<path d="M1818 203h12v12h-12z" fill="#998600"/>
<path d="M1830 203h3v12h-3z" fill="#998400"/>
<path d="M1602 215h12v12h-12z" fill="#c4ff06"/>
<path d="M1614 215h12v12h-12z" fill="#c9ff05"/>
<path d="M1626 215h12v12h-12z" fill="#ceff04"/>
<path d="M1638 215h12v12h-12z" fill="#d3ff03"/>
<path d="M1650 215h12v12h-12z" fill="#d8ff01"/>
<path d="M1662 215h12v12h-12z" fill="#deff00"/>
<path d="M1674 215h12v12h-12z" fill="#889900"/>
<path d="M1686 215h12v12h-12z" fill="#8c9900"/>
<path d="M1698 215h12v12h-12z" fill="#8f9900"/>
<path d="M1710 215h12v12h-12z" fill="#929900"/>
<path d="M1722 215h12v12h-12z" fill="#969900"/>
<path d="M1734 215h12v12h-12z" fill="#999900"/>
<path d="M1746 215h12v12h-12z" fill="#999600"/>
<path d="M1758 215h12v12h-12z" fill="#999300"/>
<path d="M1770 215h12v12h-12z" fill="#998f00"/>
<path d="M1782 215h12v12h-12z" fill="#998c00"/>
<path d="M1794 215h12v12h-12z" fill="#998900"/>
<path d="M1806 215h12v12h-12z" fill="#998700"/>
<path d="M1818 215h12v12h-12z" fill="#998400"/>
<path d="M1830 215h3v12h-3z" fill="#998200"/>
<path d="M1602 227h12v12h-12z" fill="#c7ff08"/>
<path d="M1614 227h12v12h-12z" fill="#ccff07"/>
<path d="M1626 227h12v12h-12z" fill="#d1ff05"/>
<path d="M1638 227h12v12h-12z" fill="#d7ff04"/>
<path d="M1650 227h12v12h-12z" fill="#dcff03"/>
<path d="M1662 227h12v12h-12z" fill="#e1ff02"/>
<path d="M1674 227h12v12h-12z" fill="#e7ff01"/>
<path d="M1686 227h12v12h-12z" fill="#8e9900"/>
<path d="M1698 227h12v12h-12z" fill="#919900"/>
<path d="M1710 227h12v12h-12z" fill="#959900"/>
<path d="M1722 227h12v12h-12z" fill="#989900"/>
<path d="M1734 227h12v12h-12z" fill="#999700"/>
<path d="M1746 227h12v12h-12z" fill="#999300"/>
<path d="M1758 227h12v12h-12z" fill="#999000"/>
<path d="M1770 227h12v12h-12z" fill="#998d00"/>
<path d="M1782 227h12v12h-12z" fill="#998a00"/>
<path d="M1794 227h12v12h-12z" fill="#998700"/>
<path d="M1806 227h12v12h-12z" fill="#998400"/>
<path d="M1818 227h12v12h-12z" fill="#998200"/>
<path d="M1830 227h3v12h-3z" fill="#998000"/>
<path d="M1602 239h12v12h-12z" fill="#caff09"/>
<path d="M1614 239h12v12h-12z" fill="#d0ff08"/>
<path d="M1626 239h12v12h-12z" fill="#d5ff07"/>
<path d="M1638 239h12v12h-12z" fill="#daff06"/>
<path d="M1650 239h12v12h-12z" fill="#e0ff05"/>
<path d="M1662 239h12v12h-12z" fill="#e5ff04"/>
<path d="M1674 239h12v12h-12z" fill="#ebff03"/>
<path d="M1686 239h12v12h-12z" fill="#f0ff01"/>
<path d="M1698 239h12v12h-12z" fill="#f6ff00"/>
<path d="M1710 239h12v12h-12z" fill="#979900"/>
<path d="M1722 239h12v12h-12z" fill="#999800"/>
<path d="M1734 239h12v12h-12z" fill="#999400"/>
<path d="M1746 239h12v12h-12z" fill="#999100"/>
<path d="M1758 239h12v12h-12z" fill="#998e00"/>
<path d="M1770 239h12v12h-12z" fill="#998b00"/>
<path d="M1782 239h12v12h-12z" fill="#998800"/>
<path d="M1794 239h12v12h-12z" fill="#998500"/>
<path d="M1806 239h12v12h-12z" fill="#998200"/>
<path d="M1818 239h12v12h-12z" fill="#998000"/>
<path d="M1830 239h3v12h-3z" fill="#997e00"/>
<path d="M1602 251h12v12h-12z" fill="#ceff0b"/>
<path d="M1614 251h12v12h-12z" fill="#d3ff0a"/>
<path d="M1626 251h12v12h-12z" fill="#d8ff09"/>
<path d="M1638 251h12v12h-12z" fill="#deff08"/>
<path d="M1650 251h12v12h-12z" fill="#e3ff07"/>
<path d="M1662 251h12v12h-12z" fill="#e9ff06"/>
<path d="M1674 251h12v12h-12z" fill="#efff04"/>
<path d="M1686 251h12v12h-12z" fill="#f4ff03"/>
<path d="M1698 251h12v12h-12z" fill="#faff02"/>
<path d="M1710 251h12v12h-12z" fill="#fffe01"/>
<path d="M1722 251h12v12h-12z" fill="#999500"/>
<path d="M1734 251h12v12h-12z" fill="#999200"/>
<path d="M1746 251h12v12h-12z" fill="#998f00"/>
<path d="M1758 251h12v12h-12z" fill="#998c00"/>
<path d="M1770 251h12v12h-12z" fill="#998900"/>
<path d="M1782 251h12v12h-12z" fill="#998600"/>
<path d="M1794 251h12v12h-12z" fill="#998300"/>
<path d="M1806 251h12v12h-12z" fill="#998000"/>
<path d="M1818 251h12v12h-12z" fill="#997e00"/>
<path d="M1830 251h3v12h-3z" fill="#997c00"/>
<path d="M1602 263h12v12h-12z" fill="#d1ff0d"/>
<path d="M1614 263h12v12h-12z" fill="#d7ff0c"/>
<path d="M1626 263h12v12h-12z" fill="#dcff0b"/>
<path d="M1638 263h12v12h-12z" fill="#e2ff0a"/>
<path d="M1650 263h12v12h-12z" fill="#e7ff09"/>
<path d="M1662 263h12v12h-12z" fill="#edff07"/>
<path d="M1674 263h12v12h-12z" fill="#f3ff06"/>
<path d="M1686 263h12v12h-12z" fill="#f8ff05"/>
<path d="M1698 263h12v12h-12z" fill="#feff04"/>
<path d="M1710 263h12v12h-12z" fill="#fffa03"/>
<path d="M1722 263h12v12h-12z" fill="#fff501"/>
<path d="M1734 263h12v12h-12z" fill="#ffef00"/>
<path d="M1746 263h12v12h-12z" fill="#998c00"/>
<path d="M1758 263h12v12h-12z" fill="#998900"/>
<path d="M1770 263h12v12h-12z" fill="#998700"/>
<path d="M1782 263h12v12h-12z" fill="#998400"/>
<path d="M1794 263h12v12h-12z" fill="#998100"/>
<path d="M1806 263h12v12h-12z" fill="#997e00"/>
<path d="M1818 263h12v12h-12z" fill="#997c00"/>
<path d="M1830 263h3v12h-3z" fill="#997a00"/>
<path d="M1602 275h12v12h-12z" fill="#d5ff0f"/>
<path d="M1614 275h12v12h-12z" fill="#daff0e"/>
<path d="M1626 275h12v12h-12z" fill="#e0ff0d"/>
<path d="M1638 275h12v12h-12z" fill="#e5ff0c"/>
<path d="M1650 275h12v12h-12z" fill="#ebff0b"/>
<path d="M1662 275h12v12h-12z" fill="#f1ff09"/>
<path d="M1674 275h12v12h-12z" fill="#f7ff08"/>
<path d="M1686 275h12v12h-12z" fill="#fcff07"/>
<path d="M1698 275h12v12h-12z" fill="#fffc06"/>
<path d="M1710 275h12v12h-12z" fill="#fff604"/>
<path d="M1722 275h12v12h-12z" fill="#fff103"/>
<path d="M1734 275h12v12h-12z" fill="#ffeb02"/>
<path d="M1746 275h12v12h-12z" fill="#ffe601"/>
<path d="M1758 275h12v12h-12z" fill="#998700"/>
<path d="M1770 275h12v12h-12z" fill="#998400"/>
<path d="M1782 275h12v12h-12z" fill="#998200"/>
<path d="M1794 275h12v12h-12z" fill="#997f00"/>
<path d="M1806 275h12v12h-12z" fill="#997c00"/>
<path d="M1818 275h12v12h-12z" fill="#997a00"/>
<path d="M1830 275h3v12h-3z" fill="#997800"/>
<path d="M1602 287h12v12h-12z" fill="#d8ff11"/>
<path d="M1614 287h12v12h-12z" fill="#deff10"/>
<path d="M1626 287h12v12h-12z" fill="#e4ff0f"/>
<path d="M1638 287h12v12h-12z" fill="#e9ff0e"/>
<path d="M1650 287h12v12h-12z" fill="#efff0c"/>
<path d="M1662 287h12v12h-12z" fill="#f5ff0b"/>
<path d="M1674 287h12v12h-12z" fill="#fbff0a"/>
<path d="M1686 287h12v12h-12z" fill="#fffd09"/>
<path d="M1698 287h12v12h-12z" fill="#fff807"/>
<path d="M1710 287h12v12h-12z" fill="#fff206"/>
<path d="M1722 287h12v12h-12z" fill="#ffed05"/>
<path d="M1734 287h12v12h-12z" fill="#ffe804"/>
<path d="M1746 287h12v12h-12z" fill="#ffe302"/>
<path d="M1758 287h12v12h-12z" fill="#ffde01"/>
<path d="M1770 287h12v12h-12z" fill="#ffd900"/>
<path d="M1782 287h12v12h-12z" fill="#998000"/>
<path d="M1794 287h12v12h-12z" fill="#997d00"/>
<path d="M1806 287h12v12h-12z" fill="#997a00"/>
<path d="M1818 287h12v12h-12z" fill="#997800"/>
<path d="M1830 287h3v12h-3z" fill="#997600"/>
<path d="M1602 299h12v12h-12z" fill="#dcff13"/>
<path d="M1614 299h12v12h-12z" fill="#e2ff12"/>
<path d="M1626 299h12v12h-12z" fill="#e8ff11"/>
<path d="M1638 299h12v12h-12z" fill="#edff10"/>
<path d="M1650 299h12v12h-12z" fill="#f3ff0e"/>
<path d="M1662 299h12v12h-12z" fill="#f9ff0d"/>
<path d="M1674 299h12v12h-12z" fill="#ffff0c"/>
<path d="M1686 299h12v12h-12z" fill="#fff90b"/>
<path d="M1698 299h12v12h-12z" fill="#fff409"/>
<path d="M1710 299h12v12h-12z" fill="#ffee08"/>
<path d="M1722 299h12v12h-12z" fill="#ffe907"/>
<path d="M1734 299h12v12h-12z" fill="#ffe405"/>
<path d="M1746 299h12v12h-12z" fill="#ffdf04"/>
<path d="M1758 299h12v12h-12z" fill="#ffda03"/>
<path d="M1770 299h12v12h-12z" fill="#ffd602"/>
<path d="M1782 299h12v12h-12z" fill="#ffd101"/>
<path d="M1794 299h12v12h-12z" fill="#997b00"/>
<path d="M1806 299h12v12h-12z" fill="#997800"/>
<path d="M1818 299h12v12h-12z" fill="#997600"/>
<path d="M1830 299h3v12h-3z" fill="#997400"/>
<path d="M1602 311h12v12h-12z" fill="#e0ff15"/>
<path d="M1614 311h12v12h-12z" fill="#e6ff14"/>
<path d="M1626 311h12v12h-12z" fill="#ecff13"/>
<path d="M1638 311h12v12h-12z" fill="#f1ff12"/>
<path d="M1650 311h12v12h-12z" fill="#f7ff11"/>
<path d="M1662 311h12v12h-12z" fill="#fdff0f"/>
<path d="M1674 311h12v12h-12z" fill="#fffb0e"/>
<path d="M1686 311h12v12h-12z" fill="#fff50c"/>
<path d="M1698 311h12v12h-12z" fill="#fff00b"/>
<path d="M1710 311h12v12h-12z" fill="#ffea0a"/>
<path d="M1722 311h12v12h-12z" fill="#ffe508"/>
<path d="M1734 311h12v12h-12z" fill="#ffe007"/>
<path d="M1746 311h12v12h-12z" fill="#ffdb06"/>
<path d="M1758 311h12v12h-12z" fill="#ffd705"/>
<path d="M1770 311h12v12h-12z" fill="#ffd203"/>
<path d="M1782 311h12v12h-12z" fill="#ffce02"/>
<path d="M1794 311h12v12h-12z" fill="#ffc901"/>
<path d="M1806 311h12v12h-12z" fill="#ffc500"/>
<path d="M1818 311h12v12h-12z" fill="#997400"/>
<path d="M1830 311h3v12h-3z" fill="#997300"/>
<path d="M1602 323h12v12h-12z" fill="#e4ff17"/>
<path d="M1614 323h12v12h-12z" fill="#eaff16"/>
<path d="M1626 323h12v12h-12z" fill="#f0ff15"/>
<path d="M1638 323h12v12h-12z" fill="#f6ff14"/>
<path d="M1650 323h12v12h-12z" fill="#fcff13"/>
<path d="M1662 323h12v12h-12z" fill="#fffc11"/>
<path d="M1674 323h12v12h-12z" fill="#fff710"/>
<path d="M1686 323h12v12h-12z" fill="#fff10e"/>
<path d="M1698 323h12v12h-12z" fill="#ffec0d"/>
<path d="M1710 323h12v12h-12z" fill="#ffe60b"/>
<path d="M1722 323h12v12h-12z" fill="#ffe10a"/>
<path d="M1734 323h12v12h-12z" fill="#ffdc09"/>
<path d="M1746 323h12v12h-12z" fill="#ffd807"/>
<path d="M1758 323h12v12h-12z" fill="#ffd306"/>
<path d="M1770 323h12v12h-12z" fill="#ffcf05"/>
<path d="M1782 323h12v12h-12z" fill="#ffca04"/>
<path d="M1794 323h12v12h-12z" fill="#ffc603"/>
<path d="M1806 323h12v12h-12z" fill="#ffc202"/>
<path d="M1818 323h12v12h-12z" fill="#ffbe01"/>
<path d="M1830 323h3v12h-3z" fill="#997100"/>
<path d="M1602 335h12v12h-12z" fill="#e8ff19"/>
<path d="M1614 335h12v12h-12z" fill="#eeff18"/>
<path d="M1626 335h12v12h-12z" fill="#f4ff17"/>
<path d="M1638 335h12v12h-12z" fill="#faff16"/>
<path d="M1650 335h12v12h-12z" fill="#fffe15"/>
<path d="M1662 335h12v12h-12z" fill="#fff813"/>
<path d="M1674 335h12v12h-12z" fill="#fff211"/>
<path d="M1686 335h12v12h-12z" fill="#ffed10"/>
<path d="M1698 335h12v12h-12z" fill="#ffe80e"/>
<path d="M1710 335h12v12h-12z" fill="#ffe20d"/>
<path d="M1722 335h12v12h-12z" fill="#ffde0c"/>
<path d="M1734 335h12v12h-12z" fill="#ffd90a"/>
<path d="M1746 335h12v12h-12z" fill="#ffd409"/>
<path d="M1758 335h12v12h-12z" fill="#ffd008"/>
<path d="M1770 335h12v12h-12z" fill="#ffcb07"/>
<path d="M1782 335h12v12h-12z" fill="#ffc705"/>
<path d="M1794 335h12v12h-12z" fill="#ffc304"/>
<path d="M1806 335h12v12h-12z" fill="#ffbf03"/>
<path d="M1818 335h12v12h-12z" fill="#ffbb02"/>
<path d="M1830 335h3v12h-3z" fill="#ffb901"/>
<path d="M1602 347h12v3h-12z" fill="#eaff1b"/>
<path d="M1614 347h12v3h-12z" fill="#f0ff1a"/>
<path d="M1626 347h12v3h-12z" fill="#f6ff18"/>
<path d="M1638 347h12v3h-12z" fill="#fcff17"/>
<path d="M1650 347h12v3h-12z" fill="#fffb16"/>
<path d="M1662 347h12v3h-12z" fill="#fff614"/>
<path d="M1674 347h12v3h-12z" fill="#fff012"/>
<path d="M1686 347h12v3h-12z" fill="#ffea11"/>
<path d="M1698 347h12v3h-12z" fill="#ffe50f"/>
<path d="M1710 347h12v3h-12z" fill="#ffe00e"/>
<path d="M1722 347h12v3h-12z" fill="#ffdb0d"/>
<path d="M1734 347h12v3h-12z" fill="#ffd60b"/>
<path d="M1746 347h12v3h-12z" fill="#ffd20a"/>
<path d="M1758 347h12v3h-12z" fill="#ffcd09"/>
<path d="M1770 347h12v3h-12z" fill="#ffc908"/>
<path d="M1782 347h12v3h-12z" fill="#ffc506"/>
<path d="M1794 347h12v3h-12z" fill="#ffc105"/>
<path d="M1806 347h12v3h-12z" fill="#ffbd04"/>
<path d="M1818 347h12v3h-12z" fill="#ffb903"/>
<path d="M1830 347h3v3h-3z" fill="#ffb702"/>
</g>
</svg>
<canvas id="cie" class="abs" style="left:1151px;top:147px" width="690" height="523"></canvas>
<canvas id="ins" class="abs" style="left:1602px;top:155px" width="231" height="195"></canvas>
<svg class="abs" style="left:0;top:0" width="1920" height="1039">
<path d="M1150.9 147 V669.8 H1841 V147 Z" fill="none" stroke="#a8a8a8" stroke-width="1.6"/>
<line x1="1144.5" y1="669.9" x2="1151" y2="669.9" stroke="#a8a8a8" stroke-width="1.5"/>
<text x="1144" y="678.4" font-size="15.5" fill="#d8d8d8" text-anchor="end">0</text>
<line x1="1150.9" y1="669.8" x2="1150.9" y2="676.5" stroke="#a8a8a8" stroke-width="1.5"/>
<text x="1150.9" y="693.5" font-size="15.5" fill="#d8d8d8" text-anchor="middle">0</text>
<line x1="1144.5" y1="607.6" x2="1151" y2="607.6" stroke="#a8a8a8" stroke-width="1.5"/>
<text x="1144" y="613.1" font-size="15.5" fill="#d8d8d8" text-anchor="end">0,1</text>
<line x1="1233.0" y1="669.8" x2="1233.0" y2="676.5" stroke="#a8a8a8" stroke-width="1.5"/>
<text x="1233.0" y="693.5" font-size="15.5" fill="#d8d8d8" text-anchor="middle">0,1</text>
<line x1="1144.5" y1="545.3" x2="1151" y2="545.3" stroke="#a8a8a8" stroke-width="1.5"/>
<text x="1144" y="550.8" font-size="15.5" fill="#d8d8d8" text-anchor="end">0,2</text>
<line x1="1315.1" y1="669.8" x2="1315.1" y2="676.5" stroke="#a8a8a8" stroke-width="1.5"/>
<text x="1315.1" y="693.5" font-size="15.5" fill="#d8d8d8" text-anchor="middle">0,2</text>
<line x1="1144.5" y1="483.1" x2="1151" y2="483.1" stroke="#a8a8a8" stroke-width="1.5"/>
<text x="1144" y="488.6" font-size="15.5" fill="#d8d8d8" text-anchor="end">0,3</text>
<line x1="1397.2" y1="669.8" x2="1397.2" y2="676.5" stroke="#a8a8a8" stroke-width="1.5"/>
<text x="1397.2" y="693.5" font-size="15.5" fill="#d8d8d8" text-anchor="middle">0,3</text>
<line x1="1144.5" y1="420.8" x2="1151" y2="420.8" stroke="#a8a8a8" stroke-width="1.5"/>
<text x="1144" y="426.3" font-size="15.5" fill="#d8d8d8" text-anchor="end">0,4</text>
<line x1="1479.3" y1="669.8" x2="1479.3" y2="676.5" stroke="#a8a8a8" stroke-width="1.5"/>
<text x="1479.3" y="693.5" font-size="15.5" fill="#d8d8d8" text-anchor="middle">0,4</text>
<line x1="1144.5" y1="358.5" x2="1151" y2="358.5" stroke="#a8a8a8" stroke-width="1.5"/>
<text x="1144" y="364.0" font-size="15.5" fill="#d8d8d8" text-anchor="end">0,5</text>
<line x1="1561.4" y1="669.8" x2="1561.4" y2="676.5" stroke="#a8a8a8" stroke-width="1.5"/>
<text x="1561.4" y="693.5" font-size="15.5" fill="#d8d8d8" text-anchor="middle">0,5</text>
<line x1="1144.5" y1="296.2" x2="1151" y2="296.2" stroke="#a8a8a8" stroke-width="1.5"/>
<text x="1144" y="301.7" font-size="15.5" fill="#d8d8d8" text-anchor="end">0,6</text>
<line x1="1643.4" y1="669.8" x2="1643.4" y2="676.5" stroke="#a8a8a8" stroke-width="1.5"/>
<text x="1643.4" y="693.5" font-size="15.5" fill="#d8d8d8" text-anchor="middle">0,6</text>
<line x1="1144.5" y1="233.9" x2="1151" y2="233.9" stroke="#a8a8a8" stroke-width="1.5"/>
<text x="1144" y="239.4" font-size="15.5" fill="#d8d8d8" text-anchor="end">0,7</text>
<line x1="1725.5" y1="669.8" x2="1725.5" y2="676.5" stroke="#a8a8a8" stroke-width="1.5"/>
<text x="1725.5" y="693.5" font-size="15.5" fill="#d8d8d8" text-anchor="middle">0,7</text>
<line x1="1144.5" y1="171.7" x2="1151" y2="171.7" stroke="#a8a8a8" stroke-width="1.5"/>
<text x="1144" y="177.2" font-size="15.5" fill="#d8d8d8" text-anchor="end">0,8</text>
<line x1="1807.6" y1="669.8" x2="1807.6" y2="676.5" stroke="#a8a8a8" stroke-width="1.5"/>
<text x="1807.6" y="693.5" font-size="15.5" fill="#d8d8d8" text-anchor="middle">0,8</text>
<rect x="1452.4" y="456.6" width="14" height="14" fill="none" stroke="rgba(255,255,255,0.85)" stroke-width="2"/>
<rect x="1507.6" y="456.6" width="14" height="14" fill="none" stroke="rgba(255,255,255,0.85)" stroke-width="2"/>
<rect x="1556.4" y="456.6" width="14" height="14" fill="none" stroke="rgba(255,255,255,0.85)" stroke-width="2"/>
<rect x="1608.7" y="456.6" width="14" height="14" fill="none" stroke="rgba(255,255,255,0.85)" stroke-width="2"/>
<rect x="1668.0" y="456.6" width="14" height="14" fill="none" stroke="rgba(255,255,255,0.85)" stroke-width="2"/>
<rect x="1388.4" y="289.2" width="14" height="14" fill="none" stroke="rgba(255,255,255,0.85)" stroke-width="2"/>
<rect x="1391.4" y="325.0" width="14" height="14" fill="none" stroke="rgba(255,255,255,0.85)" stroke-width="2"/>
<rect x="1393.1" y="358.5" width="14" height="14" fill="none" stroke="rgba(255,255,255,0.85)" stroke-width="2"/>
<rect x="1394.9" y="390.2" width="14" height="14" fill="none" stroke="rgba(255,255,255,0.85)" stroke-width="2"/>
<rect x="1396.6" y="423.7" width="14" height="14" fill="none" stroke="rgba(255,255,255,0.85)" stroke-width="2"/>
<rect x="1372.6" y="490.6" width="14" height="14" fill="none" stroke="rgba(255,255,255,0.85)" stroke-width="2"/>
<rect x="1346.1" y="524.1" width="14" height="14" fill="none" stroke="rgba(255,255,255,0.85)" stroke-width="2"/>
<rect x="1320.3" y="556.4" width="14" height="14" fill="none" stroke="rgba(255,255,255,0.85)" stroke-width="2"/>
<rect x="1294.5" y="588.1" width="14" height="14" fill="none" stroke="rgba(255,255,255,0.85)" stroke-width="2"/>
<rect x="1265.7" y="624.5" width="14" height="14" fill="none" stroke="rgba(255,255,255,0.85)" stroke-width="2"/>
<rect x="1328.0" y="458.0" width="14" height="14" fill="none" stroke="rgba(255,255,255,0.85)" stroke-width="2"/>
<rect x="1342.0" y="458.0" width="14" height="14" fill="none" stroke="rgba(255,255,255,0.85)" stroke-width="2"/>
<rect x="1356.0" y="458.0" width="14" height="14" fill="none" stroke="rgba(255,255,255,0.85)" stroke-width="2"/>
<rect x="1370.0" y="458.0" width="14" height="14" fill="none" stroke="rgba(255,255,255,0.85)" stroke-width="2"/>
<rect x="1384.0" y="458.0" width="14" height="14" fill="none" stroke="rgba(255,255,255,0.85)" stroke-width="2"/>
<rect x="1399.6" y="479.5" width="14" height="14" fill="none" stroke="rgba(255,255,255,0.85)" stroke-width="2"/>
<rect x="1402.5" y="501.8" width="14" height="14" fill="none" stroke="rgba(255,255,255,0.85)" stroke-width="2"/>
<rect x="1403.1" y="521.7" width="14" height="14" fill="none" stroke="rgba(255,255,255,0.85)" stroke-width="2"/>
<rect x="1404.3" y="543.5" width="14" height="14" fill="none" stroke="rgba(255,255,255,0.85)" stroke-width="2"/>
<rect x="1406.0" y="567.0" width="14" height="14" fill="none" stroke="rgba(255,255,255,0.85)" stroke-width="2"/>
<rect x="1418.4" y="435.7" width="14" height="14" fill="none" stroke="rgba(255,255,255,0.85)" stroke-width="2"/>
<rect x="1436.5" y="413.0" width="14" height="14" fill="none" stroke="rgba(255,255,255,0.85)" stroke-width="2"/>
<rect x="1453.6" y="391.5" width="14" height="14" fill="none" stroke="rgba(255,255,255,0.85)" stroke-width="2"/>
<rect x="1469.7" y="371.3" width="14" height="14" fill="none" stroke="rgba(255,255,255,0.85)" stroke-width="2"/>
<rect x="1488.1" y="348.2" width="14" height="14" fill="none" stroke="rgba(255,255,255,0.85)" stroke-width="2"/>
<circle cx="1457.1" cy="464.1" r="5" fill="rgba(150,150,150,0.42)" stroke="#1c1c1c" stroke-width="1.3"/>
<circle cx="1511.7" cy="464.1" r="5" fill="rgba(150,150,150,0.42)" stroke="#1c1c1c" stroke-width="1.3"/>
<circle cx="1558.1" cy="464.1" r="5" fill="rgba(150,150,150,0.42)" stroke="#1c1c1c" stroke-width="1.3"/>
<circle cx="1609.8" cy="464.1" r="5" fill="rgba(150,150,150,0.42)" stroke="#1c1c1c" stroke-width="1.3"/>
<circle cx="1672.0" cy="464.1" r="5" fill="rgba(150,150,150,0.42)" stroke="#1c1c1c" stroke-width="1.3"/>
<circle cx="1393.7" cy="297.3" r="5" fill="rgba(150,150,150,0.42)" stroke="#1c1c1c" stroke-width="1.3"/>
<circle cx="1392.5" cy="333.2" r="5" fill="rgba(150,150,150,0.42)" stroke="#1c1c1c" stroke-width="1.3"/>
<circle cx="1396.0" cy="366.0" r="5" fill="rgba(150,150,150,0.42)" stroke="#1c1c1c" stroke-width="1.3"/>
<circle cx="1399.0" cy="398.4" r="5" fill="rgba(150,150,150,0.42)" stroke="#1c1c1c" stroke-width="1.3"/>
<circle cx="1401.3" cy="431.3" r="5" fill="rgba(150,150,150,0.42)" stroke="#1c1c1c" stroke-width="1.3"/>
<circle cx="1378.7" cy="498.4" r="5" fill="rgba(150,150,150,0.42)" stroke="#1c1c1c" stroke-width="1.3"/>
<circle cx="1352.6" cy="532.0" r="5" fill="rgba(150,150,150,0.42)" stroke="#1c1c1c" stroke-width="1.3"/>
<circle cx="1327.8" cy="563.3" r="5" fill="rgba(150,150,150,0.42)" stroke="#1c1c1c" stroke-width="1.3"/>
<circle cx="1302.5" cy="595.1" r="5" fill="rgba(150,150,150,0.42)" stroke="#1c1c1c" stroke-width="1.3"/>
<circle cx="1272.7" cy="631.5" r="5" fill="#101090" stroke="#1c1c1c" stroke-width="1.3"/>
<circle cx="1333.2" cy="466.5" r="5" fill="rgba(150,150,150,0.42)" stroke="#1c1c1c" stroke-width="1.3"/>
<circle cx="1346.7" cy="466.5" r="5" fill="rgba(150,150,150,0.42)" stroke="#1c1c1c" stroke-width="1.3"/>
<circle cx="1361.4" cy="466.5" r="5" fill="rgba(150,150,150,0.42)" stroke="#1c1c1c" stroke-width="1.3"/>
<circle cx="1375.5" cy="465.3" r="5" fill="rgba(150,150,150,0.42)" stroke="#1c1c1c" stroke-width="1.3"/>
<circle cx="1390.1" cy="465.3" r="5" fill="rgba(150,150,150,0.42)" stroke="#1c1c1c" stroke-width="1.3"/>
<circle cx="1406.2" cy="487.0" r="5" fill="rgba(150,150,150,0.42)" stroke="#1c1c1c" stroke-width="1.3"/>
<circle cx="1409.2" cy="508.6" r="5" fill="rgba(150,150,150,0.42)" stroke="#1c1c1c" stroke-width="1.3"/>
<circle cx="1410.0" cy="528.8" r="5" fill="rgba(150,150,150,0.42)" stroke="#1c1c1c" stroke-width="1.3"/>
<circle cx="1411.6" cy="550.4" r="5" fill="rgba(150,150,150,0.42)" stroke="#1c1c1c" stroke-width="1.3"/>
<circle cx="1413.5" cy="573.8" r="5" fill="rgba(150,150,150,0.42)" stroke="#1c1c1c" stroke-width="1.3"/>
<circle cx="1422.8" cy="443.6" r="5" fill="rgba(150,150,150,0.42)" stroke="#1c1c1c" stroke-width="1.3"/>
<circle cx="1440.0" cy="421.5" r="5" fill="rgba(150,150,150,0.42)" stroke="#1c1c1c" stroke-width="1.3"/>
<circle cx="1457.0" cy="399.7" r="5" fill="rgba(150,150,150,0.42)" stroke="#1c1c1c" stroke-width="1.3"/>
<circle cx="1472.8" cy="379.4" r="5" fill="rgba(150,150,150,0.42)" stroke="#1c1c1c" stroke-width="1.3"/>
<circle cx="1491.5" cy="355.3" r="5" fill="rgba(150,150,150,0.42)" stroke="#1c1c1c" stroke-width="1.3"/>
<rect x="1399.8" y="458.2" width="14" height="14" fill="none" stroke="#000" stroke-width="2"/>
<circle cx="1406.2" cy="465.2" r="5" fill="#fff" stroke="#1c1c1c" stroke-width="1.3"/>
<rect x="1601" y="154" width="232.5" height="196.5" fill="none" stroke="#a0a0a0" stroke-width="1.8"/>
<rect x="1708.5" y="243.7" width="15" height="15" fill="none" stroke="#f4f4f4" stroke-width="2"/>
<circle cx="1695.9" cy="251.2" r="4.6" fill="rgba(140,140,140,0.55)" stroke="#1c1c1c" stroke-width="1.3"/>
</svg>
<div class="abs" style="left:0;top:968px;width:1920px;height:71px;background:linear-gradient(#464646,#2a2a2a)"></div>
<div class="abs" style="left:1px;top:969px;width:51px;height:69px;border-radius:6px;background:linear-gradient(#a8a8a8 0%,#8c8c8c 45%,#6e6e6e 75%,#5a5a5a 100%)"></div>
<svg class="abs" style="left:1px;top:969px" width="51" height="30"><circle cx="25.5" cy="9.5" r="8.5" fill="#666" opacity="0.7"/><path d="M20.5 12h10l-5-5z" fill="#222"/></svg>
<div class="abs" style="left:7px;top:998px;width:39px;height:35px;border-radius:5px;background:#ffff00;border:1px solid #9a9a20"></div>
<div class="abs" style="left:59.0px;top:969px;width:169px;height:69px;border-radius:6px;background:linear-gradient(#a8a8a8 0%,#8c8c8c 45%,#6e6e6e 75%,#5a5a5a 100%)"></div>
<div class="abs" style="left:65.0px;top:975px;width:157px;height:41px;border-radius:5px;background:#c2c3a6;border:1px solid #7a7a5a"></div>
<div class="abs" style="left:59.0px;top:1021px;width:169px;text-align:center;font-size:12px;font-weight:bold;color:#333;line-height:14px">20%</div>
<div class="abs" style="left:230.8px;top:969px;width:169px;height:69px;border-radius:6px;background:linear-gradient(#a8a8a8 0%,#8c8c8c 45%,#6e6e6e 75%,#5a5a5a 100%)"></div>
<div class="abs" style="left:236.8px;top:975px;width:157px;height:41px;border-radius:5px;background:#c1c28a;border:1px solid #7a7a5a"></div>
<div class="abs" style="left:230.8px;top:1021px;width:169px;text-align:center;font-size:12px;font-weight:bold;color:#333;line-height:14px">40%</div>
<div class="abs" style="left:402.6px;top:969px;width:169px;height:69px;border-radius:6px;background:linear-gradient(#a8a8a8 0%,#8c8c8c 45%,#6e6e6e 75%,#5a5a5a 100%)"></div>
<div class="abs" style="left:408.6px;top:975px;width:157px;height:41px;border-radius:5px;background:#c3c274;border:1px solid #7a7a5a"></div>
<div class="abs" style="left:402.6px;top:1021px;width:169px;text-align:center;font-size:12px;font-weight:bold;color:#333;line-height:14px">60%</div>
<div class="abs" style="left:574.4px;top:969px;width:169px;height:69px;border-radius:6px;background:linear-gradient(#a8a8a8 0%,#8c8c8c 45%,#6e6e6e 75%,#5a5a5a 100%)"></div>
<div class="abs" style="left:580.4px;top:975px;width:157px;height:41px;border-radius:5px;background:#c1bf52;border:1px solid #7a7a5a"></div>
<div class="abs" style="left:574.4px;top:1021px;width:169px;text-align:center;font-size:12px;font-weight:bold;color:#333;line-height:14px">80%</div>
<div class="abs" style="left:746.2px;top:969px;width:169px;height:69px;border-radius:6px;background:linear-gradient(#1c1c1c,#2a2a2a 40%,#353535)"></div>
<div class="abs" style="left:751.2px;top:974px;width:159px;height:42px;border-radius:5px;background:#c8c400;border:1px solid #50500a"></div>
<div class="abs" style="left:746.2px;top:1021px;width:169px;text-align:center;font-size:12px;font-weight:bold;color:#f4f4f4;line-height:14px">100%</div>
<div class="abs" style="left:1563px;top:969px;width:54px;height:69px;border-radius:6px;background:linear-gradient(#a8a8a8,#8a8a8a 29%,#7c7c7c 30%,#a8a8a8 33%,#8c8c8c 70%,#7a7a7a)"></div>
<div class="abs" style="left:1563px;top:989px;width:54px;height:2px;background:#666"></div>
<svg class="abs" style="left:1563px;top:969px" width="54" height="69"><circle cx="27" cy="10" r="8" fill="#777" opacity="0.6"/><path d="M22 12.5h10l-5-5z" fill="#222"/><rect x="10" y="29" width="33" height="33" rx="4" fill="#bdbdbd" stroke="#222" stroke-width="2.6"/><rect x="19" y="38" width="15" height="15" fill="#000"/></svg>
<div class="abs" style="left:1619px;top:969px;width:50px;height:34px;background:linear-gradient(#a8a8a8,#7c7c7c);border-right:1px solid #555"></div>
<svg class="abs" style="left:1619px;top:969px" width="50" height="34"><circle cx="26.5" cy="17" r="11" fill="#8a8a8a" stroke="#9a9a9a" stroke-width="1"/></svg>
<div class="abs" style="left:1670px;top:969px;width:50px;height:34px;background:linear-gradient(#a8a8a8,#7c7c7c);border-right:1px solid #555"></div>
<svg class="abs" style="left:1670px;top:969px" width="50" height="34"><circle cx="26.5" cy="17" r="11" fill="#8a8a8a" stroke="#9a9a9a" stroke-width="1"/></svg>
<div class="abs" style="left:1721px;top:969px;width:50px;height:34px;background:linear-gradient(#a8a8a8,#7c7c7c);border-right:1px solid #555"></div>
<svg class="abs" style="left:1721px;top:969px" width="50" height="34"><circle cx="26.5" cy="17" r="11" fill="#8a8a8a" stroke="#9a9a9a" stroke-width="1"/></svg>
<div class="abs" style="left:1772px;top:969px;width:50px;height:34px;background:linear-gradient(#a8a8a8,#7c7c7c);border-right:1px solid #555"></div>
<svg class="abs" style="left:1772px;top:969px" width="50" height="34"><circle cx="26.5" cy="17" r="11" fill="#8a8a8a" stroke="#9a9a9a" stroke-width="1"/></svg>
<div class="abs" style="left:1823px;top:969px;width:50px;height:34px;background:linear-gradient(#a8a8a8,#7c7c7c);border-right:1px solid #555"></div>
<svg class="abs" style="left:1823px;top:969px" width="50" height="34"><circle cx="26.5" cy="17" r="11" fill="#8a8a8a" stroke="#9a9a9a" stroke-width="1"/></svg>
<svg class="abs" style="left:1619px;top:969px" width="50" height="34"><g transform="translate(1 0)"><rect x="21.5" y="13" width="8" height="8" fill="#222"/></g></svg>
<svg class="abs" style="left:1670px;top:969px" width="50" height="34"><g transform="translate(1 0)"><path d="M22 11.5v11l9-5.5z" fill="#222"/></g></svg>
<svg class="abs" style="left:1721px;top:969px" width="50" height="34"><g transform="translate(1 0)"><path d="M20 11.5h-2v11h2M31 11.5h2v11h-2" fill="none" stroke="#222" stroke-width="2"/><circle cx="23" cy="17" r="1" fill="#222"/><circle cx="25.5" cy="17" r="1" fill="#222"/><circle cx="28" cy="17" r="1" fill="#222"/></g></svg>
<svg class="abs" style="left:1772px;top:969px" width="50" height="34"><g transform="translate(1 0)"><path d="M25.5 17c-2-3-7-3-7 0s5 3 7 0s7-3 7 0s-5 3-7 0" fill="none" stroke="#222" stroke-width="2"/></g></svg>
<svg class="abs" style="left:1823px;top:969px" width="50" height="34"><g transform="translate(1 0)"><path d="M19 16a6.5 6.5 0 0 1 11.5 -3.5M32 18a6.5 6.5 0 0 1 -11.5 3.5" fill="none" stroke="#222" stroke-width="2.4"/><path d="M31.5 9.5v5h-5z M19.5 24.5v-5h5z" fill="#222"/></g></svg>
<div class="abs" style="left:1874px;top:969px;width:46px;height:34px;background:#252525"></div>
<svg class="abs" style="left:1874px;top:969px" width="46" height="34"><circle cx="26" cy="17" r="11" fill="#2c2c2c"/></svg>
<div class="abs" style="left:1619px;top:1004px;width:153px;height:34px;background:linear-gradient(#b8b8b8,#8a8a8a);border-radius:4px 0 0 4px;border-right:1px solid #666"></div>
<div class="abs" style="left:1773px;top:1004px;width:147px;height:34px;background:linear-gradient(#b8b8b8,#8a8a8a)"></div>
<svg class="abs" style="left:1619px;top:1004px" width="301" height="34"><circle cx="34.5" cy="17" r="11" fill="#a0a0a0" opacity="0.8"/><path d="M37 12l-5 5 5 5M32 12l-5 5 5 5" fill="none" stroke="#333" stroke-width="1.8"/><circle cx="275" cy="17" r="11" fill="#a0a0a0" opacity="0.8"/><path d="M270 12l5 5-5 5M275 12l5 5-5 5" fill="none" stroke="#333" stroke-width="1.8"/><text x="65.5" y="26" font-size="25" fill="#2e2e2e" stroke="#2e2e2e" stroke-width="0.6" textLength="56" lengthAdjust="spacingAndGlyphs">Back</text><text x="186" y="26" font-size="25" fill="#2e2e2e" stroke="#2e2e2e" stroke-width="0.6" textLength="58" lengthAdjust="spacingAndGlyphs">Next</text></svg>
<script>
(function(){
var L=[[0.1741,0.0050],[0.1738,0.0049],[0.1733,0.0048],[0.1726,0.0048],[0.1714,0.0051],[0.1703,0.0058],[0.1689,0.0069],[0.1669,0.0086],[0.1644,0.0109],[0.1611,0.0138],[0.1566,0.0177],[0.1510,0.0227],[0.1440,0.0297],[0.1355,0.0399],[0.1241,0.0578],[0.1096,0.0868],[0.0913,0.1327],[0.0687,0.2007],[0.0454,0.2950],[0.0235,0.4127],[0.0082,0.5384],[0.0039,0.6548],[0.0139,0.7502],[0.0389,0.8120],[0.0743,0.8338],[0.1142,0.8262],[0.1547,0.8059],[0.1929,0.7816],[0.2296,0.7543],[0.2658,0.7243],[0.3016,0.6923],[0.3373,0.6589],[0.3731,0.6245],[0.4087,0.5896],[0.4441,0.5547],[0.4788,0.5202],[0.5125,0.4866],[0.5448,0.4544],[0.5752,0.4242],[0.6029,0.3965],[0.6270,0.3725],[0.6482,0.3514],[0.6658,0.3340],[0.6801,0.3197],[0.6915,0.3083],[0.7006,0.2993],[0.7079,0.2920],[0.7140,0.2859],[0.7190,0.2809],[0.7230,0.2770],[0.7260,0.2740],[0.7283,0.2717],[0.7300,0.2700],[0.7334,0.2666],[0.7347,0.2653]];
var DARK=0.6;
function lin(x,y){var z=1-x-y;return [3.2406*x-1.5372*y-0.4986*z,-0.9689*x+1.8758*y+0.0415*z,0.0557*x-0.2040*y+1.0570*z];}
var W=lin(0.3127,0.3290);
function g(v){v=v<0?0:v;return v<=0.0031308?12.92*v:1.055*Math.pow(v,1/2.4)-0.055;}
function col(x,y,out){
  var c=lin(x,y),f=1;
  if(c[0]<0||c[1]<0||c[2]<0){f=DARK;}
  var r=c[0]<0?0:c[0],gg=c[1]<0?0:c[1],b=c[2]<0?0:c[2];
  var m=Math.max(r,gg,b);
  out[0]=255*r/m*f;out[1]=255*gg/m*f;out[2]=255*b/m*f;
}
function draw(id,w,h,mapx,mapy){
  var cv=document.getElementById(id);if(!cv||!cv.getContext)return;
  var ctx=cv.getContext('2d');
  var SS=2,W2=w*SS,H2=h*SS;
  var big=document.createElement('canvas');big.width=W2;big.height=H2;
  var bc=big.getContext('2d');var im=bc.createImageData(W2,H2);var d=im.data;var o=[0,0,0];
  for(var j=0;j<H2;j++){var y=mapy((j+0.5)/SS);for(var i=0;i<W2;i++){var x=mapx((i+0.5)/SS);col(x,y,o);var k=(j*W2+i)*4;d[k]=o[0];d[k+1]=o[1];d[k+2]=o[2];d[k+3]=255;}}
  bc.putImageData(im,0,0);
  var off=document.createElement('canvas');off.width=w;off.height=h;
  var oc=off.getContext('2d');oc.imageSmoothingEnabled=true;oc.imageSmoothingQuality='high';
  oc.drawImage(big,0,0,w,h);
  ctx.fillStyle=ctx.createPattern(off,'no-repeat');
  ctx.beginPath();
  var P=[];for(var n=0;n<L.length;n++){P.push([L[n][0]*MX+OX,MY0-L[n][1]*MY]);}
  var N=P.length;
  ctx.moveTo(P[0][0],P[0][1]);
  for(var n=0;n<N-1;n++){var p0=P[n>0?n-1:0],p1=P[n],p2=P[n+1],p3=P[n+2<N?n+2:N-1];
    for(var s=1;s<=12;s++){var t=s/12,t2=t*t,t3=t2*t;
      var X=0.5*((2*p1[0])+(-p0[0]+p2[0])*t+(2*p0[0]-5*p1[0]+4*p2[0]-p3[0])*t2+(-p0[0]+3*p1[0]-3*p2[0]+p3[0])*t3);
      var Y=0.5*((2*p1[1])+(-p0[1]+p2[1])*t+(2*p0[1]-5*p1[1]+4*p2[1]-p3[1])*t2+(-p0[1]+3*p1[1]-3*p2[1]+p3[1])*t3);
      ctx.lineTo(X,Y);}}
  ctx.closePath();ctx.fill();
}
var MX=820.9,MY=622.8,MY0=669.9-147,OX=1150.9-1151;
draw('cie',690,523,function(i){return (i+OX)/MX;},function(j){return (MY0-j)/MY;});
// inset: whole area inside locus
(function(){
  var cv=document.getElementById('ins');var ctx=cv.getContext('2d');var w=231,h=195;
  var im=ctx.createImageData(w,h);var d=im.data;var o=[0,0,0];
  var x0=0.3943,x1=0.4443,y0=0.4803,y1=0.5303;
  for(var j=0;j<h;j++){var y=y1-(j+0.5)/h*(y1-y0);for(var i=0;i<w;i++){var x=x0+(i+0.5)/w*(x1-x0);col(x,y,o);var k=(j*w+i)*4;d[k]=o[0];d[k+1]=o[1];d[k+2]=o[2];d[k+3]=255;}}
  ctx.putImageData(im,0,0);
})();
})();
</script>
</body></html>
